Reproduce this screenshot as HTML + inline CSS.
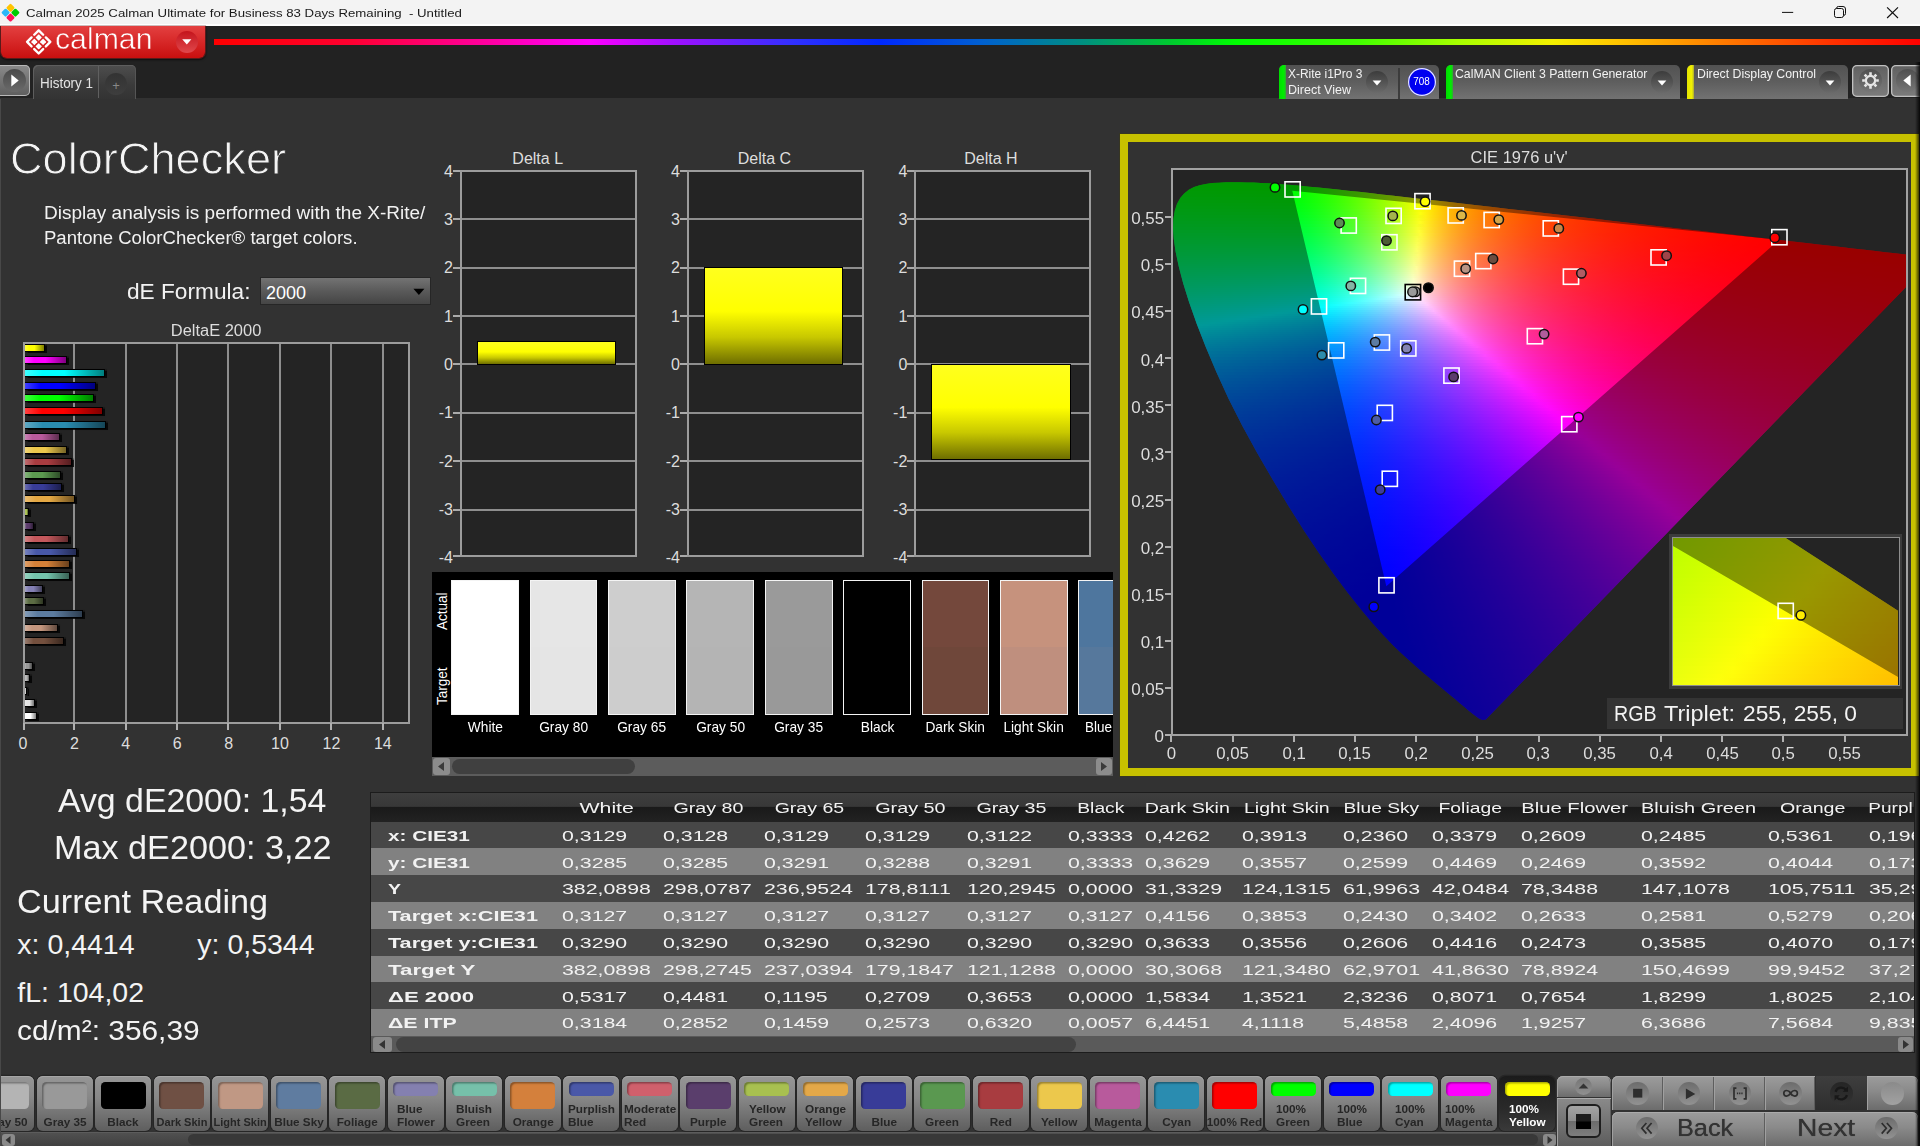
<!DOCTYPE html><html><head><meta charset="utf-8"><title>Calman ColorChecker</title><style>
html,body{margin:0;padding:0}body{width:1920px;height:1146px;overflow:hidden;background:#323232;position:relative;font-family:"Liberation Sans",sans-serif;color:#eee}
div,span.t,svg{position:absolute;box-sizing:border-box}.cg i{position:absolute;display:block}.t{white-space:pre;line-height:1;transform-origin:0 0}
</style></head><body>
<div style="left:0px;top:0px;width:1920px;height:25.7px;background:linear-gradient(#f3f3f3 24.4px,#fff 24.4px)"></div>
<svg style="left:0;top:0" width="24" height="25" viewBox="0 0 24 25"><g transform="translate(10.5,12.7) rotate(45)">
<rect x="-6.6" y="-6.6" width="6.3" height="6.3" rx="1.2" fill="#ffc400"/><rect x="0.3" y="-6.6" width="6.3" height="6.3" rx="1.2" fill="#0c0"/>
<rect x="-6.6" y="0.3" width="6.3" height="6.3" rx="1.2" fill="#2bb8f8"/><rect x="0.3" y="0.3" width="6.3" height="6.3" rx="1.2" fill="#ff1458"/></g></svg>
<span class="t" style="left:26px;top:7.71px;font-size:11.8px;color:#1a1a1a;transform:scaleX(1.121);">Calman 2025 Calman Ultimate for Business 83 Days Remaining  - Untitled</span>
<svg style="left:1770px;top:0" width="150" height="25" viewBox="1770 0 150 25" fill="none" stroke="#111" stroke-width="1">
<path d="M1782 12.4h11.2"/><rect x="1834.5" y="8.5" width="9" height="9" rx="2"/><path d="M1836.6 8.4v-.1a1.8 1.8 0 0 1 1.8-1.8h4.6a2.5 2.5 0 0 1 2.5 2.5v4.6a1.8 1.8 0 0 1-1.8 1.8h-.1"/>
<path d="M1887.1 7.3l10.9 10.7M1898 7.3l-10.9 10.7" stroke-width="1.15"/></svg>
<div style="left:0px;top:25.7px;width:1920px;height:72.8px;background:#222"></div>
<div style="left:1px;top:25.7px;width:204px;height:32.4px;background:linear-gradient(#e34040,#d82a2a 45%,#c90f0f);border-radius:0 0 6px 6px;box-shadow:0 0 0 1px #5a1a1a,0 1px 2px 1px rgba(0,0,0,.6);clip-path:inset(0 -4px -5px -4px)"></div>
<svg style="left:20px;top:25px" width="40" height="34" viewBox="20 25 40 34"><g transform="translate(38.7,41.9) rotate(45)" fill="#fff">
<rect x="-5.4" y="-5.4" width="4.6" height="4.6" rx=".5"/><rect x=".8" y="-5.4" width="4.6" height="4.6" rx=".5"/><rect x="-5.4" y=".8" width="4.6" height="4.6" rx=".5"/><rect x=".8" y=".8" width="4.6" height="4.6" rx=".5"/>
<g fill="none" stroke="#fff" stroke-width="2.4" stroke-linecap="round" stroke-linejoin="round"><path d="M-8.2 -1.9V-8.2H-1.9"/><path d="M8.2 -1.9V-8.2H1.9"/><path d="M-8.2 1.9V8.2H-1.9"/><path d="M8.2 1.9V8.2H1.9"/></g></g></svg>
<span class="t" style="left:54.6px;top:24.75px;font-size:29px;color:#fff;transform:scaleX(1.043);-webkit-text-stroke:.5px #d42020;">calman</span>
<div style="left:175.5px;top:30.5px;width:22px;height:22px;border-radius:50%;background:linear-gradient(#c4141c,#e0484c)"></div>
<svg style="left:180px;top:37px" width="14" height="10" viewBox="0 0 14 10"><path d="M2.2 2.2h9.2l-4.6 5.2z" fill="#fff"/></svg>
<div style="left:214px;top:39.3px;width:1706px;height:5.6px;background:linear-gradient(90deg,#f00 0,#ff0030 8%,#ff00a0 16%,#f0f 22%,#a010ff 27%,#3030ff 34%,#0028ff 39%,#0060d0 45%,#009080 51%,#00c830 56%,#0f0 60%,#40ff00 67%,#a8ff00 73%,#f4f000 78.5%,#ffc800 82%,#ff8000 88%,#ff3000 95%,#f00 100%);filter:blur(.7px);clip-path:inset(-3px 0 -3px 0)"></div>
<div style="left:-4px;top:65px;width:34px;height:31px;border-radius:5px;background:linear-gradient(#8a8a8a,#5e5e5e);box-shadow:inset 0 0 0 1px #b8b8b8"></div>
<div style="left:3px;top:69px;width:23px;height:23px;border-radius:50%;background:linear-gradient(#4a4a4a,#6a6a6a)"></div>
<svg style="left:9px;top:73px" width="12" height="15" viewBox="0 0 12 15"><path d="M2.3 1.6l7.4 5.9-7.4 5.9z" fill="#fff"/></svg>
<div style="left:33px;top:65px;width:103px;height:34px;border-radius:5px 5px 0 0;background:linear-gradient(#4e4e4e,#3a3a3a 60%,#333);box-shadow:inset 1px 1px 0 #5e5e5e,inset -1px 0 0 #555"></div>
<div style="left:98px;top:66px;width:1px;height:32px;background:#606060"></div>
<span class="t" style="left:39.5px;top:76.45px;font-size:14px;color:#e4e4e4;transform:scaleX(0.96);">History 1</span>
<div style="left:105px;top:73px;width:22px;height:22px;border-radius:50%;background:linear-gradient(#333,#3e3e3e)"></div>
<span class="t" style="left:112.2px;top:78.5px;font-size:13px;color:#888;transform-origin:50% 0;">+</span>
<div style="left:1278.5px;top:65px;width:160.5px;height:34px;border-radius:5px 5px 0 0;background:linear-gradient(#525252,#5e5e5e 50%,#727272);overflow:hidden"><div style="left:0;top:0;width:7px;height:34px;background:linear-gradient(90deg,#0d0,#0e0 70%,#3a3)"></div></div>
<span class="t" style="left:1288px;top:67.03px;font-size:13.2px;color:#f2f2f2;transform:scaleX(0.907);">X-Rite i1Pro 3</span>
<span class="t" style="left:1288px;top:83.43px;font-size:13.2px;color:#f2f2f2;transform:scaleX(0.948);">Direct View</span>
<div style="left:1366px;top:70.7px;width:22px;height:22px;border-radius:50%;background:linear-gradient(#3c3c3c,#6a6a6a)"></div>
<svg style="left:1370px;top:77.7px" width="14" height="10" viewBox="0 0 14 10"><path d="M2.6 2.4h8.8l-4.4 5z" fill="#fff"/></svg>
<div style="left:1398px;top:68px;width:1.5px;height:31px;background:#3c3c3c"></div>
<div style="left:1407.5px;top:67.5px;width:28.5px;height:28.5px;border-radius:50%;background:#0000f0;box-shadow:inset 0 0 0 1.2px #e8e8ff"></div>
<span class="t" style="left:1412.21px;top:76.27px;font-size:11.5px;color:#fff;transform:scaleX(0.86);transform-origin:50% 0;">708</span>
<div style="left:1446px;top:65px;width:234px;height:34px;border-radius:5px 5px 0 0;background:linear-gradient(#525252,#5e5e5e 50%,#727272);overflow:hidden"><div style="left:0;top:0;width:7px;height:34px;background:linear-gradient(90deg,#0d0,#0e0 70%,#3a3)"></div></div>
<span class="t" style="left:1455px;top:67.03px;font-size:13.2px;color:#f2f2f2;transform:scaleX(0.931);">CalMAN Client 3 Pattern Generator</span>
<div style="left:1650.7px;top:70.7px;width:22px;height:22px;border-radius:50%;background:linear-gradient(#3c3c3c,#6a6a6a)"></div>
<svg style="left:1654.7px;top:77.7px" width="14" height="10" viewBox="0 0 14 10"><path d="M2.6 2.4h8.8l-4.4 5z" fill="#fff"/></svg>
<div style="left:1687px;top:65px;width:161px;height:34px;border-radius:5px 5px 0 0;background:linear-gradient(#525252,#5e5e5e 50%,#727272);overflow:hidden"><div style="left:0;top:0;width:7px;height:34px;background:linear-gradient(90deg,#e6e600,#f0f000 70%,#aa3)"></div></div>
<span class="t" style="left:1696.5px;top:67.03px;font-size:13.2px;color:#f2f2f2;transform:scaleX(0.933);">Direct Display Control</span>
<div style="left:1819px;top:70.7px;width:22px;height:22px;border-radius:50%;background:linear-gradient(#3c3c3c,#6a6a6a)"></div>
<svg style="left:1823px;top:77.7px" width="14" height="10" viewBox="0 0 14 10"><path d="M2.6 2.4h8.8l-4.4 5z" fill="#fff"/></svg>
<div style="left:1851.5px;top:65px;width:37.5px;height:31.5px;border-radius:5px;background:linear-gradient(#606060,#7c7c7c);box-shadow:inset 0 0 0 1.3px #c0c0c0"></div>
<div style="left:1859px;top:69px;width:23px;height:23px;border-radius:50%;background:linear-gradient(#505050,#767676)"></div>
<svg style="left:1861px;top:71px" width="19" height="19" viewBox="-9.5 -9.5 19 19"><g fill="none" stroke="#e6e6e6"><circle r="4.6" stroke-width="2.2"/>
<g stroke-width="2.6"><path d="M0-5.6V-8.3M0 5.6V8.3M-5.6 0H-8.3M5.6 0H8.3M3.96 3.96l1.9 1.9M-3.96 3.96l-1.9 1.9M3.96-3.96l1.9-1.9M-3.96-3.96l-1.9-1.9"/></g></g></svg>
<div style="left:1890.5px;top:65px;width:40px;height:31.5px;border-radius:5px;background:linear-gradient(#606060,#7c7c7c);box-shadow:inset 0 0 0 1.3px #c0c0c0"></div>
<div style="left:1896px;top:69px;width:23px;height:23px;border-radius:50%;background:linear-gradient(#505050,#767676)"></div>
<svg style="left:1901px;top:73px" width="12" height="15" viewBox="0 0 12 15"><path d="M9.7 1.6l-7.4 5.9 7.4 5.9z" fill="#fff"/></svg>
<span class="t" style="left:10px;top:138.18px;font-size:43.5px;color:#f4f4f4;transform:scaleX(1.038);-webkit-text-stroke:.9px #323232;">ColorChecker</span>
<span class="t" style="left:43.8px;top:204.16px;font-size:18px;color:#f2f2f2;transform:scaleX(1.056);">Display analysis is performed with the X-Rite/</span>
<span class="t" style="left:43.8px;top:229.36px;font-size:18px;color:#f2f2f2;transform:scaleX(1.03);">Pantone ColorChecker® target colors.</span>
<span class="t" style="left:127.2px;top:280.85px;font-size:21.8px;color:#f2f2f2;transform:scaleX(1.04);">dE Formula:</span>
<div style="left:260px;top:276.5px;width:171px;height:28.5px;background:linear-gradient(#737373,#5a5a5a 50%,#454545);border:1px solid #262626"></div>
<span class="t" style="left:266px;top:284.46px;font-size:18px;color:#fff;">2000</span>
<svg style="left:412px;top:287px" width="14" height="10" viewBox="0 0 14 10"><path d="M1.4 1.7h11l-5.5 6.3z" fill="#000"/></svg>
<span class="t" style="left:172.47px;top:322.86px;font-size:16px;color:#ddd;transform:scaleX(1.028);transform-origin:50% 0;">DeltaE 2000</span>
<div style="left:23px;top:342px;width:386.5px;height:382px;background:#242424;border:2px solid #9c9c9c;overflow:hidden"><div style="left:48.1px;top:0;width:2px;height:100%;background:#8e8e8e"></div><div style="left:99.5px;top:0;width:2px;height:100%;background:#8e8e8e"></div><div style="left:150.9px;top:0;width:2px;height:100%;background:#8e8e8e"></div><div style="left:202.3px;top:0;width:2px;height:100%;background:#8e8e8e"></div><div style="left:253.7px;top:0;width:2px;height:100%;background:#8e8e8e"></div><div style="left:305.1px;top:0;width:2px;height:100%;background:#8e8e8e"></div><div style="left:356.5px;top:0;width:2px;height:100%;background:#8e8e8e"></div></div>
<div style="left:24.9px;top:344.1px;width:19.85px;height:8px;background:linear-gradient(90deg,#ffff3f 0,#ffff00 22%,#ffff00 50%,#7f7f00 100%);border:1px solid #000;border-left:0;box-shadow:1px 0 1px 0.5px rgba(0,0,0,.8)"></div>
<div style="left:24.9px;top:356.4px;width:41.86px;height:8px;background:linear-gradient(90deg,#ff3fff 0,#ff00ff 22%,#ff00ff 50%,#7f007f 100%);border:1px solid #000;border-left:0;box-shadow:1px 0 1px 0.5px rgba(0,0,0,.8)"></div>
<div style="left:24.9px;top:368.9px;width:79.75px;height:8px;background:linear-gradient(90deg,#3fffff 0,#00ffff 22%,#00ffff 50%,#007f7f 100%);border:1px solid #000;border-left:0;box-shadow:1px 0 1px 0.5px rgba(0,0,0,.8)"></div>
<div style="left:24.9px;top:381.6px;width:70.79px;height:8px;background:linear-gradient(90deg,#3f3fff 0,#0000ff 22%,#0000ff 50%,#00007f 100%);border:1px solid #000;border-left:0;box-shadow:1px 0 1px 0.5px rgba(0,0,0,.8)"></div>
<div style="left:24.9px;top:394.1px;width:68.74px;height:8px;background:linear-gradient(90deg,#3fff3f 0,#00ff00 22%,#00ff00 50%,#007f00 100%);border:1px solid #000;border-left:0;box-shadow:1px 0 1px 0.5px rgba(0,0,0,.8)"></div>
<div style="left:24.9px;top:406.6px;width:77.96px;height:8px;background:linear-gradient(90deg,#ff3f3f 0,#ff0000 22%,#ff0000 50%,#7f0000 100%);border:1px solid #000;border-left:0;box-shadow:1px 0 1px 0.5px rgba(0,0,0,.8)"></div>
<div style="left:24.9px;top:420.5px;width:81.03px;height:8px;background:linear-gradient(90deg,#5fa8c3 0,#2a8cb0 22%,#2a8cb0 50%,#154658 100%);border:1px solid #000;border-left:0;box-shadow:1px 0 1px 0.5px rgba(0,0,0,.8)"></div>
<div style="left:24.9px;top:433.1px;width:34.7px;height:8px;background:linear-gradient(90deg,#c983b4 0,#b85a9c 22%,#b85a9c 50%,#5c2d4e 100%);border:1px solid #000;border-left:0;box-shadow:1px 0 1px 0.5px rgba(0,0,0,.8)"></div>
<div style="left:24.9px;top:445.7px;width:41.86px;height:8px;background:linear-gradient(90deg,#f0d578 0,#ecc84c 22%,#ecc84c 50%,#766426 100%);border:1px solid #000;border-left:0;box-shadow:1px 0 1px 0.5px rgba(0,0,0,.8)"></div>
<div style="left:24.9px;top:458.1px;width:46.73px;height:8px;background:linear-gradient(90deg,#bd6c6f 0,#a83c40 22%,#a83c40 50%,#541e20 100%);border:1px solid #000;border-left:0;box-shadow:1px 0 1px 0.5px rgba(0,0,0,.8)"></div>
<div style="left:24.9px;top:470.6px;width:35.98px;height:8px;background:linear-gradient(90deg,#84b37b 0,#5c9a50 22%,#5c9a50 50%,#2e4d28 100%);border:1px solid #000;border-left:0;box-shadow:1px 0 1px 0.5px rgba(0,0,0,.8)"></div>
<div style="left:24.9px;top:483px;width:37.51px;height:8px;background:linear-gradient(90deg,#696cb1 0,#383c98 22%,#383c98 50%,#1c1e4c 100%);border:1px solid #000;border-left:0;box-shadow:1px 0 1px 0.5px rgba(0,0,0,.8)"></div>
<div style="left:24.9px;top:495.4px;width:49.8px;height:8px;background:linear-gradient(90deg,#eabd72 0,#e4a844 22%,#e4a844 50%,#725422 100%);border:1px solid #000;border-left:0;box-shadow:1px 0 1px 0.5px rgba(0,0,0,.8)"></div>
<div style="left:24.9px;top:508.3px;width:4.23px;height:8px;background:linear-gradient(90deg,#bdcf7b 0,#a8c050 22%,#a8c050 50%,#546028 100%);border:1px solid #000;border-left:0;box-shadow:1px 0 1px 0.5px rgba(0,0,0,.8)"></div>
<div style="left:24.9px;top:522.3px;width:9.1px;height:8px;background:linear-gradient(90deg,#846c90 0,#5c3c6c 22%,#5c3c6c 50%,#2e1e36 100%);border:1px solid #000;border-left:0;box-shadow:1px 0 1px 0.5px rgba(0,0,0,.8)"></div>
<div style="left:24.9px;top:534.8px;width:43.66px;height:8px;background:linear-gradient(90deg,#d28184 0,#c4585c 22%,#c4585c 50%,#622c2e 100%);border:1px solid #000;border-left:0;box-shadow:1px 0 1px 0.5px rgba(0,0,0,.8)"></div>
<div style="left:24.9px;top:547.6px;width:52.36px;height:8px;background:linear-gradient(90deg,#7581bd 0,#4858a8 22%,#4858a8 50%,#242c54 100%);border:1px solid #000;border-left:0;box-shadow:1px 0 1px 0.5px rgba(0,0,0,.8)"></div>
<div style="left:24.9px;top:559.7px;width:44.68px;height:8px;background:linear-gradient(90deg,#de9f69 0,#d48038 22%,#d48038 50%,#6a401c 100%);border:1px solid #000;border-left:0;box-shadow:1px 0 1px 0.5px rgba(0,0,0,.8)"></div>
<div style="left:24.9px;top:572.1px;width:45.45px;height:8px;background:linear-gradient(90deg,#96d2c0 0,#74c4ac 22%,#74c4ac 50%,#3a6256 100%);border:1px solid #000;border-left:0;box-shadow:1px 0 1px 0.5px rgba(0,0,0,.8)"></div>
<div style="left:24.9px;top:584.6px;width:18.31px;height:8px;background:linear-gradient(90deg,#a29fc6 0,#8480b4 22%,#8480b4 50%,#42405a 100%);border:1px solid #000;border-left:0;box-shadow:1px 0 1px 0.5px rgba(0,0,0,.8)"></div>
<div style="left:24.9px;top:597px;width:19.34px;height:8px;background:linear-gradient(90deg,#849072 0,#5c6c44 22%,#5c6c44 50%,#2e3622 100%);border:1px solid #000;border-left:0;box-shadow:1px 0 1px 0.5px rgba(0,0,0,.8)"></div>
<div style="left:24.9px;top:609.9px;width:57.99px;height:8px;background:linear-gradient(90deg,#849cb7 0,#5c7ca0 22%,#5c7ca0 50%,#2e3e50 100%);border:1px solid #000;border-left:0;box-shadow:1px 0 1px 0.5px rgba(0,0,0,.8)"></div>
<div style="left:24.9px;top:623.9px;width:33.16px;height:8px;background:linear-gradient(90deg,#d2b09e 0,#c4967e 22%,#c4967e 50%,#624b3f 100%);border:1px solid #000;border-left:0;box-shadow:1px 0 1px 0.5px rgba(0,0,0,.8)"></div>
<div style="left:24.9px;top:636.8px;width:39.05px;height:8px;background:linear-gradient(90deg,#967b6e 0,#74503e 22%,#74503e 50%,#3a281f 100%);border:1px solid #000;border-left:0;box-shadow:1px 0 1px 0.5px rgba(0,0,0,.8)"></div>
<div style="left:24.9px;top:661.6px;width:7.94px;height:8px;background:linear-gradient(90deg,#b2b2b2 0,#999 22%,#999 50%,#4c4c4c 100%);border:1px solid #000;border-left:0;box-shadow:1px 0 1px 0.5px rgba(0,0,0,.8)"></div>
<div style="left:24.9px;top:674.1px;width:5.51px;height:8px;background:linear-gradient(90deg,#c6c6c6 0,#b4b4b4 22%,#b4b4b4 50%,#5a5a5a 100%);border:1px solid #000;border-left:0;box-shadow:1px 0 1px 0.5px rgba(0,0,0,.8)"></div>
<div style="left:24.9px;top:686.5px;width:1.67px;height:8px;background:linear-gradient(90deg,#d9d9d9 0,#cdcdcd 22%,#cdcdcd 50%,#666666 100%);border:1px solid #000;border-left:0;box-shadow:1px 0 1px 0.5px rgba(0,0,0,.8)"></div>
<div style="left:24.9px;top:699px;width:10.07px;height:8px;background:linear-gradient(90deg,#ebebeb 0,#e5e5e5 22%,#e5e5e5 50%,#727272 100%);border:1px solid #000;border-left:0;box-shadow:1px 0 1px 0.5px rgba(0,0,0,.8)"></div>
<div style="left:24.9px;top:711.8px;width:12.17px;height:8px;background:linear-gradient(90deg,#ffffff 0,#fff 22%,#fff 50%,#7f7f7f 100%);border:1px solid #000;border-left:0;box-shadow:1px 0 1px 0.5px rgba(0,0,0,.8)"></div>
<div style="left:22.8px;top:723px;width:2px;height:7px;background:#b0b0b0"></div>
<span class="t" style="left:18.55px;top:735.76px;font-size:16px;color:#ddd;transform-origin:50% 0;">0</span>
<div style="left:73.1px;top:723px;width:2px;height:7px;background:#b0b0b0"></div>
<span class="t" style="left:69.95px;top:735.76px;font-size:16px;color:#ddd;transform-origin:50% 0;">2</span>
<div style="left:124.5px;top:723px;width:2px;height:7px;background:#b0b0b0"></div>
<span class="t" style="left:121.35px;top:735.76px;font-size:16px;color:#ddd;transform-origin:50% 0;">4</span>
<div style="left:175.9px;top:723px;width:2px;height:7px;background:#b0b0b0"></div>
<span class="t" style="left:172.75px;top:735.76px;font-size:16px;color:#ddd;transform-origin:50% 0;">6</span>
<div style="left:227.3px;top:723px;width:2px;height:7px;background:#b0b0b0"></div>
<span class="t" style="left:224.15px;top:735.76px;font-size:16px;color:#ddd;transform-origin:50% 0;">8</span>
<div style="left:278.7px;top:723px;width:2px;height:7px;background:#b0b0b0"></div>
<span class="t" style="left:271.1px;top:735.76px;font-size:16px;color:#ddd;transform-origin:50% 0;">10</span>
<div style="left:330.1px;top:723px;width:2px;height:7px;background:#b0b0b0"></div>
<span class="t" style="left:322.5px;top:735.76px;font-size:16px;color:#ddd;transform-origin:50% 0;">12</span>
<div style="left:381.5px;top:723px;width:2px;height:7px;background:#b0b0b0"></div>
<span class="t" style="left:373.9px;top:735.76px;font-size:16px;color:#ddd;transform-origin:50% 0;">14</span>
<span class="t" style="left:58.3px;top:784.79px;font-size:32.5px;color:#f4f4f4;transform:scaleX(1.041);">Avg dE2000: 1,54</span>
<span class="t" style="left:54px;top:831.79px;font-size:32.5px;color:#f4f4f4;transform:scaleX(1.052);">Max dE2000: 3,22</span>
<span class="t" style="left:17.3px;top:885.99px;font-size:32.5px;color:#f4f4f4;transform:scaleX(1.053);">Current Reading</span>
<span class="t" style="left:17.3px;top:930.17px;font-size:28.5px;color:#f4f4f4;">x: 0,4414</span>
<span class="t" style="left:197.3px;top:930.17px;font-size:28.5px;color:#f4f4f4;">y: 0,5344</span>
<span class="t" style="left:17.3px;top:977.57px;font-size:28.5px;color:#f4f4f4;">fL: 104,02</span>
<span class="t" style="left:17.3px;top:1016.07px;font-size:28.5px;color:#f4f4f4;transform:scaleX(1.048);">cd/m²: 356,39</span>
<div style="left:459.5px;top:169.6px;width:177px;height:387.8px;background:#242424;border:2px solid #9c9c9c;overflow:hidden"><div style="left:0;top:46.6px;width:100%;height:2px;background:#8e8e8e"></div><div style="left:0;top:95px;width:100%;height:2px;background:#8e8e8e"></div><div style="left:0;top:143.4px;width:100%;height:2px;background:#8e8e8e"></div><div style="left:0;top:191.8px;width:100%;height:2px;background:#8e8e8e"></div><div style="left:0;top:240.2px;width:100%;height:2px;background:#8e8e8e"></div><div style="left:0;top:288.6px;width:100%;height:2px;background:#8e8e8e"></div><div style="left:0;top:337px;width:100%;height:2px;background:#8e8e8e"></div></div>
<div style="left:453px;top:169.6px;width:6.5px;height:2px;background:#aaa"></div>
<span class="t" style="left:444.09px;top:164.06px;font-size:16px;color:#ddd;transform-origin:100% 0;">4</span>
<div style="left:453px;top:218.2px;width:6.5px;height:2px;background:#aaa"></div>
<span class="t" style="left:444.09px;top:211.86px;font-size:16px;color:#ddd;transform-origin:100% 0;">3</span>
<div style="left:453px;top:266.6px;width:6.5px;height:2px;background:#aaa"></div>
<span class="t" style="left:444.09px;top:260.26px;font-size:16px;color:#ddd;transform-origin:100% 0;">2</span>
<div style="left:453px;top:315px;width:6.5px;height:2px;background:#aaa"></div>
<span class="t" style="left:444.09px;top:308.66px;font-size:16px;color:#ddd;transform-origin:100% 0;">1</span>
<div style="left:453px;top:363.4px;width:6.5px;height:2px;background:#aaa"></div>
<span class="t" style="left:444.09px;top:357.06px;font-size:16px;color:#ddd;transform-origin:100% 0;">0</span>
<div style="left:453px;top:411.8px;width:6.5px;height:2px;background:#aaa"></div>
<span class="t" style="left:438.77px;top:405.46px;font-size:16px;color:#ddd;transform-origin:100% 0;">-1</span>
<div style="left:453px;top:460.2px;width:6.5px;height:2px;background:#aaa"></div>
<span class="t" style="left:438.77px;top:453.86px;font-size:16px;color:#ddd;transform-origin:100% 0;">-2</span>
<div style="left:453px;top:508.6px;width:6.5px;height:2px;background:#aaa"></div>
<span class="t" style="left:438.77px;top:502.26px;font-size:16px;color:#ddd;transform-origin:100% 0;">-3</span>
<div style="left:453px;top:555.4px;width:6.5px;height:2px;background:#aaa"></div>
<span class="t" style="left:438.77px;top:550.26px;font-size:16px;color:#ddd;transform-origin:100% 0;">-4</span>
<span class="t" style="left:512.35px;top:150.86px;font-size:16px;color:#ddd;transform-origin:50% 0;">Delta L</span>
<div style="left:477px;top:341.15px;width:139.3px;height:23.75px;background:linear-gradient(#ffff1e 0,#ff0 45%,#c8c800 72%,#6e6e00 100%);border:1px solid #000"></div>
<div style="left:686.5px;top:169.6px;width:177px;height:387.8px;background:#242424;border:2px solid #9c9c9c;overflow:hidden"><div style="left:0;top:46.6px;width:100%;height:2px;background:#8e8e8e"></div><div style="left:0;top:95px;width:100%;height:2px;background:#8e8e8e"></div><div style="left:0;top:143.4px;width:100%;height:2px;background:#8e8e8e"></div><div style="left:0;top:191.8px;width:100%;height:2px;background:#8e8e8e"></div><div style="left:0;top:240.2px;width:100%;height:2px;background:#8e8e8e"></div><div style="left:0;top:288.6px;width:100%;height:2px;background:#8e8e8e"></div><div style="left:0;top:337px;width:100%;height:2px;background:#8e8e8e"></div></div>
<div style="left:680px;top:169.6px;width:6.5px;height:2px;background:#aaa"></div>
<span class="t" style="left:671.09px;top:164.06px;font-size:16px;color:#ddd;transform-origin:100% 0;">4</span>
<div style="left:680px;top:218.2px;width:6.5px;height:2px;background:#aaa"></div>
<span class="t" style="left:671.09px;top:211.86px;font-size:16px;color:#ddd;transform-origin:100% 0;">3</span>
<div style="left:680px;top:266.6px;width:6.5px;height:2px;background:#aaa"></div>
<span class="t" style="left:671.09px;top:260.26px;font-size:16px;color:#ddd;transform-origin:100% 0;">2</span>
<div style="left:680px;top:315px;width:6.5px;height:2px;background:#aaa"></div>
<span class="t" style="left:671.09px;top:308.66px;font-size:16px;color:#ddd;transform-origin:100% 0;">1</span>
<div style="left:680px;top:363.4px;width:6.5px;height:2px;background:#aaa"></div>
<span class="t" style="left:671.09px;top:357.06px;font-size:16px;color:#ddd;transform-origin:100% 0;">0</span>
<div style="left:680px;top:411.8px;width:6.5px;height:2px;background:#aaa"></div>
<span class="t" style="left:665.77px;top:405.46px;font-size:16px;color:#ddd;transform-origin:100% 0;">-1</span>
<div style="left:680px;top:460.2px;width:6.5px;height:2px;background:#aaa"></div>
<span class="t" style="left:665.77px;top:453.86px;font-size:16px;color:#ddd;transform-origin:100% 0;">-2</span>
<div style="left:680px;top:508.6px;width:6.5px;height:2px;background:#aaa"></div>
<span class="t" style="left:665.77px;top:502.26px;font-size:16px;color:#ddd;transform-origin:100% 0;">-3</span>
<div style="left:680px;top:555.4px;width:6.5px;height:2px;background:#aaa"></div>
<span class="t" style="left:665.77px;top:550.26px;font-size:16px;color:#ddd;transform-origin:100% 0;">-4</span>
<span class="t" style="left:737.82px;top:150.86px;font-size:16px;color:#ddd;transform-origin:50% 0;">Delta C</span>
<div style="left:704px;top:267.1px;width:139.3px;height:97.8px;background:linear-gradient(#ffff1e 0,#ff0 45%,#c8c800 72%,#6e6e00 100%);border:1px solid #000"></div>
<div style="left:913.8px;top:169.6px;width:177px;height:387.8px;background:#242424;border:2px solid #9c9c9c;overflow:hidden"><div style="left:0;top:46.6px;width:100%;height:2px;background:#8e8e8e"></div><div style="left:0;top:95px;width:100%;height:2px;background:#8e8e8e"></div><div style="left:0;top:143.4px;width:100%;height:2px;background:#8e8e8e"></div><div style="left:0;top:191.8px;width:100%;height:2px;background:#8e8e8e"></div><div style="left:0;top:240.2px;width:100%;height:2px;background:#8e8e8e"></div><div style="left:0;top:288.6px;width:100%;height:2px;background:#8e8e8e"></div><div style="left:0;top:337px;width:100%;height:2px;background:#8e8e8e"></div></div>
<div style="left:907.3px;top:169.6px;width:6.5px;height:2px;background:#aaa"></div>
<span class="t" style="left:898.39px;top:164.06px;font-size:16px;color:#ddd;transform-origin:100% 0;">4</span>
<div style="left:907.3px;top:218.2px;width:6.5px;height:2px;background:#aaa"></div>
<span class="t" style="left:898.39px;top:211.86px;font-size:16px;color:#ddd;transform-origin:100% 0;">3</span>
<div style="left:907.3px;top:266.6px;width:6.5px;height:2px;background:#aaa"></div>
<span class="t" style="left:898.39px;top:260.26px;font-size:16px;color:#ddd;transform-origin:100% 0;">2</span>
<div style="left:907.3px;top:315px;width:6.5px;height:2px;background:#aaa"></div>
<span class="t" style="left:898.39px;top:308.66px;font-size:16px;color:#ddd;transform-origin:100% 0;">1</span>
<div style="left:907.3px;top:363.4px;width:6.5px;height:2px;background:#aaa"></div>
<span class="t" style="left:898.39px;top:357.06px;font-size:16px;color:#ddd;transform-origin:100% 0;">0</span>
<div style="left:907.3px;top:411.8px;width:6.5px;height:2px;background:#aaa"></div>
<span class="t" style="left:893.07px;top:405.46px;font-size:16px;color:#ddd;transform-origin:100% 0;">-1</span>
<div style="left:907.3px;top:460.2px;width:6.5px;height:2px;background:#aaa"></div>
<span class="t" style="left:893.07px;top:453.86px;font-size:16px;color:#ddd;transform-origin:100% 0;">-2</span>
<div style="left:907.3px;top:508.6px;width:6.5px;height:2px;background:#aaa"></div>
<span class="t" style="left:893.07px;top:502.26px;font-size:16px;color:#ddd;transform-origin:100% 0;">-3</span>
<div style="left:907.3px;top:555.4px;width:6.5px;height:2px;background:#aaa"></div>
<span class="t" style="left:893.07px;top:550.26px;font-size:16px;color:#ddd;transform-origin:100% 0;">-4</span>
<span class="t" style="left:964.32px;top:150.86px;font-size:16px;color:#ddd;transform-origin:50% 0;">Delta H</span>
<div style="left:931.3px;top:363.9px;width:139.3px;height:96.35px;background:linear-gradient(#ffff1e 0,#ff0 45%,#c8c800 72%,#6e6e00 100%);border:1px solid #000"></div>
<div style="left:432px;top:571.5px;width:681px;height:204.5px;background:#000"></div>
<div style="left:451.2px;top:579.5px;width:67.8px;height:135px;background:linear-gradient(#fff 50%,#fff 50%);border:1.2px solid #f4f4f4;border-right:1.2px solid #f4f4f4;"></div>
<div style="left:529.6px;top:579.5px;width:67.8px;height:135px;background:linear-gradient(#e6e6e6 50%,#e5e5e5 50%);border:1.2px solid #f4f4f4;border-right:1.2px solid #f4f4f4;"></div>
<div style="left:608px;top:579.5px;width:67.8px;height:135px;background:linear-gradient(#cecece 50%,#cdcdcd 50%);border:1.2px solid #f4f4f4;border-right:1.2px solid #f4f4f4;"></div>
<div style="left:686.4px;top:579.5px;width:67.8px;height:135px;background:linear-gradient(#b5b5b5 50%,#b4b4b4 50%);border:1.2px solid #f4f4f4;border-right:1.2px solid #f4f4f4;"></div>
<div style="left:764.8px;top:579.5px;width:67.8px;height:135px;background:linear-gradient(#9a9a9a 50%,#999 50%);border:1.2px solid #f4f4f4;border-right:1.2px solid #f4f4f4;"></div>
<div style="left:843.2px;top:579.5px;width:67.8px;height:135px;background:linear-gradient(#000 50%,#000 50%);border:1.2px solid #f4f4f4;border-right:1.2px solid #f4f4f4;"></div>
<div style="left:921.6px;top:579.5px;width:67.8px;height:135px;background:linear-gradient(#74483c 50%,#6f473a 50%);border:1.2px solid #f4f4f4;border-right:1.2px solid #f4f4f4;"></div>
<div style="left:1000px;top:579.5px;width:67.8px;height:135px;background:linear-gradient(#c6927d 50%,#bf8f7e 50%);border:1.2px solid #f4f4f4;border-right:1.2px solid #f4f4f4;"></div>
<div style="left:1078.4px;top:579.5px;width:34.6px;height:135px;background:linear-gradient(#4e769e 50%,#56789c 50%);border:1.2px solid #f4f4f4;border-right:0;"></div>
<span class="t" style="left:466.7px;top:719.81px;font-size:14.4px;color:#fff;transform-origin:50% 0;transform:scaleX(.955);">White</span>
<span class="t" style="left:537.9px;top:719.81px;font-size:14.4px;color:#fff;transform-origin:50% 0;transform:scaleX(.955);">Gray 80</span>
<span class="t" style="left:616.3px;top:719.81px;font-size:14.4px;color:#fff;transform-origin:50% 0;transform:scaleX(.955);">Gray 65</span>
<span class="t" style="left:694.7px;top:719.81px;font-size:14.4px;color:#fff;transform-origin:50% 0;transform:scaleX(.955);">Gray 50</span>
<span class="t" style="left:773.1px;top:719.81px;font-size:14.4px;color:#fff;transform-origin:50% 0;transform:scaleX(.955);">Gray 35</span>
<span class="t" style="left:859.5px;top:719.81px;font-size:14.4px;color:#fff;transform-origin:50% 0;transform:scaleX(.955);">Black</span>
<span class="t" style="left:924.3px;top:719.81px;font-size:14.4px;color:#fff;transform-origin:50% 0;transform:scaleX(.955);">Dark Skin</span>
<span class="t" style="left:1002.3px;top:719.81px;font-size:14.4px;color:#fff;transform-origin:50% 0;transform:scaleX(.955);">Light Skin</span>
<span class="t" style="left:1084.5px;top:719.81px;font-size:14.4px;color:#fff;transform:scaleX(0.937);">Blue</span>
<span class="t" style="left:434.5px;top:629.5px;font-size:14.4px;color:#fff;transform:rotate(-90deg) scaleX(.94);transform-origin:0 0">Actual</span>
<span class="t" style="left:434.5px;top:704.5px;font-size:14.4px;color:#fff;transform:rotate(-90deg) scaleX(.94);transform-origin:0 0">Target</span>
<div style="left:432px;top:757px;width:681px;height:18.5px;background:#5c5c5c"></div>
<div style="left:452px;top:758.5px;width:183px;height:15.5px;background:#404040;border-radius:8px"></div>
<div style="left:433px;top:758px;width:16.5px;height:16.5px;background:#8c8c8c;border-radius:3px"></div>
<svg style="left:436px;top:761px" width="10" height="11" viewBox="0 0 10 11"><path d="M8 1L2 5.5 8 10z" fill="#3a3a3a"/></svg>
<div style="left:1095.5px;top:758px;width:16.5px;height:16.5px;background:#8c8c8c;border-radius:3px"></div>
<svg style="left:1099px;top:761px" width="10" height="11" viewBox="0 0 10 11"><path d="M2 1l6 4.5L2 10z" fill="#3a3a3a"/></svg>
<div style="left:1120px;top:134px;width:799px;height:642px;border:8px solid #c7c100;box-shadow:0 0 0 1px rgba(60,58,20,.55)"></div>
<span class="t" style="left:1471.91px;top:149.76px;font-size:16px;color:#ddd;transform:scaleX(1.03);transform-origin:50% 0;">CIE 1976 u&#x27;v&#x27;</span>
<div style="left:1170.8px;top:168.1px;width:737.3px;height:568px;background:#242424;border:2px solid #a2a2a2"></div>
<div style="left:1172.8px;top:170.1px;width:733.3px;height:564px;overflow:hidden"><div class="cg" style="left:0;top:0;width:733.3px;height:564px;clip-path:polygon(313px 549.38px,309.74px 549.91px,306.16px 548.29px,303.39px 546.36px,299.81px 543.59px,295.06px 539.82px,292.3px 537.51px,289.27px 534.9px,285.94px 532.04px,282.28px 528.97px,278.22px 525.6px,273.68px 521.84px,268.64px 517.67px,263.13px 513.13px,257.2px 508.23px,250.81px 502.89px,243.87px 496.95px,236.34px 490.27px,228.3px 482.83px,219.76px 474.56px,210.48px 465px,200.02px 453.37px,188.09px 439.2px,174.98px 422.67px,161.09px 404.11px,146.5px 383.46px,131.27px 360.62px,115.66px 335.85px,99.96px 309.78px,84.42px 282.96px,69.47px 255.71px,55.76px 228.56px,43.66px 202.22px,33.06px 177.11px,23.89px 153.61px,16.31px 132.17px,10.35px 113.06px,5.91px 96.27px,2.83px 81.59px,0.98px 68.91px,0.28px 58.08px,0.65px 48.73px,1.98px 40.64px,4.27px 33.76px,7.45px 28.01px,11.38px 23.33px,16.02px 19.71px,21.23px 17.01px,26.89px 15.09px,32.95px 13.82px,39.35px 13.03px,46.03px 12.54px,52.93px 12.28px,59.88px 12.18px,66.82px 12.19px,73.8px 12.3px,80.9px 12.52px,88.14px 12.83px,95.58px 13.24px,103.24px 13.75px,111.14px 14.34px,119.31px 15.01px,127.77px 15.76px,136.55px 16.59px,145.67px 17.49px,155.15px 18.46px,165.02px 19.49px,175.3px 20.59px,186.01px 21.76px,197.16px 22.99px,208.77px 24.29px,220.87px 25.65px,233.46px 27.07px,246.55px 28.56px,260.16px 30.12px,274.28px 31.74px,288.92px 33.42px,304.07px 35.17px,319.7px 36.97px,335.82px 38.82px,352.38px 40.73px,369.36px 42.67px,386.68px 44.66px,404.33px 46.69px,422.25px 48.75px,440.23px 50.83px,457.94px 52.87px,475.3px 54.87px,492.5px 56.84px,509.64px 58.82px,526.49px 60.75px,542.67px 62.61px,558.08px 64.37px,572.81px 66.06px,586.87px 67.67px,600.19px 69.2px,612.72px 70.65px,624.43px 72px,635.34px 73.25px,645.5px 74.42px,654.98px 75.51px,663.8px 76.52px,672px 77.46px,679.74px 78.35px,687.1px 79.2px,694.05px 80px,700.54px 80.75px,706.6px 81.44px,712.22px 82.09px,717.43px 82.69px,722.2px 83.24px,726.47px 83.73px,730.22px 84.16px,733.58px 84.55px,736.68px 84.9px,742.01px 85.52px,746.22px 86.01px,749.2px 86.35px,752.76px 86.76px,756.51px 87.19px,759.79px 87.57px,761.6px 87.78px)"><i style="left:25.2px;top:12px;width:96px;height:3.3px;background:linear-gradient(90deg,#00ff02,#00ff01,#0f0,#0f0,#0f0,#0f0,#0f0,#0f0,#0f0,#0f0,#0f0,#0f0,#03ff00)"></i><i style="left:17.2px;top:15px;width:135px;height:3.3px;background:linear-gradient(90deg,#00ff05,#00ff04,#00ff03,#00ff03,#00ff02,#00ff01,#00ff01,#0f0,#0f0,#0f0,#0f0,#0f0,#0f0,#02ff00,#0aff00,#13ff00,#1eff00,#2aff00)"></i><i style="left:12.2px;top:18px;width:169px;height:3.3px;background:linear-gradient(90deg,#00ff08,#00ff07,#00ff07,#00ff06,#00ff05,#00ff05,#00ff04,#00ff03,#00ff03,#00ff02,#00ff01,#00ff01,#0f0,#0f0,#0f0,#08ff00,#1f0,#1bff00,#26ff00,#32ff00,#3fff00,#4cff00,#5aff00)"></i><i style="left:9.2px;top:21px;width:199px;height:3.3px;background:linear-gradient(90deg,#00ff0b,#00ff0b,#00ff0a,#00ff09,#00ff09,#00ff08,#00ff07,#00ff06,#00ff06,#00ff05,#00ff04,#00ff04,#00ff03,#00ff02,#01ff01,#09ff01,#12ff00,#1dff00,#29ff00,#35ff00,#43ff00,#51ff00,#60ff00,#6fff00,#80ff00,#92ff00)"></i><i style="left:6.2px;top:24px;width:229px;height:3.3px;background:linear-gradient(90deg,#00ff0f,#00ff0e,#00ff0d,#00ff0d,#00ff0c,#00ff0b,#00ff0b,#00ff0a,#00ff09,#00ff09,#00ff08,#00ff07,#00ff06,#00ff06,#00ff05,#04ff04,#0cff03,#17ff02,#22ff02,#2eff01,#3bff00,#48ff00,#57ff00,#6f0,#76ff00,#87ff00,#9f0,#acff00,#c0ff00,#d5ff00)"></i><i style="left:4.2px;top:27px;width:257px;height:3.3px;background:linear-gradient(90deg,#00ff12,#0f1,#0f1,#00ff10,#00ff10,#00ff0f,#00ff0e,#00ff0e,#00ff0d,#00ff0c,#00ff0c,#00ff0b,#00ff0a,#00ff09,#00ff09,#00ff08,#07ff07,#11ff06,#1bff05,#27ff04,#33ff04,#40ff03,#4eff02,#5dff01,#6cff00,#7dff00,#8eff00,#a0ff00,#b3ff00,#c8ff00,#df0,#f3ff00,#fff400,#ffdf00)"></i><i style="left:2.2px;top:30px;width:285px;height:3.3px;background:linear-gradient(90deg,#00ff16,#00ff15,#00ff14,#00ff14,#00ff13,#00ff13,#00ff12,#0f1,#0f1,#00ff10,#00ff0f,#00ff0e,#00ff0e,#00ff0d,#00ff0c,#00ff0b,#07ff0b,#10ff0a,#1bff09,#27ff08,#33ff07,#41ff06,#4fff05,#5eff05,#6eff04,#7fff03,#91ff02,#a4ff01,#b8ff00,#cdff00,#e3ff00,#faff00,#ffed00,#ffd900,#ffc700,#ffb700,#ffa900)"></i><i style="left:1.2px;top:33px;width:312px;height:3.3px;background:linear-gradient(90deg,#00ff19,#00ff19,#00ff18,#00ff17,#00ff17,#00ff16,#00ff16,#00ff15,#00ff14,#00ff14,#00ff13,#00ff12,#00ff12,#0f1,#00ff10,#00ff0f,#06ff0f,#10ff0e,#1bff0d,#27ff0c,#34ff0b,#42ff0a,#50ff09,#60ff08,#70ff08,#81ff07,#94ff06,#a7ff05,#bbff04,#d1ff03,#e7ff02,#ffff01,#ffe800,#ffd400,#ffc200,#ffb200,#ffa400,#ff9800,#ff8c00,#ff8200)"></i><i style="left:0.2px;top:36px;width:339px;height:3.3px;background:linear-gradient(90deg,#00ff1d,#00ff1c,#00ff1c,#00ff1b,#00ff1b,#00ff1a,#00ff1a,#00ff19,#00ff18,#00ff18,#00ff17,#00ff16,#00ff16,#00ff15,#00ff14,#00ff14,#03ff13,#0bff12,#16ff11,#21ff11,#2eff10,#3bff0f,#49ff0e,#58ff0d,#68ff0c,#79ff0b,#8aff0a,#9dff09,#b1ff08,#c5ff07,#dbff06,#f2ff05,#fff404,#ffdf03,#ffcc02,#ffbb01,#ffac00,#ff9f00,#ff9300,#f80,#ff7e00,#ff7500,#ff6d00,#ff6500)"></i><i style="left:0.2px;top:39px;width:365px;height:3.3px;background:linear-gradient(90deg,#00ff20,#00ff20,#00ff20,#00ff1f,#00ff1e,#00ff1e,#00ff1d,#00ff1d,#00ff1c,#00ff1c,#00ff1b,#00ff1a,#00ff1a,#00ff19,#00ff19,#00ff18,#03ff17,#0cff16,#16ff16,#22ff15,#2fff14,#3cff13,#4aff13,#5aff12,#6aff11,#7bff10,#8dff0f,#a0ff0e,#b4ff0d,#caff0c,#e0ff0b,#f8ff0a,#ffef08,#ffda07,#ffc705,#ffb704,#ffa803,#ff9b02,#ff8f01,#ff8500,#ff7b00,#ff7200,#ff6a00,#ff6200,#ff5c00,#f50,#ff4f00)"></i><i style="left:0px;top:42px;width:391.2px;height:3.3px;background:linear-gradient(90deg,#00ff24,#00ff24,#00ff23,#00ff23,#0f2,#0f2,#00ff21,#00ff21,#00ff20,#00ff20,#00ff1f,#00ff1f,#00ff1e,#00ff1d,#00ff1d,#00ff1c,#03ff1c,#0cff1b,#17ff1a,#22ff19,#2fff19,#3dff18,#4cff17,#5bff16,#6cff16,#7dff15,#90ff14,#a3ff13,#b8ff12,#cdff11,#e4ff10,#fdff0f,#ffea0d,#ffd50b,#ffc309,#ffb307,#ffa406,#ff9805,#ff8c04,#ff8103,#ff7802,#ff6f01,#ff6701,#ff6000,#ff5900,#ff5300,#ff4d00,#ff4800,#ff4300,#ff3e00)"></i><i style="left:0px;top:45px;width:418.2px;height:3.3px;background:linear-gradient(90deg,#00ff28,#00ff28,#00ff27,#00ff27,#00ff26,#00ff26,#00ff26,#00ff25,#00ff25,#00ff24,#00ff24,#00ff23,#00ff23,#0f2,#00ff21,#00ff21,#01ff20,#09ff20,#13ff1f,#1fff1e,#2bff1e,#39ff1d,#47ff1c,#56ff1c,#67ff1b,#78ff1a,#8aff19,#9dff18,#b1ff18,#c6ff17,#ddff16,#f4ff15,#fff113,#ffdc10,#ffc90e,#ffb80c,#ffa90a,#ff9c09,#ff9007,#ff8506,#ff7b05,#ff7204,#ff6a03,#ff6202,#ff5b02,#ff5501,#ff4f01,#ff4a00,#ff4500,#ff4000,#ff3b00,#ff3700,#f30,#ff3000)"></i><i style="left:0px;top:48px;width:443.2px;height:3.3px;background:linear-gradient(90deg,#00ff2c,#00ff2c,#00ff2b,#00ff2b,#00ff2b,#00ff2a,#00ff2a,#00ff29,#00ff29,#00ff29,#00ff28,#00ff28,#00ff27,#00ff27,#00ff26,#00ff26,#00ff25,#09ff25,#13ff24,#1fff23,#2bff23,#39ff22,#47ff21,#57ff21,#67ff20,#79ff1f,#8bff1f,#9eff1e,#b3ff1d,#c9ff1c,#dfff1c,#f8ff1b,#ffee18,#ffd915,#ffc612,#ffb510,#ffa70e,#ff990c,#ff8e0b,#ff8309,#ff7908,#ff7007,#ff6806,#ff6105,#ff5a04,#ff5303,#ff4e03,#ff4802,#ff4301,#ff3e01,#ff3a00,#ff3600,#ff3200,#ff2f00,#ff2b00,#ff2800,#ff2500)"></i><i style="left:0px;top:51px;width:470.2px;height:3.3px;background:linear-gradient(90deg,#00ff30,#00ff30,#00ff2f,#00ff2f,#00ff2f,#00ff2e,#00ff2e,#00ff2e,#00ff2d,#00ff2d,#00ff2d,#00ff2c,#00ff2c,#00ff2b,#00ff2b,#00ff2a,#00ff2a,#09ff29,#14ff29,#20ff28,#2cff28,#3aff27,#49ff27,#59ff26,#6aff26,#7cff25,#8eff24,#a2ff24,#b7ff23,#ceff22,#e5ff21,#feff21,#ffe81d,#ffd31a,#ffc117,#ffb114,#ffa212,#ff9510,#ff8a0e,#ff7f0c,#ff750b,#ff6d0a,#ff6508,#ff5e07,#ff5706,#ff5105,#ff4b05,#ff4604,#ff4103,#ff3c02,#ff3802,#ff3401,#ff3001,#ff2d00,#ff2900,#ff2600,#ff2300,#ff2100,#ff1e00,#ff1c00)"></i><i style="left:0px;top:54px;width:496.2px;height:3.3px;background:linear-gradient(90deg,#00ff34,#00ff34,#00ff34,#0f3,#0f3,#0f3,#0f3,#00ff32,#00ff32,#00ff32,#00ff31,#00ff31,#00ff31,#00ff30,#00ff30,#00ff2f,#00ff2f,#06ff2f,#11ff2e,#1cff2e,#29ff2d,#36ff2d,#45ff2c,#54ff2c,#65ff2b,#76ff2b,#88ff2a,#9cff2a,#b0ff29,#c6ff29,#ddff28,#f5ff27,#fff024,#ffda20,#ffc71d,#ffb61a,#ffa717,#ff9a15,#ff8e13,#ff8311,#ff790f,#ff700e,#ff680c,#ff600b,#ff590a,#ff5309,#ff4d08,#ff4807,#ff4306,#ff3e05,#ff3904,#ff3504,#ff3203,#ff2e02,#ff2b02,#ff2701,#ff2401,#ff2201,#ff1f00,#ff1d00,#ff1a00,#ff1800,#ff1600,#ff1400)"></i><i style="left:0px;top:57px;width:522.2px;height:3.3px;background:linear-gradient(90deg,#00ff39,#00ff38,#00ff38,#00ff38,#00ff38,#00ff37,#00ff37,#00ff37,#00ff37,#00ff36,#00ff36,#00ff36,#00ff36,#00ff35,#00ff35,#00ff35,#00ff34,#06ff34,#11ff34,#1cff33,#29ff33,#37ff32,#46ff32,#55ff32,#66ff31,#78ff31,#8aff30,#9eff30,#b3ff2f,#caff2f,#e1ff2e,#faff2e,#ffec2a,#ffd625,#ffc322,#ffb21e,#ffa41b,#ff9619,#ff8b16,#ff8014,#ff7612,#ff6d11,#ff650f,#ff5e0e,#ff570c,#ff510b,#ff4b0a,#ff4609,#ff4108,#ff3c07,#ff3806,#ff3405,#ff3005,#ff2c04,#ff2903,#ff2603,#ff2302,#ff2002,#ff1e01,#ff1b01,#ff1901,#ff1700,#ff1500,#ff1300,#f10,#ff0f00,#ff0e00)"></i><i style="left:0px;top:60px;width:548.2px;height:3.3px;background:linear-gradient(90deg,#00ff3d,#00ff3d,#00ff3c,#00ff3c,#00ff3c,#00ff3c,#00ff3c,#00ff3c,#00ff3b,#00ff3b,#00ff3b,#00ff3b,#00ff3b,#00ff3a,#00ff3a,#00ff3a,#00ff3a,#06ff39,#11ff39,#1cff39,#29ff39,#37ff38,#46ff38,#56ff38,#67ff37,#79ff37,#8cff37,#a1ff36,#b6ff36,#cdff36,#e5ff35,#feff35,#ffe72f,#ffd22b,#ffc027,#ffaf23,#ffa120,#ff941d,#ff881a,#ff7d18,#ff7416,#ff6b14,#ff6312,#ff5c10,#ff550f,#ff4f0e,#ff490c,#ff440b,#ff3f0a,#ff3a09,#ff3608,#ff3207,#ff2e07,#ff2b06,#ff2805,#ff2505,#ff2204,#ff1f03,#ff1c03,#ff1a02,#ff1802,#ff1602,#ff1401,#ff1201,#ff1000,#ff0e00,#ff0d00,#ff0b00,#ff0a00,#ff0800)"></i><i style="left:0px;top:63px;width:574.2px;height:3.3px;background:linear-gradient(90deg,#00ff41,#00ff41,#00ff41,#00ff41,#00ff41,#00ff41,#00ff41,#00ff40,#00ff40,#00ff40,#00ff40,#00ff40,#00ff40,#00ff40,#00ff3f,#00ff3f,#00ff3f,#06ff3f,#11ff3f,#1cff3f,#2aff3e,#38ff3e,#47ff3e,#57ff3e,#68ff3e,#7bff3d,#8eff3d,#a3ff3d,#b9ff3d,#d0ff3c,#e8ff3c,#fffc3b,#ffe435,#ffcf30,#ffbc2c,#ffac28,#ff9e24,#ff9121,#ff851e,#ff7b1b,#ff7119,#ff6917,#ff6115,#ff5a13,#ff5312,#ff4d10,#ff470f,#ff420e,#ff3d0c,#ff390b,#ff340a,#ff3109,#ff2d09,#ff2908,#ff2607,#ff2306,#ff2006,#ff1e05,#ff1b04,#ff1904,#ff1703,#ff1503,#ff1302,#ff1102,#ff0f02,#ff0d01,#ff0c01,#ff0a01,#ff0900,#ff0800,#ff0600,#ff0500,#ff0400)"></i><i style="left:0px;top:66px;width:592.2px;height:2.3px;background:linear-gradient(90deg,#00ff45,#00ff45,#00ff45,#00ff45,#00ff45,#00ff45,#00ff45,#00ff45,#00ff45,#00ff45,#00ff45,#00ff45,#0f4,#0f4,#0f4,#0f4,#0f4,#0f4,#0f4,#0f4,#0f4,#0f4,#0f4,#0f4,#0f4,#0f4,#0f4,#04ff44,#0aff44,#1f4,#18ff44,#20ff44,#28ff43,#31ff43,#3aff43,#44ff43,#4eff43,#58ff43,#63ff43,#6eff43,#7aff43,#86ff43,#92ff43,#9fff43,#adff43,#bbff42,#c9ff42,#d8ff42,#e8ff42,#f8ff42,#fff640,#ffe73c,#ffd938,#ffcc35,#ffc132,#ffb62f,#ffac2c,#ffa32a,#ff9a27,#ff9225,#ff8b23,#ff8421,#ff7d20,#ff771e,#ff711c,#ff6b1b,#ff661a,#ff6118,#ff5d17,#ff5816,#ff5415,#ff5014,#ff4c13,#ff4912,#ff4511,#ff4210,#ff3f0f,#ff3c0f,#ff390e,#ff370d,#ff340c,#ff320c,#ff2f0b,#ff2d0b,#ff2b0a,#ff2909,#ff2709,#ff2508,#ff2308,#ff2107,#ff1f07,#ff1e07,#ff1c06,#ff1b06,#ff1905,#ff1805,#ff1605,#ff1504,#ff1404,#ff1304,#ff1103,#ff1003,#ff0f03,#ff0e03,#ff0d02,#ff0c02,#ff0b02,#ff0a02,#ff0901,#ff0801,#ff0801,#ff0701,#ff0601,#ff0500,#ff0500,#ff0400,#ff0300,#ff0300,#ff0200,#ff0200)"></i><i style="left:0px;top:68px;width:609.2px;height:2.3px;background:linear-gradient(90deg,#00ff48,#00ff48,#00ff48,#00ff48,#00ff48,#00ff48,#00ff48,#00ff48,#00ff48,#00ff48,#00ff48,#00ff48,#00ff48,#00ff48,#00ff48,#00ff48,#00ff48,#00ff48,#00ff48,#00ff48,#00ff48,#00ff48,#00ff48,#00ff48,#00ff48,#00ff48,#00ff48,#04ff48,#0aff48,#11ff48,#19ff48,#20ff48,#29ff48,#32ff48,#3bff48,#45ff47,#4fff47,#59ff47,#64ff47,#6fff47,#7bff47,#87ff47,#94ff47,#a1ff47,#afff47,#bdff47,#ccff47,#dbff47,#ebff47,#fbff47,#fff344,#ffe43f,#ffd63c,#ffca38,#ffbe35,#ffb332,#ffa92f,#ffa02d,#ff982a,#ff9028,#ff8826,#ff8124,#ff7b22,#ff7520,#ff6f1f,#ff6a1d,#ff641c,#ff601a,#ff5b19,#ff5718,#ff5317,#ff4f16,#ff4b15,#ff4714,#ff4413,#ff4112,#ff3e11,#ff3b10,#ff380f,#ff350f,#ff330e,#ff300d,#ff2e0d,#ff2c0c,#ff2a0b,#ff280b,#ff260a,#ff240a,#ff2209,#ff2009,#ff1e08,#ff1d08,#ff1b07,#ff1a07,#ff1806,#ff1706,#ff1606,#ff1405,#ff1305,#ff1205,#ff1104,#ff1004,#ff0e04,#ff0d03,#ff0c03,#ff0b03,#ff0a03,#ff0a02,#ff0902,#ff0802,#ff0702,#ff0601,#ff0501,#ff0501,#ff0401,#ff0301,#ff0301,#ff0200,#ff0200,#ff0100,#ff0100,#f00,#f00)"></i><i style="left:0px;top:70px;width:626.2px;height:2.3px;background:linear-gradient(90deg,#00ff4b,#00ff4b,#00ff4b,#00ff4b,#00ff4b,#00ff4b,#00ff4b,#00ff4b,#00ff4b,#00ff4b,#00ff4b,#00ff4b,#00ff4b,#00ff4b,#00ff4b,#00ff4b,#00ff4b,#00ff4b,#00ff4b,#00ff4b,#00ff4b,#00ff4b,#00ff4b,#00ff4b,#00ff4c,#00ff4c,#00ff4c,#03ff4c,#09ff4c,#10ff4c,#17ff4c,#1fff4c,#27ff4c,#30ff4c,#39ff4c,#43ff4c,#4dff4c,#57ff4c,#62ff4c,#6dff4c,#79ff4c,#85ff4c,#92ff4c,#9fff4c,#acff4c,#baff4c,#c9ff4c,#d8ff4c,#e8ff4c,#f8ff4c,#fff64a,#ffe745,#ffd941,#ffcc3d,#ffc03a,#ffb536,#ffab33,#ffa231,#ff992e,#ff912c,#ff8a29,#ff8327,#ff7c25,#ff7624,#ff7022,#ff6b20,#ff651f,#ff601d,#ff5c1c,#ff571b,#ff5319,#ff4f18,#ff4c17,#ff4816,#ff4515,#ff4114,#ff3e13,#ff3b12,#ff3911,#ff3611,#ff3310,#ff310f,#ff2e0e,#ff2c0e,#ff2a0d,#ff280c,#ff260c,#ff240b,#ff220b,#ff200a,#ff1f0a,#ff1d09,#ff1c09,#ff1a08,#ff1908,#ff1707,#ff1607,#ff1407,#ff1306,#ff1206,#ff1105,#ff1005,#ff0f05,#ff0e05,#ff0d04,#ff0c04,#ff0b04,#ff0a03,#ff0903,#ff0803,#ff0703,#ff0602,#ff0602,#ff0502,#ff0402,#ff0401,#ff0301,#ff0201,#ff0201,#ff0101,#ff0101,#f00,#f00,#f00,#f00,#f00,#f00)"></i><i style="left:0px;top:72px;width:644.2px;height:2.3px;background:linear-gradient(90deg,#00ff4e,#00ff4e,#00ff4e,#00ff4e,#00ff4e,#00ff4e,#00ff4e,#00ff4e,#00ff4f,#00ff4f,#00ff4f,#00ff4f,#00ff4f,#00ff4f,#00ff4f,#00ff4f,#00ff4f,#00ff4f,#00ff4f,#00ff4f,#00ff4f,#00ff4f,#00ff4f,#00ff4f,#00ff4f,#00ff4f,#00ff50,#03ff50,#09ff50,#10ff50,#17ff50,#1fff50,#28ff50,#31ff50,#3aff50,#44ff50,#4eff50,#59ff50,#64ff50,#6fff51,#7bff51,#87ff51,#94ff51,#a1ff51,#afff51,#bdff51,#ccff51,#dcff51,#ecff51,#fcff52,#fff14d,#ffe249,#ffd544,#ffc840,#ffbd3d,#ffb239,#ffa836,#ff9f33,#ff9631,#ff8e2e,#ff872c,#ff802a,#ff7928,#ff7326,#ff6e24,#ff6822,#ff6321,#ff5e1f,#ff5a1e,#ff551c,#ff511b,#ff4d1a,#ff4a19,#ff4618,#ff4317,#ff4016,#ff3d15,#ff3a14,#ff3713,#ff3412,#ff3211,#ff2f10,#ff2d10,#ff2b0f,#ff290e,#ff270e,#ff250d,#ff230c,#ff210c,#ff1f0b,#ff1e0b,#ff1c0a,#ff1a0a,#ff1909,#ff1709,#ff1608,#ff1508,#ff1308,#ff1207,#ff1107,#ff1006,#ff0f06,#ff0e06,#ff0d05,#ff0c05,#ff0b05,#ff0a04,#ff0904,#ff0804,#ff0704,#ff0603,#ff0603,#ff0503,#ff0403,#ff0402,#ff0302,#ff0202,#ff0202,#ff0101,#ff0101,#ff0001,#ff0001,#ff0001,#ff0001,#f00,#f00,#f00,#f00,#f00,#f00)"></i><i style="left:0.2px;top:74px;width:661px;height:2.3px;background:linear-gradient(90deg,#00ff51,#00ff51,#00ff51,#00ff52,#00ff52,#00ff52,#00ff52,#00ff52,#00ff52,#00ff52,#00ff52,#00ff52,#00ff52,#00ff52,#00ff52,#00ff52,#00ff53,#00ff53,#00ff53,#00ff53,#00ff53,#00ff53,#00ff53,#00ff53,#00ff53,#00ff53,#00ff54,#02ff54,#08ff54,#0fff54,#16ff54,#1eff54,#26ff54,#2fff54,#38ff55,#42ff55,#4cff55,#57ff55,#62ff55,#6dff55,#79ff55,#85ff56,#92ff56,#9fff56,#adff56,#bbff56,#caff56,#d9ff57,#e9ff57,#faff57,#fff453,#ffe54e,#ffd74a,#ffca45,#ffbe42,#ffb33e,#ffa93b,#ffa038,#ff9835,#ff8f32,#ff8830,#ff812d,#ff7a2b,#ff7429,#ff6e27,#ff6925,#ff6424,#ff5f22,#ff5a21,#ff561f,#ff521e,#ff4e1c,#ff4a1b,#ff471a,#ff4319,#ff4018,#ff3d17,#ff3a16,#ff3715,#ff3514,#ff3213,#ff3012,#ff2d12,#ff2b11,#ff2910,#ff270f,#ff250f,#ff230e,#ff210d,#ff1f0d,#ff1e0c,#ff1c0c,#ff1b0b,#ff190b,#ff180a,#ff160a,#ff1509,#ff1409,#ff1208,#ff1108,#ff1008,#ff0f07,#ff0e07,#ff0d07,#ff0c06,#ff0b06,#ff0a05,#ff0905,#ff0805,#ff0705,#ff0604,#ff0604,#ff0504,#ff0403,#ff0403,#ff0303,#ff0203,#ff0203,#ff0102,#ff0102,#ff0002,#ff0002,#ff0002,#ff0001,#ff0001,#ff0001,#ff0001,#ff0001,#ff0001,#f00,#f00,#f00,#f00,#f00)"></i><i style="left:0.2px;top:76px;width:678px;height:2.3px;background:linear-gradient(90deg,#0f5,#0f5,#0f5,#0f5,#0f5,#0f5,#0f5,#0f5,#0f5,#0f5,#00ff56,#00ff56,#00ff56,#00ff56,#00ff56,#00ff56,#00ff56,#00ff56,#00ff57,#00ff57,#00ff57,#00ff57,#00ff57,#00ff57,#00ff57,#00ff58,#00ff58,#02ff58,#08ff58,#0fff58,#16ff58,#1eff59,#27ff59,#30ff59,#39ff59,#43ff59,#4dff59,#58ff5a,#63ff5a,#6eff5a,#7aff5a,#87ff5a,#94ff5b,#a1ff5b,#afff5b,#bdff5b,#ccff5c,#dcff5c,#ecff5c,#fdff5c,#fff158,#ffe252,#ffd44e,#ffc749,#ffbc45,#ffb141,#ffa73e,#ff9e3b,#ff9538,#ff8d35,#ff8632,#ff7f30,#ff782e,#ff722c,#ff6d2a,#ff6728,#ff6226,#ff5d24,#ff5923,#ff5421,#ff5020,#ff4c1e,#ff491d,#ff451c,#ff421b,#ff3f1a,#ff3c18,#ff3917,#ff3616,#ff3316,#ff3115,#ff2f14,#ff2c13,#ff2a12,#ff2811,#ff2611,#ff2410,#ff220f,#ff200f,#ff1f0e,#ff1d0e,#ff1b0d,#ff1a0c,#ff180c,#ff170b,#ff150b,#ff140a,#ff130a,#ff1209,#ff1009,#ff0f09,#ff0e08,#ff0d08,#ff0c07,#ff0b07,#ff0a07,#ff0906,#ff0806,#ff0806,#ff0705,#ff0605,#ff0505,#ff0405,#ff0404,#ff0304,#ff0204,#ff0203,#ff0103,#ff0103,#ff0003,#ff0003,#ff0002,#ff0002,#ff0002,#ff0002,#ff0002,#ff0001,#ff0001,#ff0001,#ff0001,#ff0001,#ff0001,#f00,#f00,#f00,#f00,#f00)"></i><i style="left:0.2px;top:78px;width:696px;height:2.3px;background:linear-gradient(90deg,#00ff58,#00ff58,#00ff58,#00ff58,#00ff58,#00ff58,#00ff59,#00ff59,#00ff59,#00ff59,#00ff59,#00ff59,#00ff59,#00ff5a,#00ff5a,#00ff5a,#00ff5a,#00ff5a,#00ff5a,#00ff5b,#00ff5b,#00ff5b,#00ff5b,#00ff5b,#00ff5b,#00ff5c,#00ff5c,#01ff5c,#07ff5c,#0eff5c,#15ff5d,#1dff5d,#25ff5d,#2eff5d,#37ff5e,#41ff5e,#4bff5e,#56ff5e,#61ff5f,#6dff5f,#79ff5f,#85ff5f,#92ff60,#9fff60,#adff60,#bcff61,#cbff61,#daff61,#eaff62,#fbff62,#fff25d,#ffe358,#ffd553,#ffc84e,#ffbd4a,#ffb246,#ffa842,#ff9e3f,#ff963c,#ff8e39,#ff8636,#ff7f34,#ff7931,#ff732f,#ff6d2d,#ff672b,#ff6229,#ff5d27,#ff5925,#ff5524,#ff5022,#ff4d21,#ff4920,#ff451e,#ff421d,#ff3f1c,#ff3c1b,#ff391a,#ff3619,#ff3318,#ff3117,#ff2f16,#ff2c15,#ff2a14,#ff2813,#ff2612,#ff2412,#f21,#ff2010,#ff1e10,#ff1d0f,#ff1b0e,#ff1a0e,#ff180d,#ff170d,#ff150c,#ff140c,#ff130b,#ff120b,#ff100a,#ff0f0a,#ff0e09,#ff0d09,#ff0c09,#ff0b08,#ff0a08,#ff0907,#ff0807,#ff0707,#ff0706,#ff0606,#ff0506,#ff0406,#ff0405,#ff0305,#ff0205,#ff0204,#ff0104,#ff0104,#ff0004,#ff0003,#ff0003,#ff0003,#ff0003,#ff0002,#ff0002,#ff0002,#ff0002,#ff0002,#ff0002,#ff0001,#ff0001,#ff0001,#ff0001,#ff0001,#ff0001,#f00,#f00,#f00,#f00,#f00)"></i><i style="left:0.2px;top:80px;width:713px;height:2.3px;background:linear-gradient(90deg,#00ff5b,#00ff5b,#00ff5b,#00ff5c,#00ff5c,#00ff5c,#00ff5c,#00ff5c,#00ff5c,#00ff5d,#00ff5d,#00ff5d,#00ff5d,#00ff5d,#00ff5d,#00ff5e,#00ff5e,#00ff5e,#00ff5e,#00ff5e,#00ff5f,#00ff5f,#00ff5f,#00ff5f,#00ff60,#00ff60,#00ff60,#01ff60,#07ff61,#0eff61,#15ff61,#1dff61,#26ff62,#2fff62,#38ff62,#42ff63,#4cff63,#57ff63,#62ff64,#6eff64,#7aff64,#86ff65,#93ff65,#a1ff65,#afff66,#beff66,#cdff67,#ddff67,#edff67,#feff68,#ffef62,#ffe05c,#ffd257,#ffc652,#ffba4d,#ffaf49,#ffa546,#ff9c42,#ff943f,#ff8c3c,#ff8439,#ff7d36,#ff7734,#ff7131,#ff6b2f,#ff662d,#ff612b,#ff5c29,#ff5728,#ff5326,#ff4f24,#ff4b23,#ff4721,#ff4420,#ff411f,#ff3e1e,#ff3b1c,#ff381b,#ff351a,#ff3219,#ff3018,#ff2d17,#ff2b16,#ff2915,#ff2715,#ff2514,#ff2313,#ff2112,#ff1f12,#ff1e11,#ff1c10,#ff1a10,#ff190f,#ff170e,#ff160e,#ff150d,#ff130d,#ff120c,#ff110c,#ff100b,#ff0e0b,#ff0d0a,#ff0c0a,#ff0b0a,#ff0a09,#ff0909,#ff0908,#ff0808,#ff0708,#ff0607,#ff0507,#ff0507,#ff0406,#ff0306,#ff0306,#ff0205,#ff0105,#ff0105,#ff0005,#ff0004,#ff0004,#ff0004,#ff0004,#ff0003,#ff0003,#ff0003,#ff0003,#ff0003,#ff0002,#ff0002,#ff0002,#ff0002,#ff0002,#ff0001,#ff0001,#ff0001,#ff0001,#ff0001,#ff0001,#ff0001,#f00,#f00,#f00,#f00)"></i><i style="left:1.2px;top:82px;width:730px;height:2.3px;background:linear-gradient(90deg,#00ff5e,#00ff5f,#00ff5f,#00ff5f,#00ff5f,#00ff5f,#00ff60,#00ff60,#00ff60,#00ff60,#00ff60,#00ff61,#00ff61,#00ff61,#00ff61,#00ff62,#00ff62,#00ff62,#00ff62,#00ff63,#00ff63,#00ff63,#00ff63,#00ff64,#00ff64,#00ff64,#00ff65,#02ff65,#08ff65,#0fff65,#17ff66,#1fff66,#28ff66,#31ff67,#3aff67,#44ff68,#4fff68,#5aff68,#65ff69,#71ff69,#7eff6a,#8aff6a,#98ff6a,#a6ff6b,#b4ff6b,#c3ff6c,#d3ff6c,#e3ff6d,#f3ff6d,#fff96b,#ffe965,#ffdb5f,#ffcd5a,#ffc155,#ffb550,#ffab4c,#ffa148,#ff9845,#ff9041,#ff883e,#ff813b,#ff7a38,#ff7436,#ff6e33,#ff6831,#ff632f,#ff5e2d,#ff592b,#ff5529,#ff5128,#ff4d26,#ff4925,#ff4523,#ff4222,#ff3f20,#ff3c1f,#ff391e,#ff361d,#ff331c,#ff311b,#ff2e1a,#ff2c19,#ff2a18,#ff2817,#ff2516,#ff2315,#ff2214,#ff2014,#ff1e13,#ff1c12,#ff1b11,#ff1911,#ff1810,#ff1610,#ff150f,#ff140e,#ff120e,#ff110d,#ff100d,#ff0f0c,#ff0e0c,#ff0d0b,#ff0c0b,#ff0b0a,#ff0a0a,#ff090a,#ff0809,#ff0709,#ff0608,#ff0508,#ff0508,#ff0407,#ff0307,#ff0307,#ff0206,#ff0106,#ff0106,#ff0006,#ff0005,#ff0005,#ff0005,#ff0004,#ff0004,#ff0004,#ff0004,#ff0004,#ff0003,#ff0003,#ff0003,#ff0003,#ff0002,#ff0002,#ff0002,#ff0002,#ff0002,#ff0002,#ff0001,#ff0001,#ff0001,#ff0001,#ff0001,#ff0001,#ff0001,#f00,#f00,#f00,#f00)"></i><i style="left:1.2px;top:84px;width:732.1px;height:2.3px;background:linear-gradient(90deg,#00ff62,#00ff62,#00ff62,#00ff62,#00ff63,#00ff63,#00ff63,#00ff63,#00ff64,#00ff64,#00ff64,#00ff64,#00ff65,#00ff65,#00ff65,#00ff65,#0f6,#0f6,#0f6,#00ff67,#00ff67,#00ff67,#00ff68,#00ff68,#00ff68,#00ff69,#00ff69,#01ff69,#07ff6a,#0eff6a,#15ff6a,#1dff6b,#26ff6b,#2fff6c,#38ff6c,#42ff6c,#4dff6d,#58ff6d,#63ff6e,#6fff6e,#7bff6f,#88ff6f,#95ff70,#a3ff70,#b2ff71,#c0ff71,#d0ff72,#e0ff72,#f1ff73,#fffc72,#ffec6b,#ffdd65,#ffcf60,#ffc25a,#ffb755,#ffac51,#ffa34d,#ff9a49,#ff9146,#ff8942,#ff823f,#ff7b3c,#ff753a,#ff6f37,#ff6935,#ff6432,#ff5f30,#ff5a2e,#ff552c,#ff512b,#ff4d29,#ff4927,#ff4626,#ff4224,#ff3f23,#ff3c22,#ff3920,#ff361f,#ff341e,#ff311d,#ff2e1c,#ff2c1b,#ff2a1a,#ff2819,#ff2618,#ff2417,#ff2216,#ff2015,#ff1e15,#ff1c14,#ff1b13,#ff1912,#ff1812,#ff1611,#ff1510,#ff1410,#ff120f,#ff110f,#ff100e,#ff0f0e,#ff0e0d,#ff0d0d,#ff0c0c,#ff0b0c,#ff0a0b,#ff090b,#ff080a,#ff070a,#ff060a,#ff0509,#ff0509,#ff0409,#ff0308,#ff0308,#ff0207,#ff0107,#ff0107,#ff0007,#ff0006,#ff0006,#ff0006,#ff0005,#ff0005,#ff0005,#ff0005,#ff0004,#ff0004,#ff0004,#ff0004,#ff0003,#ff0003,#ff0003,#ff0003,#ff0003,#ff0002,#ff0002,#ff0002,#ff0002,#ff0002,#ff0002,#ff0001,#ff0001,#ff0001,#ff0001,#ff0001,#ff0001,#ff0001,#f00)"></i><i style="left:2.2px;top:86px;width:731.1px;height:2.3px;background:linear-gradient(90deg,#00ff65,#00ff65,#0f6,#0f6,#0f6,#0f6,#00ff67,#00ff67,#00ff67,#00ff68,#00ff68,#00ff68,#00ff68,#00ff69,#00ff69,#00ff69,#00ff6a,#00ff6a,#00ff6a,#00ff6b,#00ff6b,#00ff6b,#00ff6c,#00ff6c,#00ff6d,#00ff6d,#00ff6d,#01ff6e,#07ff6e,#0eff6f,#16ff6f,#1eff70,#27ff70,#30ff70,#39ff71,#44ff71,#4eff72,#59ff72,#65ff73,#71ff74,#7dff74,#8aff75,#97ff75,#a5ff76,#b4ff76,#c3ff77,#d2ff78,#e3ff78,#f4ff79,#fff977,#ffe970,#ffda6a,#ffcd64,#ffc05e,#ffb559,#fa5,#ffa150,#ff984c,#ff8f49,#ff8845,#ff8042,#ff7a3f,#ff733c,#ff6d3a,#ff6837,#ff6235,#ff5d33,#ff5931,#ff542f,#ff502d,#ff4c2b,#ff4829,#ff4528,#ff4126,#ff3e25,#ff3b23,#ff3822,#ff3521,#ff3320,#ff301f,#ff2e1d,#ff2b1c,#ff291b,#ff271a,#ff2519,#ff2319,#ff2118,#ff1f17,#ff1e16,#ff1c15,#ff1a15,#ff1914,#ff1713,#ff1612,#ff1412,#ff1311,#ff1211,#ff1110,#ff0f0f,#ff0e0f,#ff0d0e,#ff0c0e,#ff0b0d,#ff0a0d,#ff090c,#ff080c,#ff070b,#ff070b,#ff060b,#ff050a,#ff040a,#ff0409,#ff0309,#ff0209,#ff0208,#ff0108,#ff0108,#ff0007,#ff0007,#ff0007,#ff0007,#ff0006,#ff0006,#ff0006,#ff0005,#ff0005,#ff0005,#ff0005,#ff0004,#ff0004,#ff0004,#ff0004,#ff0004,#ff0003,#ff0003,#ff0003,#ff0003,#ff0003,#ff0002,#ff0002,#ff0002,#ff0002,#ff0002,#ff0002,#ff0001,#ff0001,#ff0001,#ff0001)"></i><i style="left:2.2px;top:88px;width:731.1px;height:2.3px;background:linear-gradient(90deg,#00ff69,#00ff69,#00ff69,#00ff6a,#00ff6a,#00ff6a,#00ff6a,#00ff6b,#00ff6b,#00ff6b,#00ff6c,#00ff6c,#00ff6c,#00ff6d,#00ff6d,#00ff6d,#00ff6e,#00ff6e,#00ff6f,#00ff6f,#00ff6f,#00ff70,#00ff70,#00ff71,#00ff71,#00ff71,#00ff72,#01ff72,#07ff73,#0eff73,#15ff74,#1dff74,#26ff75,#2fff75,#39ff76,#43ff76,#4eff77,#59ff78,#64ff78,#70ff79,#7dff7a,#8aff7a,#97ff7b,#a5ff7c,#b4ff7c,#c3ff7d,#d3ff7e,#e3ff7e,#f4ff7f,#fff87d,#ffe875,#ffd96f,#ffcc68,#ffbf63,#ffb45e,#ffaa59,#ffa054,#ff9750,#ff8f4d,#ff8749,#ff8046,#ff7943,#ff7340,#ff6d3d,#ff673a,#ff6238,#ff5d36,#ff5833,#ff5431,#ff502f,#ff4c2e,#ff482c,#ff442a,#ff4129,#ff3e27,#ff3b26,#ff3824,#ff3523,#ff3222,#ff3020,#ff2d1f,#ff2b1e,#ff291d,#ff261c,#ff241b,#ff221a,#ff2119,#ff1f18,#ff1d18,#ff1b17,#ff1a16,#ff1815,#ff1715,#ff1514,#ff1413,#ff1312,#ff1112,#ff1011,#ff0f11,#ff0e10,#ff0d10,#ff0c0f,#ff0b0e,#ff0a0e,#ff090d,#ff080d,#ff070d,#ff060c,#ff050c,#ff050b,#ff040b,#ff030a,#ff030a,#ff020a,#ff0109,#ff0109,#ff0009,#ff0008,#ff0008,#ff0008,#ff0007,#ff0007,#ff0007,#ff0006,#ff0006,#ff0006,#ff0006,#ff0005,#ff0005,#ff0005,#ff0005,#ff0004,#ff0004,#ff0004,#ff0004,#ff0004,#ff0003,#ff0003,#ff0003,#ff0003,#ff0003,#ff0002,#ff0002,#ff0002,#ff0002,#ff0002,#ff0002,#ff0001)"></i><i style="left:2.2px;top:90px;width:731.1px;height:2.3px;background:linear-gradient(90deg,#00ff6c,#00ff6c,#00ff6d,#00ff6d,#00ff6d,#00ff6e,#00ff6e,#00ff6e,#00ff6f,#00ff6f,#00ff70,#00ff70,#00ff70,#00ff71,#00ff71,#00ff71,#00ff72,#00ff72,#00ff73,#00ff73,#00ff74,#00ff74,#00ff75,#00ff75,#00ff75,#00ff76,#0f7,#0f7,#06ff78,#0dff78,#15ff79,#1dff79,#26ff7a,#2fff7a,#38ff7b,#43ff7c,#4dff7c,#58ff7d,#64ff7e,#70ff7e,#7dff7f,#8aff80,#97ff81,#a5ff81,#b4ff82,#c3ff83,#d3ff84,#e4ff85,#f5ff86,#fff883,#ffe77b,#ffd974,#ffcb6d,#ffbf68,#ffb362,#ffa95d,#ff9f59,#ff9654,#ff8e50,#ff864d,#ff7f49,#ff7846,#ff7243,#ff6c40,#ff663d,#ff613b,#ff5c38,#ff5736,#ff5334,#ff4f32,#ff4b30,#ff472e,#ff442c,#ff402b,#ff3d29,#ff3a28,#ff3726,#ff3425,#ff3224,#ff2f22,#ff2d21,#ff2a20,#ff281f,#ff261e,#ff241d,#ff221c,#ff201b,#ff1e1a,#ff1d19,#ff1b18,#ff1917,#ff1817,#ff1616,#ff1515,#ff1415,#ff1214,#ff1113,#ff1013,#ff0f12,#ff0e11,#ff0c11,#ff0b10,#ff0a10,#ff090f,#ff090f,#ff080e,#ff070e,#ff060d,#ff050d,#ff040c,#ff040c,#ff030b,#ff020b,#ff020b,#ff010a,#ff010a,#ff000a,#ff0009,#ff0009,#ff0009,#ff0008,#ff0008,#ff0008,#ff0007,#ff0007,#ff0007,#ff0006,#ff0006,#ff0006,#ff0006,#ff0005,#ff0005,#ff0005,#ff0005,#ff0004,#ff0004,#ff0004,#ff0004,#ff0004,#ff0003,#ff0003,#ff0003,#ff0003,#ff0003,#ff0003,#ff0002,#ff0002,#ff0002)"></i><i style="left:3.2px;top:92px;width:730.1px;height:2.3px;background:linear-gradient(90deg,#00ff70,#00ff70,#00ff70,#00ff71,#00ff71,#00ff72,#00ff72,#00ff72,#00ff73,#00ff73,#00ff74,#00ff74,#00ff74,#00ff75,#00ff75,#00ff76,#00ff76,#0f7,#0f7,#00ff78,#00ff78,#00ff79,#00ff79,#00ff7a,#00ff7a,#00ff7b,#00ff7b,#01ff7c,#07ff7c,#0eff7d,#15ff7e,#1eff7e,#26ff7f,#30ff80,#3aff80,#44ff81,#4fff82,#5aff82,#65ff83,#72ff84,#7eff85,#8cff86,#99ff86,#a8ff87,#b6ff88,#c6ff89,#d6ff8a,#e6ff8b,#f8ff8c,#fff587,#ffe57f,#ffd678,#ffc972,#ffbc6c,#ffb166,#ffa761,#ff9d5c,#ff9458,#ff8c54,#ff8450,#ff7d4c,#ff7749,#ff7046,#ff6a43,#ff6540,#ff603d,#ff5b3b,#ff5639,#ff5236,#ff4e34,#ff4a32,#ff4630,#ff432f,#ff3f2d,#ff3c2b,#ff392a,#ff3628,#ff3327,#ff3125,#ff2e24,#ff2c23,#ff2a22,#ff2721,#ff2520,#ff231e,#ff211d,#ff1f1c,#ff1e1c,#ff1c1b,#ff1a1a,#ff1919,#ff1718,#ff1617,#ff1417,#ff1316,#ff1215,#ff1114,#ff0f14,#ff0e13,#ff0d13,#ff0c12,#ff0b11,#ff0a11,#ff0910,#ff0810,#ff070f,#ff060f,#ff060e,#ff050e,#ff040d,#ff030d,#ff030c,#ff020c,#ff010c,#ff010b,#ff000b,#ff000a,#ff000a,#ff000a,#ff0009,#ff0009,#ff0009,#ff0008,#ff0008,#ff0008,#ff0008,#ff0007,#ff0007,#ff0007,#ff0006,#ff0006,#ff0006,#ff0006,#ff0005,#ff0005,#ff0005,#ff0005,#ff0005,#ff0004,#ff0004,#ff0004,#ff0004,#ff0003,#ff0003,#ff0003,#ff0003,#ff0003,#ff0003)"></i><i style="left:3.2px;top:94px;width:730.1px;height:2.3px;background:linear-gradient(90deg,#00ff73,#00ff74,#00ff74,#00ff75,#00ff75,#00ff75,#00ff76,#00ff76,#0f7,#0f7,#0f7,#00ff78,#00ff78,#00ff79,#00ff79,#00ff7a,#00ff7a,#00ff7b,#00ff7b,#00ff7c,#00ff7c,#00ff7d,#00ff7e,#00ff7e,#00ff7f,#00ff7f,#00ff80,#00ff81,#06ff81,#0dff82,#15ff83,#1dff83,#26ff84,#2fff85,#39ff86,#43ff86,#4eff87,#59ff88,#65ff89,#71ff8a,#7eff8b,#8bff8b,#99ff8c,#a8ff8d,#b7ff8e,#c6ff8f,#d6ff90,#e7ff91,#f8ff93,#fff48d,#ffe485,#ffd57e,#ffc877,#ffbc70,#ffb06b,#ffa665,#ff9c60,#ff945c,#ff8b57,#ff8453,#ff7d50,#ff764c,#ff7049,#ff6a46,#ff6443,#ff5f40,#ff5a3e,#ff563b,#ff5139,#ff4d37,#ff4935,#ff4533,#ff4231,#ff3f2f,#ff3b2e,#ff382c,#ff362a,#ff3329,#ff3027,#ff2e26,#ff2b25,#ff2924,#ff2722,#ff2521,#ff2320,#ff211f,#ff1f1e,#ff1d1d,#ff1c1c,#ff1a1b,#ff181a,#ff171a,#ff1519,#ff1418,#ff1317,#ff1117,#ff1016,#ff0f15,#ff0e14,#ff0d14,#ff0c13,#ff0b13,#ff0a12,#ff0911,#ff0811,#ff0710,#ff0610,#ff050f,#ff050f,#ff040e,#ff030e,#ff020e,#ff020d,#ff010d,#ff010c,#ff000c,#ff000b,#ff000b,#ff000b,#ff000a,#ff000a,#ff000a,#ff0009,#ff0009,#ff0009,#ff0008,#ff0008,#ff0008,#ff0007,#ff0007,#ff0007,#ff0007,#ff0006,#ff0006,#ff0006,#ff0006,#ff0005,#ff0005,#ff0005,#ff0005,#ff0005,#ff0004,#ff0004,#ff0004,#ff0004,#ff0004,#ff0003,#ff0003)"></i><i style="left:4.2px;top:96px;width:729.1px;height:2.3px;background:linear-gradient(90deg,#0f7,#00ff78,#00ff78,#00ff78,#00ff79,#00ff79,#00ff7a,#00ff7a,#00ff7b,#00ff7b,#00ff7c,#00ff7c,#00ff7d,#00ff7d,#00ff7e,#00ff7e,#00ff7f,#00ff7f,#00ff80,#00ff81,#00ff81,#00ff82,#00ff82,#00ff83,#00ff84,#00ff84,#00ff85,#02ff86,#08ff87,#0fff87,#17ff88,#20ff89,#29ff8a,#32ff8a,#3cff8b,#47ff8c,#52ff8d,#5eff8e,#6aff8f,#76ff90,#83ff91,#91ff92,#9fff93,#aeff94,#bdff95,#cdff96,#deff97,#efff99,#fffd98,#ffec8f,#ffdc87,#ffce7f,#ffc179,#ffb572,#ffaa6c,#ffa067,#ff9762,#ff8f5d,#ff8759,#ff7f55,#ff7851,#ff724e,#ff6c4b,#ff6647,#ff6145,#ff5c42,#ff573f,#ff523d,#ff4e3a,#ff4a38,#ff4636,#ff4334,#ff3f32,#ff3c30,#ff392f,#ff362d,#ff332c,#ff312a,#ff2e29,#ff2c27,#ff2926,#ff2725,#ff2524,#ff2322,#ff2121,#ff1f20,#ff1d1f,#ff1c1e,#ff1a1d,#ff181c,#ff171b,#ff151b,#ff141a,#ff1319,#ff1118,#ff1017,#ff0f17,#ff0e16,#ff0d15,#ff0c15,#ff0b14,#ff0a13,#ff0913,#ff0812,#ff0712,#ff0611,#ff0511,#ff0410,#ff0410,#ff030f,#ff020f,#ff020e,#ff010e,#ff010d,#ff000d,#ff000c,#ff000c,#ff000c,#ff000b,#ff000b,#ff000b,#ff000a,#ff000a,#ff000a,#ff0009,#ff0009,#ff0009,#ff0008,#ff0008,#ff0008,#ff0007,#ff0007,#ff0007,#ff0007,#ff0006,#ff0006,#ff0006,#ff0006,#ff0005,#ff0005,#ff0005,#ff0005,#ff0005,#ff0004,#ff0004,#ff0004,#ff0004)"></i><i style="left:4.2px;top:98px;width:729.1px;height:2.3px;background:linear-gradient(90deg,#00ff7b,#00ff7b,#00ff7c,#00ff7c,#00ff7d,#00ff7d,#00ff7e,#00ff7e,#00ff7f,#00ff7f,#00ff80,#00ff80,#00ff81,#00ff81,#00ff82,#00ff83,#00ff83,#00ff84,#00ff84,#00ff85,#00ff86,#00ff86,#00ff87,#0f8,#00ff89,#00ff89,#00ff8a,#01ff8b,#07ff8c,#0eff8c,#16ff8d,#1fff8e,#28ff8f,#32ff90,#3cff91,#47ff92,#52ff93,#5dff94,#69ff95,#76ff96,#83ff97,#91ff98,#9fff99,#aeff9a,#beff9b,#ceff9d,#dfff9e,#f0ff9f,#fffc9f,#ffeb95,#ffdb8d,#ffcd85,#ffc07e,#ffb477,#ffaa71,#ffa06b,#ff9666,#ff8e61,#ff865d,#ff7e59,#f75,#ff7151,#ff6b4e,#ff654b,#ff6048,#ff5b45,#ff5642,#ff523f,#ff4d3d,#ff493b,#ff4639,#ff4237,#ff3f35,#ff3b33,#ff3831,#ff352f,#ff332e,#ff302c,#ff2d2b,#ff2b29,#ff2928,#ff2727,#ff2425,#ff2224,#ff2023,#ff1f22,#ff1d21,#ff1b20,#ff191f,#ff181e,#ff161d,#ff151c,#ff141b,#ff121a,#ff111a,#ff1019,#ff0e18,#ff0d17,#ff0c17,#ff0b16,#ff0a15,#ff0915,#ff0814,#ff0713,#ff0613,#ff0612,#ff0512,#ff0411,#ff0311,#ff0310,#ff0210,#ff010f,#ff010f,#ff000e,#ff000e,#ff000d,#ff000d,#ff000d,#ff000c,#ff000c,#ff000b,#ff000b,#ff000b,#ff000a,#ff000a,#ff000a,#ff0009,#ff0009,#ff0009,#ff0009,#ff0008,#ff0008,#ff0008,#ff0007,#ff0007,#ff0007,#ff0007,#ff0006,#ff0006,#ff0006,#ff0006,#ff0005,#ff0005,#ff0005,#ff0005,#ff0005,#ff0004)"></i><i style="left:5.2px;top:100px;width:728.1px;height:2.3px;background:linear-gradient(90deg,#00ff7f,#00ff7f,#00ff80,#00ff80,#00ff81,#00ff81,#00ff82,#00ff82,#00ff83,#00ff83,#00ff84,#00ff85,#00ff85,#00ff86,#00ff86,#00ff87,#0f8,#0f8,#00ff89,#00ff8a,#00ff8a,#00ff8b,#00ff8c,#00ff8d,#00ff8d,#00ff8e,#00ff8f,#01ff90,#08ff91,#0fff92,#17ff93,#20ff94,#29ff94,#33ff95,#3dff96,#48ff97,#53ff99,#5fff9a,#6bff9b,#78ff9c,#85ff9d,#93ff9e,#a1ffa0,#b0ffa1,#c0ffa2,#d0ffa3,#e1ffa5,#f3ffa6,#fff9a4,#ffe89a,#ffd991,#ffcb89,#ffbe82,#ffb27b,#ffa775,#ff9e6f,#ff946a,#ff8c65,#ff8460,#ff7d5c,#ff7658,#ff6f54,#ff6951,#ff644d,#ff5f4a,#ff5a47,#ff5545,#ff5142,#ff4c40,#ff483d,#ff453b,#ff4139,#ff3e37,#ff3b35,#ff3833,#ff3531,#ff3230,#ff2f2e,#ff2d2d,#ff2a2b,#ff282a,#ff2628,#ff2427,#ff2226,#ff2025,#ff1e24,#ff1c22,#ff1a21,#ff1920,#ff171f,#ff161e,#ff141d,#ff131d,#ff121c,#ff101b,#ff0f1a,#ff0e19,#ff0d19,#ff0c18,#ff0b17,#ff0a17,#ff0916,#ff0815,#ff0715,#ff0614,#ff0513,#ff0413,#ff0412,#ff0312,#ff0211,#ff0211,#ff0110,#ff0110,#ff000f,#ff000f,#ff000e,#ff000e,#ff000e,#ff000d,#ff000d,#ff000c,#ff000c,#ff000c,#ff000b,#ff000b,#ff000b,#ff000a,#ff000a,#ff000a,#ff0009,#ff0009,#ff0009,#ff0008,#ff0008,#ff0008,#ff0008,#ff0007,#ff0007,#ff0007,#ff0007,#ff0006,#ff0006,#ff0006,#ff0006,#ff0005,#ff0005,#ff0005)"></i><i style="left:5.2px;top:102px;width:728.1px;height:2.3px;background:linear-gradient(90deg,#00ff82,#00ff83,#00ff83,#00ff84,#00ff85,#00ff85,#00ff86,#00ff86,#00ff87,#0f8,#0f8,#00ff89,#00ff89,#00ff8a,#00ff8b,#00ff8b,#00ff8c,#00ff8d,#00ff8e,#00ff8e,#00ff8f,#00ff90,#00ff91,#00ff92,#00ff92,#00ff93,#00ff94,#01ff95,#07ff96,#0eff97,#16ff98,#1fff99,#28ff9a,#32ff9b,#3cff9c,#47ff9d,#53ff9e,#5effa0,#6bffa1,#78ffa2,#85ffa3,#93ffa5,#a1ffa6,#b1ffa7,#c0ffa9,#d1ffaa,#e2ffac,#f4ffad,#fff8aa,#ffe7a0,#ffd897,#ffca8f,#ffbd87,#ffb180,#ffa779,#ff9d73,#ff946e,#ff8b69,#ff8364,#ff7c60,#ff755c,#ff6f58,#ff6954,#ff6351,#ff5e4d,#ff594a,#ff5448,#ff5045,#ff4c42,#ff4840,#ff443e,#ff403b,#ff3d39,#ff3a37,#ff3735,#ff3434,#ff3132,#ff2f30,#ff2c2f,#ff2a2d,#ff272c,#ff252a,#ff2329,#ff2128,#ff1f26,#ff1d25,#ff1c24,#ff1a23,#ff1822,#ff1721,#ff1520,#ff141f,#ff131e,#ff111d,#ff101c,#ff0f1c,#ff0e1b,#ff0c1a,#ff0b19,#ff0a19,#ff0918,#ff0817,#ff0716,#ff0716,#ff0615,#ff0515,#ff0414,#ff0313,#ff0313,#ff0212,#ff0112,#ff0111,#f01,#ff0010,#ff0010,#ff000f,#ff000f,#ff000f,#ff000e,#ff000e,#ff000d,#ff000d,#ff000d,#ff000c,#ff000c,#ff000b,#ff000b,#ff000b,#ff000a,#ff000a,#ff000a,#ff000a,#ff0009,#ff0009,#ff0009,#ff0008,#ff0008,#ff0008,#ff0008,#ff0007,#ff0007,#ff0007,#ff0007,#ff0006,#ff0006,#ff0006,#ff0006)"></i><i style="left:6.2px;top:104px;width:727.1px;height:2.3px;background:linear-gradient(90deg,#00ff86,#00ff87,#00ff87,#0f8,#00ff89,#00ff89,#00ff8a,#00ff8b,#00ff8b,#00ff8c,#00ff8d,#00ff8d,#00ff8e,#00ff8f,#00ff8f,#00ff90,#00ff91,#00ff92,#00ff92,#00ff93,#00ff94,#00ff95,#00ff96,#00ff97,#00ff98,#0f9,#00ff9a,#01ff9a,#08ff9b,#0fff9d,#17ff9e,#20ff9f,#29ffa0,#33ffa1,#3effa2,#48ffa3,#54ffa5,#60ffa6,#6cffa7,#79ffa8,#87ffaa,#95ffab,#a4ffad,#b3ffae,#c3ffb0,#d3ffb1,#e5ffb3,#f7ffb5,#fff5af,#ffe4a5,#ffd59c,#ffc793,#ffbb8b,#ffaf84,#ffa57d,#ff9b77,#ff9272,#ff896c,#ff8267,#ff7a63,#ff745f,#ff6d5b,#ff6757,#ff6253,#ff5d50,#ff584d,#ff534a,#ff4f47,#ff4b45,#ff4742,#ff4340,#ff3f3e,#ff3c3b,#ff3939,#ff3637,#ff3336,#ff3034,#ff2e32,#ff2b31,#ff292f,#ff272e,#ff252c,#ff222b,#ff2129,#ff1f28,#ff1d27,#ff1b26,#ff1925,#ff1824,#ff1622,#ff1521,#ff1321,#ff1220,#ff111f,#ff0f1e,#ff0e1d,#ff0d1c,#ff0c1b,#ff0b1b,#ff0a1a,#ff0919,#ff0818,#ff0718,#ff0617,#ff0516,#ff0516,#ff0415,#ff0315,#ff0214,#ff0213,#ff0113,#ff0112,#ff0012,#f01,#f01,#ff0010,#ff0010,#ff0010,#ff000f,#ff000f,#ff000e,#ff000e,#ff000d,#ff000d,#ff000d,#ff000c,#ff000c,#ff000c,#ff000b,#ff000b,#ff000b,#ff000a,#ff000a,#ff000a,#ff0009,#ff0009,#ff0009,#ff0009,#ff0008,#ff0008,#ff0008,#ff0008,#ff0007,#ff0007,#ff0007,#ff0007,#ff0006)"></i><i style="left:6.2px;top:106px;width:727.1px;height:2.3px;background:linear-gradient(90deg,#00ff8a,#00ff8b,#00ff8b,#00ff8c,#00ff8d,#00ff8d,#00ff8e,#00ff8f,#00ff8f,#00ff90,#00ff91,#00ff92,#00ff92,#00ff93,#00ff94,#00ff95,#00ff95,#00ff96,#00ff97,#00ff98,#0f9,#00ff9a,#00ff9b,#00ff9c,#00ff9d,#00ff9e,#00ff9f,#01ffa0,#07ffa1,#0effa2,#17ffa3,#1fffa4,#29ffa5,#33ffa7,#3dffa8,#48ffa9,#53ffab,#5fffac,#6cffad,#79ffaf,#87ffb0,#95ffb2,#a4ffb3,#b3ffb5,#c3ffb7,#d4ffb8,#e5ffba,#f7ffbc,#fff4b6,#ffe3ab,#ffd4a1,#ffc698,#ffba90,#ffae89,#ffa482,#ff9a7c,#ff9176,#ff8970,#ff816b,#ff7a67,#ff7362,#ff6c5e,#ff675a,#ff6157,#ff5c53,#ff5750,#ff524d,#ff4e4a,#ff4a47,#ff4645,#ff4242,#ff3f40,#ff3c3e,#ff383c,#ff353a,#ff3338,#ff3036,#ff2d34,#ff2b33,#ff2831,#ff262f,#ff242e,#ff222d,#ff202b,#ff1e2a,#ff1c29,#ff1b27,#ff1926,#ff1725,#ff1624,#ff1423,#ff1322,#ff1221,#ff1020,#ff0f1f,#ff0e1e,#ff0d1e,#ff0c1d,#ff0b1c,#ff0a1b,#ff091a,#ff081a,#ff0719,#ff0618,#ff0518,#ff0417,#ff0416,#ff0316,#ff0215,#ff0215,#ff0114,#ff0013,#ff0013,#ff0012,#ff0012,#f01,#f01,#f01,#ff0010,#ff0010,#ff000f,#ff000f,#ff000e,#ff000e,#ff000e,#ff000d,#ff000d,#ff000c,#ff000c,#ff000c,#ff000b,#ff000b,#ff000b,#ff000a,#ff000a,#ff000a,#ff000a,#ff0009,#ff0009,#ff0009,#ff0008,#ff0008,#ff0008,#ff0008,#ff0007,#ff0007,#ff0007)"></i><i style="left:7.2px;top:108px;width:726.1px;height:2.3px;background:linear-gradient(90deg,#00ff8e,#00ff8f,#00ff90,#00ff90,#00ff91,#00ff92,#00ff92,#00ff93,#00ff94,#00ff95,#00ff95,#00ff96,#00ff97,#00ff98,#0f9,#0f9,#00ff9a,#00ff9b,#00ff9c,#00ff9d,#00ff9e,#00ff9f,#00ffa0,#00ffa1,#00ffa2,#00ffa3,#00ffa4,#01ffa5,#08ffa7,#0fffa8,#17ffa9,#20ffaa,#2affab,#34ffad,#3effae,#49ffb0,#55ffb1,#61ffb2,#6effb4,#7bffb5,#89ffb7,#97ffb9,#a6ffba,#b5ffbc,#c6ffbe,#d7ffc0,#e8ffc2,#fbffc4,#fff1bb,#ffe1b0,#ffd2a6,#ffc49d,#ffb895,#ffac8d,#ffa286,#ff9880,#ff8f7a,#ff8774,#ff7f6f,#ff786a,#ff7166,#ff6b61,#ff655d,#ff605a,#ff5b56,#ff5653,#ff5150,#ff4d4d,#ff494a,#ff4547,#ff4145,#ff3e42,#ff3b40,#ff373e,#ff343c,#ff323a,#ff2f38,#ff2c36,#ff2a35,#ff2833,#ff2531,#ff2330,#ff212e,#ff1f2d,#ff1d2c,#ff1c2a,#ff1a29,#ff1828,#ff1727,#ff1526,#ff1425,#ff1224,#ff1123,#ff1022,#ff0f21,#ff0d20,#ff0c1f,#ff0b1e,#ff0a1d,#ff091c,#ff081c,#ff071b,#ff061a,#ff0519,#ff0519,#ff0418,#ff0318,#ff0217,#ff0216,#ff0116,#ff0115,#ff0015,#ff0014,#ff0013,#ff0013,#ff0012,#ff0012,#f01,#f01,#f01,#ff0010,#ff0010,#ff000f,#ff000f,#ff000e,#ff000e,#ff000e,#ff000d,#ff000d,#ff000d,#ff000c,#ff000c,#ff000c,#ff000b,#ff000b,#ff000b,#ff000a,#ff000a,#ff000a,#ff0009,#ff0009,#ff0009,#ff0009,#ff0008,#ff0008,#ff0008,#ff0008)"></i><i style="left:7.2px;top:110px;width:726.1px;height:2.3px;background:linear-gradient(90deg,#00ff92,#00ff93,#00ff94,#00ff94,#00ff95,#00ff96,#00ff97,#00ff97,#00ff98,#0f9,#00ff9a,#00ff9b,#00ff9b,#00ff9c,#00ff9d,#00ff9e,#00ff9f,#00ffa0,#00ffa1,#00ffa2,#00ffa3,#00ffa4,#00ffa5,#00ffa6,#00ffa7,#00ffa8,#0fa,#01ffab,#07ffac,#0effad,#17ffaf,#20ffb0,#29ffb1,#33ffb3,#3effb4,#49ffb6,#54ffb7,#61ffb9,#6dffba,#7bffbc,#88ffbe,#97ffc0,#a6ffc1,#b6ffc3,#c6ffc5,#d7ffc7,#e9ffc9,#fbffcb,#fff0c2,#ffe0b6,#ffd1ac,#ffc3a3,#ffb79a,#ffab92,#ffa18b,#ff9784,#ff8e7e,#ff8678,#ff7e73,#ff776e,#ff7069,#ff6a65,#ff6461,#ff5f5d,#ff5a59,#ff5556,#ff5053,#ff4c50,#ff484d,#ff444a,#ff4147,#ff3d45,#ff3a43,#ff3740,#ff343e,#ff313c,#ff2e3a,#ff2c38,#ff2937,#ff2735,#ff2533,#ff2332,#ff2130,#ff1f2f,#ff1d2e,#ff1b2c,#ff192b,#ff182a,#ff1628,#ff1527,#ff1326,#ff1225,#ff1124,#ff0f23,#ff0e22,#ff0d21,#ff0c20,#ff0b1f,#ff0a1f,#ff091e,#ff081d,#ff071c,#ff061b,#ff051b,#ff041a,#ff0419,#ff0319,#ff0218,#ff0217,#ff0117,#ff0016,#ff0016,#ff0015,#ff0015,#ff0014,#ff0014,#ff0013,#ff0013,#ff0012,#ff0012,#f01,#f01,#ff0010,#ff0010,#ff000f,#ff000f,#ff000f,#ff000e,#ff000e,#ff000d,#ff000d,#ff000d,#ff000c,#ff000c,#ff000c,#ff000b,#ff000b,#ff000b,#ff000b,#ff000a,#ff000a,#ff000a,#ff0009,#ff0009,#ff0009,#ff0009,#ff0008)"></i><i style="left:8.2px;top:112px;width:725.1px;height:2.3px;background:linear-gradient(90deg,#00ff96,#00ff97,#00ff98,#0f9,#0f9,#00ff9a,#00ff9b,#00ff9c,#00ff9d,#00ff9e,#00ff9e,#00ff9f,#00ffa0,#00ffa1,#00ffa2,#00ffa3,#00ffa4,#00ffa5,#00ffa6,#00ffa7,#00ffa8,#00ffa9,#00ffab,#00ffac,#00ffad,#00ffae,#00ffaf,#01ffb1,#07ffb2,#0fffb3,#17ffb5,#20ffb6,#2affb8,#34ffb9,#3fffbb,#4affbc,#56ffbe,#62ffc0,#6fffc1,#7cffc3,#8affc5,#99ffc7,#a8ffc9,#b8ffcb,#c9ffcd,#daffcf,#ecffd1,#ffffd3,#ffedc7,#fdb,#ffceb1,#ffc1a7,#ffb49e,#ffa996,#ff9f8f,#ff9588,#ff8c82,#ff847c,#ff7d76,#ff7671,#ff6f6c,#ff6968,#ff6364,#ff5e60,#ff595c,#ff5459,#ff4f55,#ff4b52,#ff474f,#ff434d,#ff404a,#ff3c47,#ff3945,#ff3643,#ff3340,#ff303e,#ff2e3c,#ff2b3b,#ff2939,#ff2637,#ff2435,#ff2234,#ff2032,#ff1e31,#ff1c2f,#ff1b2e,#ff192d,#ff172b,#ff162a,#ff1429,#ff1328,#ff1127,#ff1026,#ff0f25,#ff0e24,#ff0c23,#ff0b22,#ff0a21,#ff0920,#ff081f,#ff071e,#ff061d,#ff061d,#ff051c,#ff041b,#ff031b,#ff031a,#ff0219,#ff0119,#ff0118,#ff0017,#ff0017,#ff0016,#ff0016,#ff0015,#ff0015,#ff0014,#ff0014,#ff0013,#ff0013,#ff0012,#ff0012,#f01,#f01,#ff0010,#ff0010,#ff000f,#ff000f,#ff000f,#ff000e,#ff000e,#ff000e,#ff000d,#ff000d,#ff000d,#ff000c,#ff000c,#ff000c,#ff000b,#ff000b,#ff000b,#ff000a,#ff000a,#ff000a,#ff000a,#ff0009,#ff0009)"></i><i style="left:8.2px;top:114px;width:725.1px;height:2.3px;background:linear-gradient(90deg,#00ff9a,#00ff9b,#00ff9c,#00ff9d,#00ff9e,#00ff9f,#00ff9f,#00ffa0,#00ffa1,#00ffa2,#00ffa3,#00ffa4,#00ffa5,#00ffa6,#00ffa7,#00ffa8,#00ffa9,#0fa,#00ffab,#00ffac,#00ffad,#00ffaf,#00ffb0,#00ffb1,#00ffb2,#00ffb4,#00ffb5,#01ffb6,#07ffb8,#0effb9,#17ffbb,#20ffbc,#29ffbe,#34ffbf,#3effc1,#4affc3,#55ffc4,#62ffc6,#6fffc8,#7cffca,#8affcc,#99ffce,#a8ffd0,#b8ffd2,#c9ffd4,#daffd6,#ecffd9,#ffffdb,#ffedce,#ffdcc2,#ffcdb7,#ffc0ad,#ffb3a4,#ffa89b,#ff9e94,#ff948d,#ff8c86,#ff8380,#ff7c7a,#ff7575,#ff6e70,#ff686c,#ff6267,#ff5d63,#ff585f,#ff535c,#ff4f58,#ff4a55,#ff4652,#ff434f,#ff3f4d,#ff3c4a,#ff3847,#ff3545,#ff3243,#ff3041,#ff2d3f,#ff2a3d,#ff283b,#ff2639,#ff2437,#ff2236,#ff2034,#ff1e33,#ff1c31,#ff1a30,#ff182e,#ff172d,#ff152c,#ff142b,#ff1229,#ff1128,#ff1027,#ff0e26,#ff0d25,#ff0c24,#ff0b23,#ff0a22,#ff0921,#ff0820,#ff0720,#ff061f,#ff051e,#ff041d,#ff041d,#ff031c,#ff021b,#ff021a,#ff011a,#ff0019,#ff0018,#ff0018,#ff0017,#ff0017,#ff0016,#ff0016,#ff0015,#ff0015,#ff0014,#ff0014,#ff0013,#ff0013,#ff0012,#ff0012,#f01,#f01,#ff0010,#ff0010,#ff0010,#ff000f,#ff000f,#ff000e,#ff000e,#ff000e,#ff000d,#ff000d,#ff000d,#ff000c,#ff000c,#ff000c,#ff000b,#ff000b,#ff000b,#ff000b,#ff000a,#ff000a,#ff000a)"></i><i style="left:9.2px;top:116px;width:724.1px;height:2.3px;background:linear-gradient(90deg,#00ff9f,#00ffa0,#00ffa0,#00ffa1,#00ffa2,#00ffa3,#00ffa4,#00ffa5,#00ffa6,#00ffa7,#00ffa8,#00ffa9,#0fa,#00ffab,#00ffac,#00ffad,#00ffae,#00ffaf,#00ffb1,#00ffb2,#00ffb3,#00ffb4,#00ffb6,#00ffb7,#00ffb8,#00ffba,#0fb,#02ffbd,#09ffbe,#11ffc0,#19ffc1,#23ffc3,#2dffc5,#37ffc6,#42ffc8,#4effca,#5affcc,#67ffce,#74ffd0,#82ffd2,#90ffd4,#9fffd6,#afffd8,#c0ffda,#d1ffdd,#e3ffdf,#f6ffe2,#fff5dc,#ffe4cf,#ffd4c3,#ffc6b8,#ffb9ae,#ffada5,#ffa29d,#ff9895,#ff8f8e,#ff8687,#ff7f81,#ff777c,#ff7076,#ff6a71,#ff646d,#ff5f69,#ff5964,#ff5461,#ff505d,#ff4b5a,#ff4756,#ff4353,#ff4050,#ff3c4e,#ff394b,#ff3649,#ff3346,#ff3044,#ff2d42,#ff2b40,#ff283e,#ff263c,#ff243a,#ff2238,#ff2037,#ff1e35,#ff1c33,#ff1a32,#ff1831,#ff172f,#ff152e,#ff142d,#ff122b,#ff112a,#ff1029,#ff0e28,#ff0d27,#ff0c26,#ff0b25,#ff0a24,#ff0923,#ff0822,#ff0721,#ff0620,#ff0520,#ff041f,#ff041e,#ff031d,#ff021c,#ff011c,#ff011b,#ff001a,#ff001a,#ff0019,#ff0019,#ff0018,#ff0017,#ff0017,#ff0016,#ff0016,#ff0015,#ff0015,#ff0014,#ff0014,#ff0013,#ff0013,#ff0012,#ff0012,#f01,#f01,#f01,#ff0010,#ff0010,#ff000f,#ff000f,#ff000f,#ff000e,#ff000e,#ff000e,#ff000d,#ff000d,#ff000d,#ff000c,#ff000c,#ff000c,#ff000b,#ff000b,#ff000b,#ff000a)"></i><i style="left:10.2px;top:118px;width:723.1px;height:2.3px;background:linear-gradient(90deg,#00ffa3,#00ffa4,#00ffa5,#00ffa6,#00ffa7,#00ffa8,#00ffa9,#0fa,#00ffab,#00ffac,#00ffad,#00ffae,#00ffaf,#00ffb0,#00ffb1,#00ffb2,#00ffb4,#00ffb5,#00ffb6,#00ffb7,#00ffb9,#00ffba,#0fb,#00ffbd,#00ffbe,#00ffc0,#00ffc1,#02ffc3,#09ffc4,#11ffc6,#1affc8,#24ffc9,#2effcb,#38ffcd,#43ffcf,#4fffd1,#5bffd3,#68ffd5,#76ffd7,#84ffd9,#92ffdb,#a2ffde,#b2ffe0,#c2ffe2,#d4ffe5,#e6ffe8,#f9ffea,#fff2e1,#ffe1d4,#ffd1c8,#ffc3bc,#ffb6b2,#ffaba9,#ffa0a1,#ff9699,#ff8d92,#ff858b,#ff7d85,#ff767f,#ff6f7a,#ff6975,#ff6370,#ff5d6c,#ff5867,#ff5363,#ff4f60,#ff4a5c,#ff4659,#ff4256,#ff3f53,#ff3b50,#ff384d,#ff354b,#ff3248,#ff2f46,#ff2d44,#ff2a42,#ff2840,#ff253e,#ff233c,#ff213a,#ff1f38,#ff1d37,#ff1b35,#ff1934,#ff1832,#ff1631,#ff1530,#ff132e,#ff122d,#ff102c,#ff0f2b,#ff0e29,#ff0d28,#ff0c27,#ff0a26,#ff0925,#ff0824,#ff0723,#ff0623,#ff0622,#ff0521,#ff0420,#ff031f,#ff021e,#ff021e,#ff011d,#ff011c,#ff001c,#ff001b,#ff001a,#ff001a,#ff0019,#ff0018,#ff0018,#ff0017,#ff0017,#ff0016,#ff0016,#ff0015,#ff0015,#ff0014,#ff0014,#ff0013,#ff0013,#ff0012,#ff0012,#f01,#f01,#f01,#ff0010,#ff0010,#ff000f,#ff000f,#ff000f,#ff000e,#ff000e,#ff000e,#ff000d,#ff000d,#ff000d,#ff000c,#ff000c,#ff000c,#ff000b,#ff000b)"></i><i style="left:10.2px;top:120px;width:722px;height:2.3px;background:linear-gradient(90deg,#00ffa7,#00ffa8,#00ffa9,#0fa,#00ffab,#00ffac,#00ffad,#00ffae,#00ffaf,#00ffb0,#00ffb1,#00ffb3,#00ffb4,#00ffb5,#00ffb6,#00ffb7,#00ffb9,#00ffba,#0fb,#00ffbd,#00ffbe,#00ffbf,#00ffc1,#00ffc2,#00ffc4,#00ffc5,#00ffc7,#02ffc9,#08ffca,#10ffcc,#19ffce,#22ffd0,#2cffd2,#37ffd3,#42ffd5,#4effd7,#5affda,#67ffdc,#75ffde,#83ffe0,#91ffe3,#a1ffe5,#b1ffe8,#c2ffea,#d3ffed,#e5fff0,#f8fff2,#fff3ea,#ffe1dc,#ffd2cf,#ffc3c3,#ffb7b9,#ffabaf,#ffa0a7,#ff969e,#ff8d97,#ff8490,#ff7d8a,#ff7584,#ff6f7e,#ff6879,#ff6274,#ff5d6f,#ff586b,#ff5367,#ff4e63,#ff4a60,#ff465c,#ff4259,#ff3e56,#ff3b53,#ff3850,#ff354e,#ff324b,#ff2f49,#ff2c46,#ff2a44,#ff2742,#ff2540,#ff233e,#ff213c,#ff1f3b,#ff1d39,#ff1b37,#ff1936,#ff1834,#ff1633,#ff1432,#ff1330,#ff112f,#ff102e,#ff0f2c,#ff0e2b,#ff0c2a,#ff0b29,#ff0a28,#ff0927,#ff0826,#ff0725,#ff0624,#ff0523,#ff0522,#ff0421,#ff0321,#ff0220,#ff021f,#ff011e,#ff001e,#ff001d,#ff001c,#ff001c,#ff001b,#ff001a,#ff001a,#ff0019,#ff0018,#ff0018,#ff0017,#ff0017,#ff0016,#ff0016,#ff0015,#ff0015,#ff0014,#ff0014,#ff0013,#ff0013,#ff0012,#ff0012,#ff0012,#f01,#f01,#ff0010,#ff0010,#ff0010,#ff000f,#ff000f,#ff000e,#ff000e,#ff000e,#ff000d,#ff000d,#ff000d,#ff000d,#ff000c,#ff000c)"></i><i style="left:11.2px;top:122px;width:719px;height:2.3px;background:linear-gradient(90deg,#00ffac,#00ffad,#00ffae,#00ffaf,#00ffb0,#00ffb1,#00ffb2,#00ffb3,#00ffb4,#00ffb5,#00ffb7,#00ffb8,#00ffb9,#00ffba,#00ffbc,#00ffbd,#00ffbe,#00ffc0,#00ffc1,#00ffc2,#00ffc4,#00ffc5,#00ffc7,#00ffc8,#00ffca,#0fc,#00ffcd,#03ffcf,#0affd1,#12ffd3,#1bffd5,#25ffd7,#2fffd9,#3affdb,#45ffdd,#51ffdf,#5effe1,#6bffe4,#79ffe6,#87ffe8,#96ffeb,#a6ffee,#b6fff0,#c7fff3,#d9fff6,#ecfff9,#fffffc,#ffecec,#ffdbde,#ffccd1,#ffbec6,#ffb2bb,#ffa6b2,#ff9ca9,#ff92a1,#ff8999,#ff8192,#ff798c,#ff7286,#ff6b80,#ff657b,#ff6076,#ff5a71,#ff556d,#ff5069,#ff4c65,#ff4861,#ff445e,#ff405b,#ff3c58,#ff3955,#ff3652,#ff334f,#ff304d,#ff2d4a,#ff2b48,#ff2846,#ff2644,#ff2342,#ff2140,#ff1f3e,#ff1d3c,#ff1b3a,#ff1a39,#ff1837,#ff1636,#ff1534,#ff1333,#ff1231,#ff1030,#ff0f2f,#ff0e2e,#ff0d2c,#ff0b2b,#ff0a2a,#ff0929,#ff0828,#ff0727,#ff0626,#ff0525,#ff0524,#ff0423,#ff0322,#ff0222,#ff0221,#ff0120,#ff001f,#ff001e,#ff001e,#ff001d,#ff001c,#ff001c,#ff001b,#ff001a,#ff001a,#ff0019,#ff0019,#ff0018,#ff0017,#ff0017,#ff0016,#ff0016,#ff0015,#ff0015,#ff0014,#ff0014,#ff0013,#ff0013,#ff0013,#ff0012,#ff0012,#f01,#f01,#f01,#ff0010,#ff0010,#ff000f,#ff000f,#ff000f,#ff000e,#ff000e,#ff000e,#ff000d,#ff000d,#ff000d)"></i><i style="left:12.2px;top:124px;width:716px;height:2.3px;background:linear-gradient(90deg,#00ffb0,#00ffb1,#00ffb2,#00ffb4,#00ffb5,#00ffb6,#00ffb7,#00ffb8,#00ffb9,#00ffba,#00ffbc,#00ffbd,#00ffbe,#00ffc0,#00ffc1,#00ffc2,#00ffc4,#00ffc5,#00ffc7,#00ffc8,#00ffca,#00ffcb,#00ffcd,#00ffce,#00ffd0,#00ffd2,#00ffd4,#03ffd6,#0affd7,#12ffd9,#1bffdb,#25ffdd,#2fffe0,#3affe2,#45ffe4,#51ffe6,#5effe9,#6bffeb,#79ffed,#87fff0,#97fff3,#a6fff5,#b7fff8,#c8fffb,#dafffe,#eafdff,#fbfaff,#ffebf3,#ffdae5,#ffcbd8,#ffbdcc,#ffb1c1,#ffa5b7,#ff9bae,#ff91a6,#ff889e,#ff8097,#ff7990,#ff728a,#ff6b84,#ff657f,#ff5f7a,#ff5a75,#ff5571,#ff506d,#ff4b69,#ff4765,#ff4361,#ff405e,#ff3c5b,#ff3958,#ff3555,#ff3252,#ff304f,#ff2d4d,#ff2a4b,#ff2848,#ff2546,#ff2344,#ff2142,#ff1f40,#ff1d3e,#ff1b3d,#ff193b,#ff1839,#ff1638,#ff1536,#ff1335,#ff1233,#ff1032,#ff0f31,#ff0e2f,#ff0c2e,#ff0b2d,#ff0a2c,#ff092b,#ff082a,#ff0729,#ff0628,#ff0527,#ff0426,#ff0425,#ff0324,#ff0223,#ff0222,#ff0121,#ff0021,#ff0020,#ff001f,#ff001e,#ff001e,#ff001d,#ff001c,#ff001c,#ff001b,#ff001a,#ff001a,#ff0019,#ff0019,#ff0018,#ff0018,#ff0017,#ff0017,#ff0016,#ff0016,#ff0015,#ff0015,#ff0014,#ff0014,#ff0013,#ff0013,#ff0012,#ff0012,#ff0012,#f01,#f01,#ff0010,#ff0010,#ff0010,#ff000f,#ff000f,#ff000f,#ff000e,#ff000e,#ff000e)"></i><i style="left:12.2px;top:126px;width:714px;height:2.3px;background:linear-gradient(90deg,#00ffb5,#00ffb6,#00ffb7,#00ffb8,#00ffb9,#00ffba,#00ffbc,#00ffbd,#00ffbe,#00ffbf,#00ffc1,#00ffc2,#00ffc3,#00ffc5,#00ffc6,#00ffc8,#00ffc9,#00ffcb,#0fc,#00ffce,#00ffcf,#00ffd1,#00ffd3,#00ffd5,#00ffd6,#00ffd8,#00ffda,#03ffdc,#0affde,#12ffe0,#1bffe2,#25ffe4,#30ffe7,#3bffe9,#46ffeb,#53ffee,#5ffff0,#6dfff3,#7bfff5,#8afff8,#99fffb,#a9fffe,#b9fdff,#c7faff,#d7f7ff,#e6f4ff,#f6f1ff,#ffe7f8,#ffd6e9,#ffc7dc,#ffbad0,#ffadc5,#ffa2bb,#ff98b2,#ff8ea9,#ff86a1,#ff7e9a,#ff7693,#ff6f8d,#ff6987,#ff6382,#ff5d7c,#ff5878,#ff5373,#ff4e6f,#ff4a6b,#ff4567,#ff4163,#ff3e60,#ff3a5d,#ff375a,#ff3457,#ff3154,#ff2e51,#ff2b4f,#ff294c,#ff264a,#ff2448,#ff2246,#ff2044,#ff1e42,#ff1c40,#ff1a3e,#ff183c,#ff173b,#ff1539,#ff1437,#ff1236,#ff1135,#ff0f33,#ff0e32,#ff0d31,#ff0c2f,#ff0a2e,#ff092d,#ff082c,#ff072b,#ff062a,#ff0529,#ff0528,#ff0427,#ff0326,#ff0225,#ff0224,#ff0123,#f02,#f02,#ff0021,#ff0020,#ff001f,#ff001f,#ff001e,#ff001d,#ff001d,#ff001c,#ff001b,#ff001b,#ff001a,#ff0019,#ff0019,#ff0018,#ff0018,#ff0017,#ff0017,#ff0016,#ff0016,#ff0015,#ff0015,#ff0014,#ff0014,#ff0013,#ff0013,#ff0013,#ff0012,#ff0012,#f01,#f01,#f01,#ff0010,#ff0010,#ff0010,#ff000f,#ff000f,#ff000f)"></i><i style="left:13.2px;top:128px;width:711px;height:2.3px;background:linear-gradient(90deg,#00ffba,#0fb,#00ffbc,#00ffbd,#00ffbe,#00ffbf,#00ffc1,#00ffc2,#00ffc3,#00ffc5,#00ffc6,#00ffc7,#00ffc9,#00ffca,#0fc,#00ffcd,#00ffcf,#00ffd0,#00ffd2,#00ffd4,#00ffd5,#00ffd7,#00ffd9,#00ffdb,#0fd,#00ffdf,#00ffe1,#03ffe3,#0affe5,#12ffe7,#1cffe9,#25ffeb,#30ffee,#3bfff0,#47fff3,#53fff5,#60fff8,#6dfffa,#7bfffd,#8afeff,#97fbff,#a5f8ff,#b3f5ff,#c2f2ff,#d1efff,#e0ecff,#efe9ff,#ffe6ff,#ffd5f0,#ffc7e2,#ffb9d6,#ffadcb,#ffa2c1,#ff97b7,#ff8eae,#ff85a6,#ff7d9f,#ff7598,#ff6f91,#ff688b,#ff6286,#ff5c80,#ff577b,#ff5277,#ff4e72,#ff496e,#ff456a,#ff4167,#ff3d63,#ff3a60,#ff375d,#ff345a,#ff3157,#ff2e54,#ff2b51,#ff294f,#ff264d,#ff244a,#ff2248,#ff2046,#ff1e44,#ff1c42,#ff1a40,#ff183e,#ff163d,#ff153b,#ff133a,#ff1238,#ff1037,#ff0f35,#ff0e34,#ff0d32,#ff0b31,#ff0a30,#ff092f,#ff082e,#ff072c,#ff062b,#ff052a,#ff0429,#ff0428,#ff0327,#ff0226,#ff0126,#ff0125,#ff0024,#ff0023,#f02,#ff0021,#ff0021,#ff0020,#ff001f,#ff001f,#ff001e,#ff001d,#ff001d,#ff001c,#ff001b,#ff001b,#ff001a,#ff001a,#ff0019,#ff0018,#ff0018,#ff0017,#ff0017,#ff0016,#ff0016,#ff0015,#ff0015,#ff0014,#ff0014,#ff0014,#ff0013,#ff0013,#ff0012,#ff0012,#ff0012,#f01,#f01,#ff0010,#ff0010,#ff0010,#ff000f)"></i><i style="left:13.2px;top:130px;width:709px;height:2.3px;background:linear-gradient(90deg,#00ffbe,#00ffbf,#00ffc0,#00ffc2,#00ffc3,#00ffc4,#00ffc6,#00ffc7,#00ffc8,#00ffca,#00ffcb,#00ffcd,#00ffce,#00ffd0,#00ffd1,#00ffd3,#00ffd4,#00ffd6,#00ffd8,#00ffda,#00ffdb,#0fd,#00ffdf,#00ffe1,#00ffe3,#00ffe5,#00ffe7,#03ffe9,#0affec,#13ffee,#1cfff0,#26fff3,#31fff5,#3cfff8,#48fffa,#54fffd,#61feff,#6efbff,#7af9ff,#87f6ff,#95f3ff,#a2f0ff,#b0edff,#bfeaff,#cde7ff,#dce4ff,#ebe1ff,#fbdeff,#ffd1f4,#ffc3e6,#ffb5da,#ffa9ce,#ff9ec4,#ff94ba,#ff8bb1,#ff82a9,#ff7aa2,#ff739b,#ff6c94,#ff668e,#ff6088,#ff5a83,#ff557e,#ff5079,#ff4c75,#ff4770,#ff436c,#ff3f69,#ff3c65,#ff3862,#ff355e,#ff325b,#ff2f58,#ff2c56,#ff2a53,#ff2751,#ff254e,#ff234c,#ff204a,#ff1e47,#ff1c45,#ff1a43,#ff1942,#ff1740,#ff153e,#ff143c,#ff123b,#ff1139,#ff0f38,#ff0e36,#ff0d35,#ff0c34,#ff0b32,#ff0931,#ff0830,#ff072f,#ff062e,#ff052c,#ff052b,#ff042a,#ff0329,#ff0228,#ff0227,#ff0127,#ff0026,#ff0025,#ff0024,#ff0023,#f02,#f02,#ff0021,#ff0020,#ff001f,#ff001f,#ff001e,#ff001d,#ff001d,#ff001c,#ff001b,#ff001b,#ff001a,#ff001a,#ff0019,#ff0019,#ff0018,#ff0018,#ff0017,#ff0017,#ff0016,#ff0016,#ff0015,#ff0015,#ff0014,#ff0014,#ff0013,#ff0013,#ff0013,#ff0012,#ff0012,#f01,#f01,#f01,#ff0010)"></i><i style="left:14.2px;top:132px;width:706px;height:2.3px;background:linear-gradient(90deg,#00ffc3,#00ffc4,#00ffc5,#00ffc7,#00ffc8,#00ffc9,#00ffcb,#0fc,#00ffce,#00ffcf,#00ffd1,#00ffd2,#00ffd4,#00ffd5,#00ffd7,#00ffd9,#00ffda,#00ffdc,#00ffde,#00ffe0,#00ffe2,#00ffe3,#00ffe5,#00ffe8,#00ffea,#00ffec,#0fe,#03fff0,#0afff3,#13fff5,#1cfff7,#26fffa,#31fffc,#3cffff,#47fcff,#53f9ff,#5ef7ff,#6bf4ff,#77f1ff,#84eeff,#91ebff,#9ee8ff,#abe6ff,#b9e3ff,#c7e0ff,#d6ddff,#e5daff,#f3d7ff,#ffd1fb,#ffc2ed,#ffb5e0,#ffa9d5,#ff9eca,#ff94c0,#ff8ab7,#ff82ae,#ff7aa7,#ff729f,#ff6c99,#ff6592,#ff5f8c,#ff5a87,#ff5582,#ff507d,#ff4b78,#ff4774,#ff4370,#ff3f6c,#ff3b68,#ff3865,#ff3562,#ff325e,#ff2f5b,#ff2c59,#ff2956,#ff2753,#ff2551,#ff224e,#ff204c,#ff1e4a,#ff1c48,#ff1a46,#ff1844,#ff1742,#ff1540,#ff143f,#ff123d,#ff113b,#ff0f3a,#ff0e38,#ff0d37,#ff0b36,#ff0a34,#ff0933,#ff0832,#ff0730,#ff062f,#ff052e,#ff042d,#ff042c,#ff032b,#ff022a,#ff0129,#ff0128,#ff0027,#ff0026,#ff0025,#ff0025,#ff0024,#ff0023,#f02,#ff0021,#ff0021,#ff0020,#ff001f,#ff001f,#ff001e,#ff001d,#ff001d,#ff001c,#ff001b,#ff001b,#ff001a,#ff001a,#ff0019,#ff0019,#ff0018,#ff0018,#ff0017,#ff0017,#ff0016,#ff0016,#ff0015,#ff0015,#ff0014,#ff0014,#ff0014,#ff0013,#ff0013,#ff0012,#ff0012,#ff0012,#f01)"></i><i style="left:15.2px;top:134px;width:703px;height:2.3px;background:linear-gradient(90deg,#00ffc8,#00ffc9,#00ffca,#0fc,#00ffcd,#00ffcf,#00ffd0,#00ffd2,#00ffd3,#00ffd5,#00ffd6,#00ffd8,#00ffd9,#00ffdb,#0fd,#00ffdf,#00ffe0,#00ffe2,#00ffe4,#00ffe6,#00ffe8,#00ffea,#00ffec,#0fe,#00fff1,#00fff3,#00fff5,#04fff8,#0cfffa,#15fffd,#1effff,#28fcff,#32faff,#3df7ff,#48f4ff,#53f1ff,#5fefff,#6becff,#77e9ff,#84e6ff,#90e3ff,#9de1ff,#abdeff,#b8dbff,#c6d8ff,#d4d5ff,#e3d2ff,#f2cfff,#ffcbfd,#ffbcef,#ffb0e2,#ffa4d7,#f9c,#ff8fc2,#ff86b9,#ff7eb0,#ff76a9,#ff6fa1,#ff689a,#ff6294,#ff5c8e,#ff5789,#ff5283,#ff4d7f,#ff497a,#ff4576,#ff4171,#ff3d6e,#ff396a,#ff3666,#ff3363,#ff3060,#ff2d5d,#ff2a5a,#ff2857,#ff2555,#ff2352,#ff2150,#ff1f4d,#ff1d4b,#ff1b49,#ff1947,#ff1745,#ff1543,#ff1441,#ff1240,#ff113e,#ff103c,#ff0e3b,#ff0d39,#ff0c38,#ff0b37,#ff0935,#ff0834,#ff0733,#ff0631,#ff0530,#ff052f,#ff042e,#ff032d,#ff022c,#ff022b,#ff012a,#ff0029,#ff0028,#ff0027,#ff0026,#ff0025,#ff0025,#ff0024,#ff0023,#f02,#ff0021,#ff0021,#ff0020,#ff001f,#ff001f,#ff001e,#ff001d,#ff001d,#ff001c,#ff001c,#ff001b,#ff001a,#ff001a,#ff0019,#ff0019,#ff0018,#ff0018,#ff0017,#ff0017,#ff0016,#ff0016,#ff0015,#ff0015,#ff0015,#ff0014,#ff0014,#ff0013,#ff0013,#ff0013,#ff0012)"></i><i style="left:15.2px;top:136px;width:702px;height:2.3px;background:linear-gradient(90deg,#00ffcd,#00ffce,#00ffcf,#00ffd1,#00ffd2,#00ffd4,#00ffd5,#00ffd7,#00ffd8,#00ffda,#00ffdb,#0fd,#00ffdf,#00ffe1,#00ffe2,#00ffe4,#00ffe6,#00ffe8,#00ffea,#00ffec,#0fe,#00fff0,#00fff3,#00fff5,#00fff7,#00fff9,#00fffc,#03fffe,#0bfdff,#13fbff,#1cf8ff,#26f5ff,#30f3ff,#3af0ff,#45edff,#50ebff,#5be8ff,#67e5ff,#73e2ff,#7fe0ff,#8bddff,#98daff,#a5d7ff,#b2d4ff,#c0d1ff,#cecfff,#dcccff,#eac9ff,#f9c6ff,#ffbdf7,#ffb0ea,#ffa4dd,#ff99d2,#ff8fc8,#ff86bf,#ff7eb6,#ff76ae,#ff6fa6,#ff689f,#ff6299,#ff5c93,#ff578d,#ff5288,#ff4d83,#ff487e,#ff4479,#ff4075,#ff3c71,#ff396d,#ff366a,#ff3266,#ff2f63,#ff2d60,#ff2a5d,#ff275a,#ff2557,#ff2355,#ff2052,#ff1e50,#ff1c4e,#ff1a4c,#ff1949,#ff1747,#ff1545,#ff1444,#ff1242,#ff1140,#ff0f3f,#ff0e3d,#ff0d3b,#ff0b3a,#ff0a38,#ff0937,#ff0836,#ff0734,#ff0633,#ff0532,#ff0431,#ff0430,#ff032f,#ff022d,#ff012c,#ff012b,#ff002a,#ff002a,#ff0029,#ff0028,#ff0027,#ff0026,#ff0025,#ff0024,#ff0024,#ff0023,#f02,#ff0021,#ff0021,#ff0020,#ff001f,#ff001f,#ff001e,#ff001d,#ff001d,#ff001c,#ff001c,#ff001b,#ff001a,#ff001a,#ff0019,#ff0019,#ff0018,#ff0018,#ff0017,#ff0017,#ff0016,#ff0016,#ff0016,#ff0015,#ff0015,#ff0014,#ff0014,#ff0013,#ff0013)"></i><i style="left:16.2px;top:138px;width:699px;height:2.3px;background:linear-gradient(90deg,#00ffd2,#00ffd3,#00ffd4,#00ffd6,#00ffd7,#00ffd9,#00ffdb,#00ffdc,#00ffde,#00ffe0,#00ffe1,#00ffe3,#00ffe5,#00ffe7,#00ffe9,#00ffeb,#00ffed,#00ffef,#00fff1,#00fff3,#00fff5,#00fff7,#00fffa,#00fffc,#00fffe,#00fdff,#00fbff,#04f8ff,#0cf6ff,#14f3ff,#1df0ff,#27eeff,#31ebff,#3be9ff,#46e6ff,#51e3ff,#5ce1ff,#67deff,#73dbff,#7fd8ff,#8bd6ff,#98d3ff,#a5d0ff,#b2cdff,#bfcaff,#ccc7ff,#dac4ff,#e8c1ff,#f7bfff,#ffb7f9,#ffaaec,#ff9fdf,#ff95d4,#ff8bca,#ff82c1,#ff7ab8,#ff72b0,#ff6ba8,#ff65a1,#ff5f9b,#ff5994,#ff548f,#ff4f89,#ff4a84,#ff467f,#ff427b,#ff3e77,#ff3a73,#ff376f,#ff346b,#ff3168,#ff2e64,#ff2b61,#ff285e,#ff265b,#ff2359,#ff2156,#ff1f54,#ff1d51,#ff1b4f,#ff194d,#ff174b,#ff1649,#ff1447,#ff1245,#ff1143,#ff1041,#ff0e40,#ff0d3e,#ff0c3c,#ff0a3b,#ff093a,#ff0838,#ff0737,#ff0635,#ff0534,#ff0433,#ff0432,#ff0331,#ff022f,#ff012e,#ff012d,#ff002c,#ff002b,#ff002a,#ff0029,#ff0029,#ff0028,#ff0027,#ff0026,#ff0025,#ff0024,#ff0024,#ff0023,#f02,#ff0021,#ff0021,#ff0020,#ff001f,#ff001f,#ff001e,#ff001d,#ff001d,#ff001c,#ff001c,#ff001b,#ff001b,#ff001a,#ff001a,#ff0019,#ff0018,#ff0018,#ff0018,#ff0017,#ff0017,#ff0016,#ff0016,#ff0015,#ff0015,#ff0014,#ff0014)"></i><i style="left:17.2px;top:140px;width:696px;height:2.3px;background:linear-gradient(90deg,#00ffd7,#00ffd8,#00ffda,#00ffdb,#0fd,#00ffde,#00ffe0,#00ffe2,#00ffe4,#00ffe5,#00ffe7,#00ffe9,#00ffeb,#00ffed,#00ffef,#00fff1,#00fff3,#00fff5,#00fff7,#00fff9,#00fffc,#00fffe,#00feff,#00fbff,#00f9ff,#00f6ff,#00f4ff,#04f1ff,#0cefff,#14ecff,#1deaff,#26e7ff,#30e5ff,#3ae2ff,#44dfff,#4eddff,#59daff,#65d7ff,#70d5ff,#7cd2ff,#88cfff,#94cdff,#a0caff,#adc7ff,#bac4ff,#c7c1ff,#d4beff,#e2bcff,#f0b9ff,#feb6ff,#ffaaf2,#ff9ee6,#ff94da,#ff8ad0,#ff81c6,#ff79bd,#ff72b5,#ff6bad,#ff64a6,#ff5e9f,#ff5999,#ff5393,#ff4e8d,#ff4a88,#ff4683,#ff417f,#ff3e7a,#ff3a76,#ff3772,#ff336e,#ff306b,#ff2d67,#ff2b64,#ff2861,#ff255e,#ff235b,#ff2159,#ff1f56,#ff1d54,#ff1b51,#ff194f,#ff174d,#ff154b,#ff1449,#ff1247,#ff1145,#ff0f43,#ff0e42,#ff0d40,#ff0b3f,#ff0a3d,#ff093b,#ff083a,#ff0739,#ff0637,#ff0536,#ff0435,#ff0334,#ff0332,#ff0231,#ff0130,#ff012f,#ff002e,#ff002d,#ff002c,#ff002b,#ff002a,#ff0029,#ff0028,#ff0027,#ff0027,#ff0026,#ff0025,#ff0024,#ff0023,#ff0023,#f02,#ff0021,#ff0021,#ff0020,#ff001f,#ff001f,#ff001e,#ff001d,#ff001d,#ff001c,#ff001c,#ff001b,#ff001b,#ff001a,#ff001a,#ff0019,#ff0019,#ff0018,#ff0018,#ff0017,#ff0017,#ff0016,#ff0016,#ff0015,#ff0015)"></i><i style="left:18.2px;top:142px;width:693px;height:2.3px;background:linear-gradient(90deg,#00ffdc,#00ffde,#00ffdf,#00ffe1,#00ffe2,#00ffe4,#00ffe6,#00ffe8,#00ffe9,#00ffeb,#00ffed,#00ffef,#00fff1,#00fff3,#00fff5,#00fff7,#00fff9,#00fffc,#00fffe,#00feff,#00fbff,#00f9ff,#00f7ff,#00f4ff,#00f2ff,#00efff,#00edff,#05eaff,#0de8ff,#15e5ff,#1ee3ff,#27e0ff,#31deff,#3adbff,#45d9ff,#4fd6ff,#5ad3ff,#65d1ff,#70ceff,#7ccbff,#87c8ff,#94c6ff,#a0c3ff,#acc0ff,#b9bdff,#c6bbff,#d3b8ff,#e1b5ff,#eeb2ff,#fcafff,#ffa5f4,#ff9ae8,#ff8fdc,#ff86d2,#ff7ec8,#ff76bf,#ff6eb7,#ff68af,#ff61a8,#ff5ba1,#ff569a,#ff5195,#ff4c8f,#ff478a,#ff4385,#ff3f80,#ff3b7c,#ff3878,#ff3574,#ff3170,#ff2e6c,#ff2c69,#ff2966,#ff2663,#ff2460,#ff225d,#ff1f5a,#ff1d58,#ff1b55,#ff1953,#ff1850,#ff164e,#ff144c,#ff134a,#ff1148,#ff1046,#ff0e45,#ff0d43,#ff0c41,#ff0a40,#ff093e,#ff083d,#ff073b,#ff063a,#ff0538,#ff0437,#ff0436,#ff0334,#ff0233,#ff0132,#ff0131,#ff0030,#ff002f,#ff002e,#ff002d,#ff002c,#ff002b,#ff002a,#ff0029,#ff0028,#ff0027,#ff0027,#ff0026,#ff0025,#ff0024,#ff0023,#ff0023,#f02,#ff0021,#ff0021,#ff0020,#ff001f,#ff001f,#ff001e,#ff001e,#ff001d,#ff001c,#ff001c,#ff001b,#ff001b,#ff001a,#ff001a,#ff0019,#ff0019,#ff0018,#ff0018,#ff0017,#ff0017,#ff0016,#ff0016)"></i><i style="left:18.2px;top:144px;width:691px;height:2.3px;background:linear-gradient(90deg,#00ffe1,#00ffe3,#00ffe4,#00ffe6,#00ffe8,#00ffe9,#00ffeb,#00ffed,#00ffef,#00fff1,#00fff3,#00fff5,#00fff7,#00fff9,#00fffb,#00fffd,#0ff,#00fcff,#00faff,#00f8ff,#00f5ff,#00f3ff,#00f1ff,#0ef,#00ecff,#00e9ff,#00e7ff,#04e4ff,#0be2ff,#13e0ff,#1cddff,#25dbff,#2ed8ff,#37d5ff,#41d3ff,#4cd0ff,#56ceff,#61cbff,#6cc8ff,#77c6ff,#82c3ff,#8ec0ff,#9abeff,#a6bbff,#b3b8ff,#bfb5ff,#ccb3ff,#d9b0ff,#e6adff,#f4aaff,#ffa6fc,#ff9aef,#ff90e4,#ff87d9,#ff7ecf,#ff76c5,#ff6fbd,#ff68b5,#ff61ad,#ff5ca6,#ff56a0,#ff5199,#ff4c94,#ff478e,#ff4389,#ff3f84,#ff3b80,#ff387b,#ff3477,#ff3174,#ff2e70,#ff2b6c,#ff2969,#ff2666,#ff2463,#ff2160,#ff1f5d,#ff1d5a,#ff1b58,#ff1955,#ff1753,#ff1651,#ff144f,#ff124d,#ff114b,#ff0f49,#ff0e47,#ff0d45,#ff0c43,#ff0a42,#ff0940,#ff083f,#ff073d,#ff063c,#ff053a,#ff0439,#ff0338,#ff0336,#ff0235,#ff0134,#ff0133,#ff0032,#ff0031,#ff0030,#ff002e,#ff002d,#ff002d,#ff002c,#ff002b,#ff002a,#ff0029,#ff0028,#ff0027,#ff0026,#ff0026,#ff0025,#ff0024,#ff0023,#ff0023,#f02,#ff0021,#ff0021,#ff0020,#ff001f,#ff001f,#ff001e,#ff001e,#ff001d,#ff001c,#ff001c,#ff001b,#ff001b,#ff001a,#ff001a,#ff0019,#ff0019,#ff0018,#ff0018,#ff0017,#ff0017)"></i><i style="left:19.2px;top:146px;width:688px;height:2.3px;background:linear-gradient(90deg,#00ffe6,#00ffe8,#00ffea,#00ffeb,#00ffed,#00ffef,#00fff1,#00fff3,#00fff5,#00fff7,#00fff9,#00fffb,#00fffd,#0ff,#00fcff,#00faff,#00f8ff,#00f6ff,#00f3ff,#00f1ff,#00efff,#00ecff,#00eaff,#00e8ff,#00e5ff,#00e3ff,#00e0ff,#05deff,#0cdcff,#14d9ff,#1dd7ff,#26d4ff,#2fd2ff,#38cfff,#42ccff,#4ccaff,#57c7ff,#61c5ff,#6cc2ff,#77bfff,#82bdff,#8ebaff,#9ab7ff,#a6b5ff,#b2b2ff,#beafff,#cbacff,#d8aaff,#e5a7ff,#f2a4ff,#ffa1fe,#ff96f1,#ff8ce5,#ff83da,#ff7ad0,#ff72c7,#ff6bbe,#ff65b6,#ff5eaf,#ff59a8,#ff53a1,#ff4e9b,#ff4995,#ff4590,#ff418b,#ff3d86,#ff3981,#ff367d,#ff3379,#ff2f75,#ff2c71,#ff2a6e,#ff276a,#ff2567,#ff2264,#ff2061,#ff1e5e,#ff1c5c,#ff1a59,#ff1857,#ff1654,#ff1452,#ff1350,#ff114e,#ff104c,#ff0e4a,#ff0d48,#ff0c46,#ff0b44,#ff0943,#ff0841,#ff0740,#ff063e,#ff053d,#ff043b,#ff033a,#ff0339,#ff0237,#ff0136,#ff0135,#ff0034,#f03,#ff0031,#ff0030,#ff002f,#ff002e,#ff002d,#ff002c,#ff002b,#ff002b,#ff002a,#ff0029,#ff0028,#ff0027,#ff0026,#ff0026,#ff0025,#ff0024,#ff0023,#ff0023,#f02,#ff0021,#ff0021,#ff0020,#ff001f,#ff001f,#ff001e,#ff001e,#ff001d,#ff001d,#ff001c,#ff001b,#ff001b,#ff001a,#ff001a,#ff0019,#ff0019,#ff0018,#ff0018)"></i><i style="left:20.2px;top:148px;width:685px;height:2.3px;background:linear-gradient(90deg,#00ffec,#0fe,#00ffef,#00fff1,#00fff3,#00fff5,#00fff7,#00fff9,#00fffb,#00fffd,#0ff,#00fdff,#00faff,#00f8ff,#00f6ff,#00f4ff,#00f1ff,#00efff,#00edff,#00ebff,#00e8ff,#00e6ff,#00e4ff,#00e1ff,#00dfff,#00dcff,#00daff,#06d8ff,#0ed5ff,#16d3ff,#1ed0ff,#27ceff,#30cbff,#39c9ff,#43c6ff,#4dc4ff,#57c1ff,#62bfff,#6cbcff,#77b9ff,#82b7ff,#8eb4ff,#99b1ff,#a5afff,#b1acff,#bea9ff,#caa6ff,#d7a4ff,#e4a1ff,#f19eff,#fe9bff,#ff91f3,#ff88e7,#ff7fdc,#ff76d2,#ff6fc9,#ff68c0,#ff61b8,#ff5bb0,#ff56a9,#ff50a3,#ff4c9d,#ff4797,#ff4391,#ff3f8c,#ff3b87,#ff3783,#ff347e,#ff317a,#ff2e76,#ff2b73,#ff286f,#ff256c,#ff2368,#ff2165,#ff1e62,#ff1c60,#ff1a5d,#ff185a,#ff1758,#ff1556,#ff1353,#ff1251,#ff104f,#ff0f4d,#ff0d4b,#ff0c49,#ff0b47,#ff0a46,#ff0844,#ff0742,#ff0641,#ff053f,#ff043e,#ff043c,#ff033b,#ff023a,#ff0138,#ff0137,#ff0036,#ff0035,#f03,#ff0032,#ff0031,#ff0030,#ff002f,#ff002e,#ff002d,#ff002c,#ff002b,#ff002a,#ff002a,#ff0029,#ff0028,#ff0027,#ff0026,#ff0026,#ff0025,#ff0024,#ff0023,#ff0023,#f02,#ff0021,#ff0021,#ff0020,#ff001f,#ff001f,#ff001e,#ff001e,#ff001d,#ff001d,#ff001c,#ff001c,#ff001b,#ff001b,#ff001a,#ff001a,#ff0019)"></i><i style="left:20.2px;top:150px;width:683px;height:2.3px;background:linear-gradient(90deg,#00fff1,#00fff3,#00fff5,#00fff7,#00fff9,#00fffb,#00fffd,#0ff,#00fdff,#00fbff,#00f9ff,#00f7ff,#00f5ff,#00f2ff,#00f0ff,#0ef,#00ecff,#00eaff,#00e7ff,#00e5ff,#00e3ff,#00e0ff,#00deff,#00dcff,#00daff,#00d7ff,#00d5ff,#05d2ff,#0cd0ff,#14ceff,#1ccbff,#24c9ff,#2dc6ff,#36c4ff,#40c1ff,#49bfff,#53bcff,#5ebaff,#68b7ff,#73b4ff,#7eb2ff,#89afff,#94adff,#a0aaff,#aba7ff,#b7a5ff,#c3a2ff,#d09fff,#dc9cff,#e99aff,#f697ff,#ff92fb,#ff88ef,#ff7fe3,#ff77d9,#ff6fcf,#ff68c6,#ff62be,#ff5bb6,#ff56af,#ff51a8,#ff4ca2,#ff479c,#ff4396,#ff3f91,#ff3b8c,#ff3787,#ff3482,#ff317e,#ff2d7a,#ff2b76,#ff2873,#ff256f,#ff236c,#ff2069,#ff1e66,#ff1c63,#ff1a60,#ff185d,#ff165b,#ff1558,#ff1356,#ff1154,#ff1052,#ff0f4f,#ff0d4d,#ff0c4b,#ff0b4a,#ff0948,#ff0846,#ff0744,#ff0643,#ff0541,#ff0440,#ff033e,#ff033d,#ff023b,#ff013a,#ff0139,#ff0038,#ff0036,#ff0035,#ff0034,#f03,#ff0032,#ff0031,#ff0030,#ff002f,#ff002e,#ff002d,#ff002c,#ff002b,#ff002a,#ff0029,#ff0029,#ff0028,#ff0027,#ff0026,#ff0025,#ff0025,#ff0024,#ff0023,#ff0023,#f02,#ff0021,#ff0021,#ff0020,#ff001f,#ff001f,#ff001e,#ff001e,#ff001d,#ff001d,#ff001c,#ff001c,#ff001b,#ff001b,#ff001a)"></i><i style="left:21.2px;top:152px;width:680px;height:2.3px;background:linear-gradient(90deg,#00fff7,#00fff9,#00fffa,#00fffc,#00fffe,#00fdff,#00fbff,#00f9ff,#00f7ff,#00f5ff,#00f3ff,#00f1ff,#00efff,#00ecff,#00eaff,#00e8ff,#00e6ff,#00e4ff,#00e1ff,#00dfff,#0df,#00daff,#00d8ff,#00d6ff,#00d4ff,#00d1ff,#00cfff,#06ccff,#0dcaff,#15c8ff,#1dc5ff,#25c3ff,#2ec0ff,#37beff,#41bbff,#4ab9ff,#54b6ff,#5eb4ff,#68b1ff,#73afff,#7eacff,#89aaff,#94a7ff,#9fa4ff,#aba2ff,#b79fff,#c39cff,#cf9aff,#db97ff,#e894ff,#f591ff,#ff8dfd,#ff84f0,#ff7be5,#ff73da,#ff6cd1,#ff65c8,#ff5ebf,#ff58b8,#ff53b0,#ff4eaa,#ff49a3,#ff459d,#ff4097,#ff3c92,#ff398d,#ff3588,#ff3284,#ff2f80,#ff2c7b,#ff2978,#ff2674,#ff2470,#ff216d,#ff1f6a,#ff1d67,#ff1b64,#ff1961,#ff175e,#ff155c,#ff1359,#ff1257,#ff1055,#ff0f53,#ff0d51,#ff0c4f,#ff0b4d,#ff0a4b,#ff0949,#ff0747,#ff0645,#ff0544,#ff0442,#ff0441,#ff033f,#ff023e,#ff013c,#ff013b,#ff003a,#ff0038,#ff0037,#ff0036,#ff0035,#ff0034,#f03,#ff0032,#ff0031,#ff0030,#ff002f,#ff002e,#ff002d,#ff002c,#ff002b,#ff002a,#ff0029,#ff0028,#ff0028,#ff0027,#ff0026,#ff0025,#ff0025,#ff0024,#ff0023,#ff0023,#f02,#ff0021,#ff0021,#ff0020,#ff0020,#ff001f,#ff001e,#ff001e,#ff001d,#ff001d,#ff001c,#ff001c,#ff001b)"></i><i style="left:22.2px;top:154px;width:677px;height:2.3px;background:linear-gradient(90deg,#00fffc,#00fffe,#00feff,#00fcff,#00faff,#00f8ff,#00f6ff,#00f3ff,#00f1ff,#00efff,#00edff,#00ebff,#00e9ff,#00e7ff,#00e5ff,#00e2ff,#00e0ff,#00deff,#00dcff,#00daff,#00d7ff,#00d5ff,#00d3ff,#00d0ff,#00ceff,#0cf,#00caff,#06c7ff,#0dc5ff,#14c2ff,#1cc0ff,#24beff,#2dbbff,#36b9ff,#3fb6ff,#48b4ff,#52b1ff,#5cafff,#66acff,#70aaff,#7ba7ff,#85a5ff,#90a2ff,#9ba0ff,#a79dff,#b29aff,#be98ff,#ca95ff,#d693ff,#e290ff,#ee8dff,#fb8aff,#ff83f6,#ff7aeb,#ff72e0,#ff6bd6,#ff64cd,#ff5ec4,#ff58bc,#ff52b5,#ff4dae,#ff49a8,#ff44a1,#ff409c,#ff3c96,#ff3891,#ff358c,#ff3187,#ff2e83,#ff2b7f,#ff287b,#ff2677,#ff2374,#ff2170,#ff1f6d,#ff1c6a,#ff1a67,#ff1864,#ff1761,#ff155f,#ff135c,#ff125a,#ff1057,#ff0f55,#ff0d53,#ff0c51,#ff0b4f,#ff094d,#ff084b,#ff0749,#ff0648,#ff0546,#ff0444,#ff0343,#ff0341,#ff0240,#ff013e,#ff003d,#ff003c,#ff003a,#ff0039,#ff0038,#ff0037,#ff0035,#ff0034,#f03,#ff0032,#ff0031,#ff0030,#ff002f,#ff002e,#ff002d,#ff002c,#ff002c,#ff002b,#ff002a,#ff0029,#ff0028,#ff0028,#ff0027,#ff0026,#ff0025,#ff0025,#ff0024,#ff0023,#ff0023,#f02,#ff0021,#ff0021,#ff0020,#ff0020,#ff001f,#ff001e,#ff001e,#ff001d,#ff001d,#ff001c)"></i><i style="left:23.2px;top:156px;width:674px;height:2.3px;background:linear-gradient(90deg,#00fcff,#00faff,#00f8ff,#00f6ff,#00f4ff,#00f2ff,#00f0ff,#0ef,#00ecff,#00eaff,#00e7ff,#00e5ff,#00e3ff,#00e1ff,#00dfff,#0df,#00dbff,#00d8ff,#00d6ff,#00d4ff,#00d2ff,#00cfff,#00cdff,#00cbff,#00c9ff,#00c6ff,#01c4ff,#07c2ff,#0ebfff,#15bdff,#1dbbff,#25b8ff,#2eb6ff,#37b3ff,#40b1ff,#49afff,#53acff,#5caaff,#66a7ff,#70a5ff,#7ba2ff,#85a0ff,#909dff,#9b9aff,#a698ff,#b295ff,#bd93ff,#c990ff,#d58dff,#e18bff,#ed88ff,#fa85ff,#ff7ff8,#ff77ec,#ff6fe2,#ff68d8,#ff61cf,#ff5bc6,#ff55be,#ff50b7,#ff4bb0,#ff46a9,#ff42a3,#ff3e9d,#ff3a98,#ff3692,#ff338d,#ff2f89,#ff2c84,#ff2980,#ff277c,#ff2478,#ff2275,#ff1f71,#ff1d6e,#ff1b6b,#ff1968,#ff1765,#ff1562,#ff1460,#ff125d,#ff105b,#ff0f58,#ff0e56,#ff0c54,#ff0b52,#ff0a50,#ff084e,#ff074c,#ff064a,#ff0549,#ff0447,#ff0345,#ff0344,#ff0242,#ff0141,#ff003f,#ff003e,#ff003c,#ff003b,#ff003a,#ff0039,#ff0037,#ff0036,#ff0035,#ff0034,#f03,#ff0032,#ff0031,#ff0030,#ff002f,#ff002e,#ff002d,#ff002c,#ff002b,#ff002b,#ff002a,#ff0029,#ff0028,#ff0027,#ff0027,#ff0026,#ff0025,#ff0025,#ff0024,#ff0023,#ff0023,#f02,#ff0021,#ff0021,#ff0020,#ff0020,#ff001f,#ff001e,#ff001e,#ff001d)"></i><i style="left:23.2px;top:158px;width:672px;height:2.3px;background:linear-gradient(90deg,#00f7ff,#00f5ff,#00f3ff,#00f1ff,#00efff,#00edff,#00ebff,#00e9ff,#00e7ff,#00e4ff,#00e2ff,#00e0ff,#00deff,#00dcff,#00daff,#00d8ff,#00d6ff,#00d3ff,#00d1ff,#00cfff,#00cdff,#00cbff,#00c8ff,#00c6ff,#00c4ff,#00c2ff,#00bfff,#06bdff,#0dbbff,#14b8ff,#1bb6ff,#23b4ff,#2cb1ff,#34afff,#3dadff,#46aaff,#4fa8ff,#59a5ff,#62a3ff,#6ca0ff,#769eff,#819bff,#8b99ff,#9696ff,#a194ff,#ac91ff,#b78fff,#c38cff,#ce8aff,#da87ff,#e684ff,#f282ff,#fe7fff,#ff77f4,#ff6fe9,#ff68de,#ff61d5,#ff5bcc,#ff55c4,#ff50bc,#ff4bb5,#ff46ae,#ff42a8,#ff3da2,#ff3a9c,#ff3697,#ff3392,#ff2f8d,#ff2c88,#ff2984,#ff2780,#ff247c,#ff2278,#ff1f75,#ff1d71,#ff1b6e,#ff196b,#ff1768,#ff1565,#ff1363,#ff1260,#ff105e,#ff0f5b,#ff0d59,#ff0c57,#ff0b54,#ff0a52,#ff0850,#ff074e,#ff064d,#ff054b,#ff0449,#ff0347,#ff0346,#ff0244,#ff0143,#ff0041,#ff0040,#ff003e,#ff003d,#ff003c,#ff003a,#ff0039,#ff0038,#ff0037,#ff0036,#ff0035,#ff0034,#f03,#ff0032,#ff0031,#ff0030,#ff002f,#ff002e,#ff002d,#ff002c,#ff002b,#ff002a,#ff002a,#ff0029,#ff0028,#ff0027,#ff0027,#ff0026,#ff0025,#ff0025,#ff0024,#ff0023,#ff0023,#f02,#ff0021,#ff0021,#ff0020,#ff0020,#ff001f,#ff001e)"></i><i style="left:24.2px;top:160px;width:669px;height:2.3px;background:linear-gradient(90deg,#00f1ff,#00efff,#00edff,#00ebff,#00e9ff,#00e7ff,#00e5ff,#00e3ff,#00e1ff,#00dfff,#0df,#00dbff,#00d9ff,#00d7ff,#00d5ff,#00d2ff,#00d0ff,#00ceff,#0cf,#00caff,#00c8ff,#00c5ff,#00c3ff,#00c1ff,#00bfff,#00bcff,#01baff,#07b8ff,#0eb6ff,#15b3ff,#1cb1ff,#24afff,#2dacff,#35aaff,#3ea8ff,#47a5ff,#50a3ff,#59a0ff,#639eff,#6d9bff,#79f,#8196ff,#8b94ff,#9692ff,#a18fff,#ab8cff,#b78aff,#c287ff,#cd85ff,#d982ff,#e580ff,#f17dff,#fd7aff,#ff73f5,#ff6bea,#ff64e0,#ff5ed6,#ff58ce,#ff52c5,#ff4dbe,#ff48b6,#ff44b0,#ff3fa9,#ff3ba3,#ff379d,#ff3498,#ff3193,#ff2d8e,#ff2a8a,#ff2885,#ff2581,#ff227d,#ff207a,#ff1e76,#ff1c73,#ff196f,#ff186c,#ff1669,#ff1466,#ff1264,#ff1161,#ff0f5f,#ff0e5c,#ff0c5a,#ff0b58,#ff0a55,#ff0953,#ff0751,#ff064f,#ff054e,#ff044c,#ff034a,#ff0348,#ff0247,#ff0145,#f04,#ff0042,#ff0041,#ff003f,#ff003e,#ff003d,#ff003b,#ff003a,#ff0039,#ff0038,#ff0037,#ff0035,#ff0034,#f03,#ff0032,#ff0031,#ff0030,#ff002f,#ff002f,#ff002e,#ff002d,#ff002c,#ff002b,#ff002a,#ff002a,#ff0029,#ff0028,#ff0027,#ff0027,#ff0026,#ff0025,#ff0024,#ff0024,#ff0023,#ff0023,#f02,#ff0021,#ff0021,#ff0020,#ff0020)"></i><i style="left:25.2px;top:162px;width:666px;height:2.3px;background:linear-gradient(90deg,#00ecff,#00eaff,#00e8ff,#00e6ff,#00e4ff,#00e2ff,#00e0ff,#00deff,#00dcff,#00daff,#00d8ff,#00d6ff,#00d4ff,#00d2ff,#00d0ff,#00cdff,#00cbff,#00c9ff,#00c7ff,#00c5ff,#00c3ff,#00c1ff,#00beff,#00bcff,#00baff,#00b8ff,#01b6ff,#07b3ff,#0db1ff,#14afff,#1cacff,#23aaff,#2ba8ff,#34a6ff,#3ca3ff,#45a1ff,#4e9eff,#579cff,#619aff,#6a97ff,#7495ff,#7e92ff,#8890ff,#928eff,#9d8bff,#a789ff,#b286ff,#bd84ff,#c881ff,#d47eff,#df7cff,#eb79ff,#f777ff,#ff72fb,#ff6bf0,#ff64e5,#ff5ddc,#ff57d3,#ff52ca,#ff4cc2,#ff48bb,#ff43b4,#ff3fad,#ff3ba7,#ff37a2,#ff339c,#ff3097,#ff2d92,#ff2a8d,#ff2789,#ff2585,#ff2281,#ff207d,#ff1d79,#ff1b76,#ff1972,#ff176f,#ff156c,#ff1469,#ff1266,#ff1064,#ff0f61,#ff0d5f,#ff0c5c,#ff0b5a,#ff0958,#ff0856,#ff0754,#ff0652,#ff0550,#ff044e,#ff034c,#ff024a,#ff0249,#ff0147,#ff0046,#f04,#ff0043,#ff0041,#ff0040,#ff003e,#ff003d,#ff003c,#ff003b,#ff0039,#ff0038,#ff0037,#ff0036,#ff0035,#ff0034,#f03,#ff0032,#ff0031,#ff0030,#ff002f,#ff002e,#ff002d,#ff002d,#ff002c,#ff002b,#ff002a,#ff0029,#ff0029,#ff0028,#ff0027,#ff0026,#ff0026,#ff0025,#ff0024,#ff0024,#ff0023,#ff0023,#f02,#ff0021,#ff0021)"></i><i style="left:26.2px;top:164px;width:663px;height:2.3px;background:linear-gradient(90deg,#00e7ff,#00e5ff,#00e3ff,#00e1ff,#00dfff,#0df,#00dbff,#00d9ff,#00d7ff,#00d5ff,#00d3ff,#00d1ff,#00cfff,#00cdff,#00caff,#00c8ff,#00c6ff,#00c4ff,#00c2ff,#00c0ff,#00beff,#00bcff,#00b9ff,#00b7ff,#00b5ff,#00b3ff,#02b1ff,#08aeff,#0eacff,#15aaff,#1da8ff,#24a5ff,#2ca3ff,#35a1ff,#3d9eff,#469cff,#4f9aff,#5897ff,#6195ff,#6a93ff,#7490ff,#7e8eff,#888bff,#9289ff,#9d86ff,#a784ff,#b281ff,#bd7fff,#c87cff,#d37aff,#de77ff,#ea75ff,#f672ff,#ff6ffd,#ff67f1,#ff60e7,#ff5add,#ff54d4,#ff4fcc,#ff4ac4,#ff45bc,#ff41b5,#ff3caf,#ff38a9,#ff35a3,#ff319d,#ff2e98,#ff2b93,#ff288f,#ff258a,#ff2386,#ff2082,#ff1e7e,#ff1c7a,#ff1a77,#ff1874,#ff1670,#ff146d,#ff126a,#ff1168,#ff0f65,#ff0e62,#ff0c60,#ff0b5d,#ff0a5b,#ff0859,#ff0757,#ff0655,#ff0553,#ff0451,#ff034f,#ff034d,#ff024b,#ff014a,#ff0048,#ff0046,#ff0045,#ff0043,#ff0042,#ff0041,#ff003f,#ff003e,#ff003d,#ff003b,#ff003a,#ff0039,#ff0038,#ff0037,#ff0036,#ff0035,#ff0034,#f03,#ff0032,#ff0031,#ff0030,#ff002f,#ff002e,#ff002d,#ff002c,#ff002c,#ff002b,#ff002a,#ff0029,#ff0029,#ff0028,#ff0027,#ff0026,#ff0026,#ff0025,#ff0024,#ff0024,#ff0023,#ff0023,#f02)"></i><i style="left:27.2px;top:166px;width:660px;height:2.3px;background:linear-gradient(90deg,#00e2ff,#00e0ff,#00deff,#00dcff,#00daff,#00d8ff,#00d6ff,#00d4ff,#00d2ff,#00d0ff,#00ceff,#0cf,#00caff,#00c8ff,#00c6ff,#00c3ff,#00c1ff,#00bfff,#00bdff,#0bf,#00b9ff,#00b7ff,#00b5ff,#00b2ff,#00b0ff,#00aeff,#03acff,#09aaff,#0fa7ff,#16a5ff,#1ea3ff,#25a1ff,#2d9eff,#359cff,#3e9aff,#4697ff,#4f95ff,#5893ff,#6190ff,#6b8eff,#748cff,#7e89ff,#8887ff,#9284ff,#9c82ff,#a77fff,#b17dff,#bc7bff,#c778ff,#d276ff,#dd73ff,#e971ff,#f46eff,#ff6bfe,#ff64f3,#ff5de8,#ff57de,#ff51d5,#ff4ccd,#ff47c5,#ff42be,#ff3eb7,#ff3ab0,#ff36aa,#ff33a4,#ff2f9f,#ff2c99,#ff2995,#ff2690,#ff248b,#ff2187,#ff1f83,#ff1c7f,#ff1a7c,#ff1878,#ff1675,#ff1572,#ff136e,#ff116b,#ff1069,#ff0e66,#ff0d63,#ff0b61,#ff0a5e,#ff095c,#ff085a,#ff0658,#ff0556,#ff0454,#ff0352,#ff0350,#ff024e,#ff014c,#ff004b,#ff0049,#ff0047,#ff0046,#f04,#ff0043,#ff0041,#ff0040,#ff003f,#ff003d,#ff003c,#ff003b,#ff003a,#ff0039,#ff0038,#ff0037,#ff0035,#ff0034,#f03,#ff0032,#ff0031,#ff0031,#ff0030,#ff002f,#ff002e,#ff002d,#ff002c,#ff002b,#ff002b,#ff002a,#ff0029,#ff0028,#ff0028,#ff0027,#ff0026,#ff0026,#ff0025,#ff0024,#ff0024,#ff0023)"></i><i style="left:27.2px;top:168px;width:658px;height:2.3px;background:linear-gradient(90deg,#0df,#00dbff,#00d9ff,#00d7ff,#00d5ff,#00d3ff,#00d1ff,#00cfff,#00cdff,#00cbff,#00c9ff,#00c7ff,#00c5ff,#00c3ff,#00c1ff,#00bfff,#00bdff,#0bf,#00b9ff,#00b7ff,#00b5ff,#00b3ff,#00b1ff,#00aeff,#00acff,#0af,#02a8ff,#08a6ff,#0ea4ff,#15a1ff,#1c9fff,#239dff,#2b9bff,#3398ff,#3b96ff,#4494ff,#4c92ff,#558fff,#5e8dff,#678bff,#7088ff,#7a86ff,#8483ff,#8d81ff,#977fff,#a27cff,#ac7aff,#b677ff,#c175ff,#cc73ff,#d770ff,#e26eff,#ed6bff,#f969ff,#ff64fa,#ff5def,#ff57e5,#ff51dc,#ff4cd3,#ff47cb,#ff42c3,#ff3ebc,#ff3ab5,#ff36af,#ff33a9,#ff2fa3,#ff2c9e,#ff2999,#ff2694,#ff248f,#ff218b,#ff1f87,#ff1c83,#ff1a7f,#ff187b,#ff1678,#ff1475,#ff1372,#ff116f,#ff0f6c,#ff0e69,#ff0c66,#ff0b64,#ff0a61,#ff095f,#ff075c,#ff065a,#ff0558,#ff0456,#ff0354,#ff0252,#ff0250,#ff014e,#ff004d,#ff004b,#ff0049,#ff0048,#ff0046,#ff0045,#ff0043,#ff0042,#ff0041,#ff003f,#ff003e,#ff003d,#ff003c,#ff003a,#ff0039,#ff0038,#ff0037,#ff0036,#ff0035,#ff0034,#f03,#ff0032,#ff0031,#ff0030,#ff002f,#ff002f,#ff002e,#ff002d,#ff002c,#ff002b,#ff002a,#ff002a,#ff0029,#ff0028,#ff0028,#ff0027,#ff0026,#ff0026,#ff0025,#ff0024)"></i><i style="left:28.2px;top:170px;width:655px;height:2.3px;background:linear-gradient(90deg,#00d8ff,#00d6ff,#00d4ff,#00d3ff,#00d1ff,#00cfff,#00cdff,#00cbff,#00c9ff,#00c7ff,#00c5ff,#00c3ff,#00c1ff,#00bfff,#00bdff,#0bf,#00b9ff,#00b7ff,#00b4ff,#00b2ff,#00b0ff,#00aeff,#00acff,#0af,#00a8ff,#00a6ff,#03a3ff,#09a1ff,#0f9fff,#169dff,#1d9bff,#2498ff,#2c96ff,#3494ff,#3c92ff,#448fff,#4d8dff,#568bff,#5e89ff,#6786ff,#7184ff,#7a82ff,#847fff,#8d7dff,#977aff,#a178ff,#ac76ff,#b673ff,#c171ff,#cb6eff,#d66cff,#e16aff,#ec67ff,#f865ff,#ff61fb,#ff5af0,#ff54e6,#ff4fdd,#ff49d4,#f4c,#ff40c4,#ff3cbd,#ff38b6,#ff34b0,#ff31aa,#ff2da4,#ff2a9f,#ff279a,#ff2495,#ff2291,#ff1f8c,#ff1d88,#ff1b84,#ff1980,#ff177d,#ff1579,#ff1376,#ff1173,#ff1070,#ff0e6d,#ff0d6a,#ff0b67,#ff0a65,#ff0962,#ff0860,#ff065d,#ff055b,#ff0459,#ff0357,#ff0355,#ff0253,#ff0151,#ff004f,#ff004e,#ff004c,#ff004a,#ff0049,#ff0047,#ff0046,#f04,#ff0043,#ff0041,#ff0040,#ff003f,#ff003e,#ff003c,#ff003b,#ff003a,#ff0039,#ff0038,#ff0037,#ff0036,#ff0035,#ff0034,#f03,#ff0032,#ff0031,#ff0030,#ff002f,#ff002e,#ff002d,#ff002d,#ff002c,#ff002b,#ff002a,#ff002a,#ff0029,#ff0028,#ff0027,#ff0027,#ff0026,#ff0026)"></i><i style="left:29.2px;top:172px;width:653px;height:2.3px;background:linear-gradient(90deg,#00d4ff,#00d2ff,#00d0ff,#00ceff,#0cf,#00caff,#00c8ff,#00c6ff,#00c4ff,#00c2ff,#00c0ff,#00beff,#00bcff,#00baff,#00b8ff,#00b6ff,#00b4ff,#00b2ff,#00b0ff,#00aeff,#00acff,#0af,#00a8ff,#00a6ff,#00a4ff,#00a2ff,#039fff,#099dff,#0f9bff,#1599ff,#1c97ff,#2495ff,#2b92ff,#3390ff,#3b8eff,#438cff,#4c89ff,#5487ff,#5d85ff,#6683ff,#6f80ff,#787eff,#817cff,#8b79ff,#9577ff,#9f75ff,#a972ff,#b370ff,#bd6eff,#c76bff,#d269ff,#d6f,#e864ff,#f362ff,#fe5fff,#ff59f5,#ff53eb,#ff4de1,#ff48d9,#ff44d0,#ff3fc8,#ff3bc1,#ff37ba,#ff33b4,#ff30ae,#ff2ca8,#ff29a2,#ff279d,#ff2498,#ff2194,#ff1f8f,#ff1c8b,#ff1a87,#ff1883,#ff167f,#ff147c,#ff1378,#ff1175,#ff0f72,#ff0e6f,#ff0c6c,#ff0b6a,#ff0a67,#ff0864,#ff0762,#ff0660,#ff055d,#ff045b,#ff0359,#ff0257,#ff0155,#ff0153,#ff0051,#ff0050,#ff004e,#ff004c,#ff004a,#ff0049,#ff0047,#ff0046,#f04,#ff0043,#ff0042,#ff0040,#ff003f,#ff003e,#ff003d,#ff003c,#ff003a,#ff0039,#ff0038,#ff0037,#ff0036,#ff0035,#ff0034,#f03,#ff0032,#ff0031,#ff0030,#ff0030,#ff002f,#ff002e,#ff002d,#ff002c,#ff002c,#ff002b,#ff002a,#ff0029,#ff0029,#ff0028,#ff0027,#ff0027)"></i><i style="left:30.2px;top:174px;width:650px;height:2.3px;background:linear-gradient(90deg,#00cfff,#00cdff,#00cbff,#00c9ff,#00c8ff,#00c6ff,#00c4ff,#00c2ff,#00c0ff,#00beff,#00bcff,#00baff,#00b8ff,#00b6ff,#00b4ff,#00b2ff,#00b0ff,#00aeff,#00acff,#0af,#00a8ff,#00a6ff,#00a4ff,#00a1ff,#009fff,#009dff,#049bff,#0a99ff,#1097ff,#1695ff,#1d93ff,#2590ff,#2c8eff,#348cff,#3c8aff,#48f,#4c85ff,#5583ff,#5d81ff,#667fff,#6f7cff,#787aff,#8278ff,#8b75ff,#9573ff,#9e71ff,#a86eff,#b26cff,#bd6aff,#c767ff,#d165ff,#dc63ff,#e760ff,#f25eff,#fd5bff,#ff56f6,#ff50ec,#ff4be3,#ff46da,#ff41d1,#ff3dca,#ff38c2,#ff35bb,#ff31b5,#ff2eaf,#ff2ba9,#ff28a4,#ff259e,#f29,#ff2095,#ff1d90,#ff1b8c,#ff1988,#ff1784,#ff1580,#ff137d,#ff117a,#ff1076,#ff0e73,#ff0d70,#ff0b6d,#ff0a6b,#ff0968,#ff0765,#ff0663,#ff0561,#ff045e,#ff035c,#ff025a,#ff0258,#ff0156,#ff0054,#ff0052,#ff0050,#ff004f,#ff004d,#ff004b,#ff004a,#ff0048,#ff0047,#ff0045,#f04,#ff0043,#ff0041,#ff0040,#ff003f,#ff003d,#ff003c,#ff003b,#ff003a,#ff0039,#ff0038,#ff0037,#ff0036,#ff0035,#ff0034,#f03,#ff0032,#ff0031,#ff0030,#ff002f,#ff002f,#ff002e,#ff002d,#ff002c,#ff002b,#ff002b,#ff002a,#ff0029,#ff0029,#ff0028)"></i><i style="left:30.2px;top:176px;width:648px;height:2.3px;background:linear-gradient(90deg,#00cbff,#00c9ff,#00c7ff,#00c5ff,#00c4ff,#00c2ff,#00c0ff,#00beff,#00bcff,#00baff,#00b8ff,#00b6ff,#00b4ff,#00b2ff,#00b0ff,#00aeff,#00acff,#0af,#00a8ff,#00a6ff,#00a4ff,#00a2ff,#00a0ff,#009eff,#009cff,#009aff,#0398ff,#0896ff,#0e93ff,#1591ff,#1c8fff,#238dff,#2a8bff,#3289ff,#3987ff,#4184ff,#4982ff,#5280ff,#5a7eff,#637cff,#6b79ff,#7477ff,#7d75ff,#8773ff,#9070ff,#9a6eff,#a36cff,#ad69ff,#b767ff,#c165ff,#cb62ff,#d660ff,#e05eff,#eb5bff,#f659ff,#ff56fd,#ff50f3,#ff4be9,#ff46e0,#ff41d7,#ff3dcf,#ff38c8,#ff35c1,#ff31ba,#ff2eb4,#ff2aae,#ff27a8,#ff25a3,#ff229e,#ff1f99,#ff1d94,#ff1b90,#ff198c,#ff1788,#ff1584,#ff1380,#ff117d,#ff0f79,#ff0e76,#ff0c73,#ff0b70,#ff0a6d,#ff086b,#ff0768,#ff0666,#ff0563,#ff0461,#ff035f,#ff025c,#ff015a,#ff0158,#ff0056,#ff0054,#ff0053,#ff0051,#ff004f,#ff004d,#ff004c,#ff004a,#ff0049,#ff0047,#ff0046,#f04,#ff0043,#ff0042,#ff0040,#ff003f,#ff003e,#ff003d,#ff003c,#ff003b,#ff0039,#ff0038,#ff0037,#ff0036,#ff0035,#ff0034,#f03,#f03,#ff0032,#ff0031,#ff0030,#ff002f,#ff002e,#ff002e,#ff002d,#ff002c,#ff002b,#ff002b,#ff002a,#ff0029)"></i><i style="left:31.2px;top:178px;width:645px;height:3.3px;background:linear-gradient(90deg,#00c6ff,#00c3ff,#00c0ff,#00bdff,#00baff,#00b7ff,#00b4ff,#00b1ff,#00aeff,#0af,#00a7ff,#00a4ff,#00a1ff,#009eff,#009aff,#0097ff,#0194ff,#0a91ff,#138dff,#1e8aff,#2a86ff,#3583ff,#4280ff,#4f7cff,#5c79ff,#6a75ff,#7872ff,#866eff,#956aff,#a467ff,#b463ff,#c35fff,#d45cff,#e458ff,#f554ff,#ff4ef8,#ff46e8,#ff3eda,#ff38cd,#ff32c2,#ff2cb8,#ff27ae,#ff23a5,#ff1f9d,#ff1b96,#ff188f,#ff1488,#ff1283,#ff0f7d,#ff0d78,#ff0a73,#ff086e,#ff066a,#ff0566,#ff0362,#ff025f,#ff015b,#ff0058,#f05,#ff0052,#ff004f,#ff004d,#ff004a,#ff0048,#ff0046,#ff0043,#ff0041,#ff003f,#ff003e,#ff003c,#ff003a,#ff0038,#ff0037,#ff0035,#ff0034,#ff0032,#ff0031,#ff0030,#ff002e,#ff002d,#ff002c,#ff002b)"></i><i style="left:33.2px;top:181px;width:640px;height:3.3px;background:linear-gradient(90deg,#00bfff,#00bcff,#00b9ff,#00b7ff,#00b4ff,#00b1ff,#00adff,#0af,#00a7ff,#00a4ff,#00a1ff,#009eff,#009bff,#0098ff,#0094ff,#0091ff,#038eff,#0c8bff,#1687ff,#2084ff,#2c81ff,#377dff,#447aff,#5076ff,#5d73ff,#6b6fff,#796cff,#8768ff,#9665ff,#a561ff,#b45eff,#c45aff,#d456ff,#e453ff,#f54fff,#ff49f8,#ff41e9,#ff3adb,#ff34ce,#ff2ec3,#ff29b9,#ff24af,#ff20a6,#ff1c9e,#ff1997,#ff1590,#ff128a,#ff1084,#ff0d7e,#ff0b79,#ff0974,#ff0770,#ff056b,#ff0367,#ff0263,#ff0160,#ff005c,#ff0059,#ff0056,#ff0053,#ff0050,#ff004e,#ff004b,#ff0049,#ff0047,#f04,#ff0042,#ff0040,#ff003e,#ff003d,#ff003b,#ff0039,#ff0038,#ff0036,#ff0035,#f03,#ff0032,#ff0030,#ff002f,#ff002e,#ff002d)"></i><i style="left:34.2px;top:184px;width:636px;height:3.3px;background:linear-gradient(90deg,#00baff,#00b7ff,#00b4ff,#00b1ff,#00aeff,#00abff,#00a8ff,#00a5ff,#00a2ff,#009fff,#009cff,#09f,#0096ff,#0093ff,#008fff,#008cff,#0289ff,#0b86ff,#1483ff,#1f7fff,#2a7cff,#3579ff,#4175ff,#4d72ff,#5a6fff,#676bff,#7468ff,#8264ff,#9061ff,#9f5dff,#ae5aff,#bd56ff,#cc53ff,#dc4fff,#ec4cff,#fd48ff,#ff41f1,#ff3ae3,#ff33d6,#ff2eca,#ff29bf,#ff24b6,#ff20ac,#ff1ca4,#ff189c,#ff1595,#ff128f,#ff0f89,#ff0d83,#ff0a7e,#ff0878,#ff0674,#ff056f,#ff036b,#ff0267,#ff0063,#ff0060,#ff005d,#ff0059,#ff0056,#ff0054,#ff0051,#ff004e,#ff004c,#ff0049,#ff0047,#ff0045,#ff0043,#ff0041,#ff003f,#ff003d,#ff003c,#ff003a,#ff0038,#ff0037,#ff0035,#ff0034,#ff0032,#ff0031,#ff0030,#ff002f)"></i><i style="left:35.2px;top:187px;width:632px;height:3.3px;background:linear-gradient(90deg,#00b4ff,#00b1ff,#00aeff,#00abff,#00a8ff,#00a5ff,#00a3ff,#00a0ff,#009dff,#009aff,#0096ff,#0093ff,#0090ff,#008dff,#008aff,#0087ff,#0384ff,#0c81ff,#157dff,#207aff,#2a77ff,#3674ff,#4270ff,#4e6dff,#5a6aff,#6766ff,#7563ff,#825fff,#905cff,#9f59ff,#ad55ff,#bc52ff,#cb4eff,#db4bff,#eb47ff,#fb44ff,#ff3df3,#ff36e5,#ff30d8,#ff2bcc,#ff26c1,#ff21b7,#ff1dae,#ff19a6,#ff169e,#ff1397,#ff1090,#ff0d8a,#ff0b84,#ff097f,#ff077a,#ff0575,#ff0371,#ff026c,#ff0168,#ff0065,#ff0061,#ff005e,#ff005b,#ff0058,#f05,#ff0052,#ff004f,#ff004d,#ff004b,#ff0048,#ff0046,#f04,#ff0042,#ff0040,#ff003e,#ff003c,#ff003b,#ff0039,#ff0038,#ff0036,#ff0035,#f03,#ff0032,#ff0031)"></i><i style="left:36.2px;top:190px;width:628px;height:3.3px;background:linear-gradient(90deg,#00afff,#00acff,#00a9ff,#00a6ff,#00a3ff,#00a0ff,#009dff,#009bff,#0098ff,#0095ff,#0092ff,#008fff,#008cff,#0089ff,#0085ff,#0082ff,#037fff,#0b7cff,#1479ff,#1e76ff,#2973ff,#346fff,#3f6cff,#4b69ff,#5766ff,#6462ff,#705fff,#7e5cff,#8b59ff,#95f,#a752ff,#b64eff,#c44bff,#d448ff,#e344ff,#f341ff,#ff3cfc,#ff36ed,#ff30df,#ff2ad3,#ff25c8,#ff21be,#ff1cb4,#ff19ac,#ff15a4,#ff129c,#ff0f95,#ff0d8f,#ff0a89,#ff0883,#ff067e,#ff0579,#ff0375,#ff0170,#ff006c,#ff0068,#ff0065,#ff0061,#ff005e,#ff005b,#ff0058,#f05,#ff0052,#ff0050,#ff004d,#ff004b,#ff0049,#ff0047,#ff0045,#ff0043,#ff0041,#ff003f,#ff003d,#ff003c,#ff003a,#ff0038,#ff0037,#ff0035,#ff0034,#f03)"></i><i style="left:38.2px;top:193px;width:623px;height:3.3px;background:linear-gradient(90deg,#00a9ff,#00a6ff,#00a3ff,#00a1ff,#009eff,#009bff,#0098ff,#0095ff,#0092ff,#008fff,#008cff,#0089ff,#0086ff,#0083ff,#0080ff,#007dff,#047aff,#0d77ff,#1674ff,#2071ff,#2b6eff,#356aff,#4167ff,#4d64ff,#5961ff,#655eff,#725aff,#7f57ff,#8c54ff,#9a50ff,#a84dff,#b64aff,#c546ff,#d443ff,#e340ff,#f23cff,#ff38fc,#ff32ed,#ff2ce0,#ff27d4,#ff22c9,#ff1ebe,#ff1ab5,#ff16ad,#ff13a5,#ff109d,#ff0d96,#ff0b90,#ff098a,#ff0784,#ff057f,#ff037a,#ff0276,#ff0071,#ff006d,#ff0069,#f06,#ff0062,#ff005f,#ff005c,#ff0059,#ff0056,#ff0053,#ff0051,#ff004e,#ff004c,#ff004a,#ff0048,#ff0045,#f04,#ff0042,#ff0040,#ff003e,#ff003c,#ff003b,#ff0039,#ff0038,#ff0036,#ff0035)"></i><i style="left:39.2px;top:196px;width:619px;height:3.3px;background:linear-gradient(90deg,#00a4ff,#00a1ff,#009fff,#009cff,#09f,#0096ff,#0093ff,#0090ff,#008eff,#008bff,#08f,#0085ff,#0082ff,#007fff,#007cff,#0079ff,#0476ff,#0c73ff,#1570ff,#1f6dff,#296aff,#3367ff,#3e64ff,#4a60ff,#555dff,#615aff,#6e57ff,#7a54ff,#8751ff,#954dff,#a24aff,#b047ff,#be44ff,#cd40ff,#db3dff,#ea3aff,#fa36ff,#ff31f5,#ff2be8,#ff26db,#ff21d0,#ff1dc5,#ff19bb,#ff16b3,#ff13aa,#ff10a3,#ff0d9c,#ff0b95,#ff088f,#ff0689,#ff0484,#ff037f,#ff017a,#ff0075,#ff0071,#ff006d,#ff0069,#f06,#ff0062,#ff005f,#ff005c,#ff0059,#ff0056,#ff0054,#ff0051,#ff004f,#ff004d,#ff004a,#ff0048,#ff0046,#f04,#ff0042,#ff0040,#ff003f,#ff003d,#ff003b,#ff003a,#ff0038,#ff0037)"></i><i style="left:40.2px;top:199px;width:615px;height:3.3px;background:linear-gradient(90deg,#009fff,#009cff,#009aff,#0097ff,#0094ff,#0091ff,#008fff,#008cff,#0089ff,#0086ff,#0083ff,#0080ff,#007dff,#007aff,#07f,#0074ff,#0571ff,#0d6eff,#166bff,#2068ff,#2a65ff,#3462ff,#3f5fff,#4a5cff,#5659ff,#6256ff,#6e53ff,#7b50ff,#874cff,#9549ff,#a246ff,#b043ff,#be40ff,#cc3cff,#da39ff,#e936ff,#f833ff,#ff2ef7,#ff28e9,#ff23dc,#ff1fd1,#ff1bc6,#ff17bd,#ff13b4,#ff10ac,#ff0ea4,#ff0b9d,#ff0996,#ff0790,#ff058a,#ff0385,#ff0280,#ff007b,#f07,#ff0072,#ff006e,#ff006b,#ff0067,#ff0064,#ff0060,#ff005d,#ff005a,#ff0057,#f05,#ff0052,#ff0050,#ff004d,#ff004b,#ff0049,#ff0047,#ff0045,#ff0043,#ff0041,#ff0040,#ff003e,#ff003c,#ff003b,#ff0039)"></i><i style="left:41.2px;top:202px;width:611px;height:3.3px;background:linear-gradient(90deg,#009aff,#0098ff,#0095ff,#0092ff,#0090ff,#008dff,#008aff,#0087ff,#0085ff,#0082ff,#007fff,#007cff,#0079ff,#0076ff,#0074ff,#0071ff,#046eff,#0c6bff,#1568ff,#1e65ff,#2862ff,#325fff,#3d5cff,#4859ff,#5356ff,#5e53ff,#6a50ff,#764dff,#8349ff,#9046ff,#9d43ff,#aa40ff,#b73dff,#c53aff,#d337ff,#e233ff,#f030ff,#ff2dff,#ff28f1,#ff23e4,#ff1ed8,#ff1acd,#ff16c3,#ff13ba,#ff10b1,#ff0daa,#ff0ba2,#ff089b,#ff0695,#ff048f,#ff038a,#ff0184,#ff007f,#ff007b,#ff0076,#ff0072,#ff006e,#ff006b,#ff0067,#ff0064,#ff0061,#ff005e,#ff005b,#ff0058,#f05,#ff0053,#ff0050,#ff004e,#ff004c,#ff004a,#ff0048,#ff0046,#f04,#ff0042,#ff0040,#ff003f,#ff003d,#ff003b)"></i><i style="left:43.2px;top:205px;width:606px;height:3.3px;background:linear-gradient(90deg,#0096ff,#0093ff,#0090ff,#008eff,#008bff,#08f,#0085ff,#0083ff,#0080ff,#007dff,#007aff,#0078ff,#0075ff,#0072ff,#006fff,#006cff,#0669ff,#0e66ff,#1763ff,#2060ff,#2a5dff,#345bff,#3e58ff,#4955ff,#5452ff,#604fff,#6c4bff,#7848ff,#8445ff,#9142ff,#9d3fff,#ab3cff,#b839ff,#c636ff,#d433ff,#e230ff,#f02dff,#ff29ff,#ff24f1,#ff1fe4,#ff1bd8,#ff17ce,#ff14c4,#f1b,#ff0eb2,#ff0baa,#ff09a3,#ff079c,#ff0596,#ff0390,#ff018a,#ff0085,#ff0080,#ff007c,#f07,#ff0073,#ff006f,#ff006b,#ff0068,#ff0065,#ff0061,#ff005e,#ff005b,#ff0059,#ff0056,#ff0054,#ff0051,#ff004f,#ff004d,#ff004a,#ff0048,#ff0046,#ff0045,#ff0043,#ff0041,#ff003f,#ff003e)"></i><i style="left:44.2px;top:208px;width:603px;height:3.3px;background:linear-gradient(90deg,#0091ff,#008fff,#008cff,#0089ff,#0087ff,#0084ff,#0081ff,#007fff,#007cff,#0079ff,#0076ff,#0074ff,#0071ff,#006eff,#006bff,#0069ff,#0566ff,#0d63ff,#1660ff,#1f5dff,#285aff,#3257ff,#3c54ff,#4751ff,#524eff,#5d4cff,#6849ff,#7446ff,#8043ff,#8c40ff,#993dff,#a63aff,#b337ff,#c033ff,#ce30ff,#db2dff,#e92aff,#f827ff,#ff23f8,#ff1feb,#ff1adf,#ff17d4,#ff13ca,#ff10c0,#ff0db8,#ff0baf,#ff08a8,#ff06a1,#ff049a,#ff0294,#ff018f,#ff0089,#ff0084,#ff007f,#ff007b,#f07,#ff0073,#ff006f,#ff006b,#ff0068,#ff0064,#ff0061,#ff005e,#ff005c,#ff0059,#ff0056,#ff0054,#ff0051,#ff004f,#ff004d,#ff004b,#ff0049,#ff0047,#ff0045,#ff0043,#ff0041,#ff0040)"></i><i style="left:45.2px;top:211px;width:599px;height:3.3px;background:linear-gradient(90deg,#008dff,#008aff,#08f,#0085ff,#0083ff,#0080ff,#007dff,#007bff,#0078ff,#0075ff,#0072ff,#0070ff,#006dff,#006aff,#0067ff,#0065ff,#0662ff,#0e5fff,#175cff,#2059ff,#2956ff,#3353ff,#3d51ff,#484eff,#524bff,#5e48ff,#6945ff,#7542ff,#803fff,#8d3cff,#9939ff,#a636ff,#b233ff,#c030ff,#cd2dff,#db2aff,#e927ff,#f724ff,#ff20f9,#ff1cec,#ff18e0,#ff14d5,#ff11cb,#ff0ec1,#ff0bb9,#ff09b1,#ff06a9,#ff04a2,#ff039c,#ff0195,#ff0090,#ff008a,#ff0085,#ff0080,#ff007c,#ff0078,#ff0074,#ff0070,#ff006c,#ff0069,#ff0065,#ff0062,#ff005f,#ff005c,#ff005a,#ff0057,#f05,#ff0052,#ff0050,#ff004e,#ff004c,#ff004a,#ff0048,#ff0046,#f04,#ff0042)"></i><i style="left:47.2px;top:214px;width:594px;height:3.3px;background:linear-gradient(90deg,#0089ff,#0086ff,#0084ff,#0081ff,#007eff,#007cff,#0079ff,#07f,#0074ff,#0071ff,#006fff,#006cff,#0069ff,#06f,#0064ff,#0061ff,#065eff,#0e5bff,#1659ff,#1f56ff,#2853ff,#3250ff,#3c4dff,#464bff,#5048ff,#5b45ff,#6642ff,#723fff,#7d3cff,#8939ff,#9537ff,#a134ff,#ae31ff,#ba2eff,#c72bff,#d528ff,#e225ff,#f022ff,#fe1fff,#ff1bf3,#ff17e6,#ff13db,#ff10d1,#ff0dc7,#ff0bbe,#ff08b6,#ff06ae,#ff04a7,#ff02a0,#ff019a,#ff0094,#ff008f,#ff0089,#ff0085,#ff0080,#ff007c,#f07,#ff0073,#ff0070,#ff006c,#ff0069,#f06,#ff0062,#ff0060,#ff005d,#ff005a,#ff0057,#f05,#ff0053,#ff0050,#ff004e,#ff004c,#ff004a,#ff0048,#ff0046,#ff0045)"></i><i style="left:48.2px;top:217px;width:590px;height:3.3px;background:linear-gradient(90deg,#0085ff,#0082ff,#0080ff,#007dff,#007aff,#0078ff,#0075ff,#0073ff,#0070ff,#006dff,#006bff,#0068ff,#0065ff,#0063ff,#0060ff,#015dff,#075bff,#0f58ff,#1755ff,#2052ff,#2950ff,#334dff,#3d4aff,#4747ff,#5144ff,#5c41ff,#673fff,#723cff,#7d39ff,#8936ff,#9533ff,#a130ff,#ae2dff,#ba2bff,#c728ff,#d425ff,#e122ff,#ef1fff,#fd1cff,#ff18f4,#ff15e7,#ff11dc,#ff0ed2,#ff0bc8,#ff09bf,#ff06b7,#ff04af,#ff03a8,#ff01a1,#ff009b,#ff0095,#ff0090,#ff008a,#ff0085,#ff0081,#ff007c,#ff0078,#ff0074,#ff0071,#ff006d,#ff006a,#f06,#ff0063,#ff0060,#ff005e,#ff005b,#ff0058,#ff0056,#ff0053,#ff0051,#ff004f,#ff004d,#ff004b,#ff0049,#ff0047)"></i><i style="left:50.2px;top:220px;width:585px;height:3.3px;background:linear-gradient(90deg,#0081ff,#007eff,#007cff,#0079ff,#07f,#0074ff,#0071ff,#006fff,#006cff,#006aff,#0067ff,#0065ff,#0062ff,#005fff,#005dff,#015aff,#0757ff,#0f55ff,#1752ff,#1f4fff,#284dff,#324aff,#3b47ff,#4544ff,#4f42ff,#5a3fff,#643cff,#6f39ff,#7a37ff,#8634ff,#9131ff,#9d2eff,#a92bff,#b529ff,#c226ff,#ce23ff,#db20ff,#e81dff,#f61bff,#ff18fb,#ff14ee,#ff10e3,#ff0dd8,#ff0bce,#ff08c5,#ff06bc,#ff04b4,#ff02ad,#ff01a6,#ff00a0,#ff009a,#ff0094,#ff008f,#ff008a,#ff0085,#ff0080,#ff007c,#ff0078,#ff0074,#ff0071,#ff006d,#ff006a,#ff0067,#ff0064,#ff0061,#ff005e,#ff005b,#ff0059,#ff0056,#ff0054,#ff0052,#ff0050,#ff004d,#ff004c,#ff004a)"></i><i style="left:51.2px;top:223px;width:581px;height:3.3px;background:linear-gradient(90deg,#007dff,#007aff,#0078ff,#0075ff,#0073ff,#0070ff,#006eff,#006bff,#0069ff,#06f,#0064ff,#0061ff,#005eff,#005cff,#0059ff,#0257ff,#0854ff,#1051ff,#184fff,#204cff,#2949ff,#3247ff,#3c44ff,#4641ff,#503eff,#5a3cff,#6539ff,#7036ff,#7b33ff,#8631ff,#912eff,#9d2bff,#a928ff,#b526ff,#c123ff,#ce20ff,#db1dff,#e81bff,#f518ff,#ff15fc,#ff11ef,#ff0ee3,#ff0bd9,#ff09cf,#ff06c6,#ff04bd,#ff02b5,#ff01ae,#ff00a7,#ff00a1,#ff009b,#ff0095,#ff0090,#ff008b,#ff0086,#ff0081,#ff007d,#ff0079,#ff0075,#ff0071,#ff006e,#ff006b,#ff0067,#ff0064,#ff0061,#ff005f,#ff005c,#ff0059,#ff0057,#f05,#ff0052,#ff0050,#ff004e,#ff004c)"></i><i style="left:52.2px;top:226px;width:577px;height:3.3px;background:linear-gradient(90deg,#0079ff,#07f,#0074ff,#0072ff,#0070ff,#006dff,#006bff,#0068ff,#06f,#0063ff,#0061ff,#005eff,#005bff,#0059ff,#0056ff,#0154ff,#0851ff,#0f4fff,#174cff,#1f49ff,#2847ff,#3144ff,#3a41ff,#433fff,#4d3cff,#5739ff,#6137ff,#6c34ff,#7731ff,#822fff,#8d2cff,#9829ff,#a427ff,#b024ff,#bc21ff,#c81fff,#d41cff,#e119ff,#ee17ff,#fb14ff,#ff11f6,#ff0eea,#ff0bdf,#ff08d5,#ff06cc,#ff04c3,#ff02bb,#ff01b3,#ff00ac,#ff00a6,#ff00a0,#ff009a,#ff0094,#ff008f,#ff008a,#ff0085,#ff0081,#ff007d,#ff0079,#ff0075,#ff0071,#ff006e,#ff006b,#ff0068,#ff0065,#ff0062,#ff005f,#ff005c,#ff005a,#ff0058,#f05,#ff0053,#ff0051,#ff004f)"></i><i style="left:54.2px;top:229px;width:572px;height:3.3px;background:linear-gradient(90deg,#0076ff,#0073ff,#0071ff,#006eff,#006cff,#0069ff,#0067ff,#0064ff,#0062ff,#005fff,#005dff,#005aff,#0058ff,#05f,#0053ff,#0350ff,#094eff,#114bff,#1848ff,#2146ff,#2943ff,#3241ff,#3b3eff,#453bff,#4f39ff,#5936ff,#6334ff,#6d31ff,#782eff,#832cff,#8e29ff,#9926ff,#a524ff,#b021ff,#bc1eff,#c81cff,#d519ff,#e116ff,#ee14ff,#fb11ff,#ff0ef6,#ff0beb,#ff09e0,#ff06d6,#ff04cc,#ff02c4,#ff01bc,#ff00b4,#ff00ad,#ff00a6,#ff00a0,#ff009a,#ff0095,#ff0090,#ff008b,#ff0086,#ff0082,#ff007d,#ff0079,#ff0076,#ff0072,#ff006f,#ff006b,#ff0068,#ff0065,#ff0062,#ff0060,#ff005d,#ff005b,#ff0058,#ff0056,#ff0054,#ff0051)"></i><i style="left:55.2px;top:232px;width:568px;height:3.3px;background:linear-gradient(90deg,#0072ff,#0070ff,#006dff,#006bff,#0068ff,#06f,#0064ff,#0061ff,#005fff,#005cff,#005aff,#0057ff,#05f,#0052ff,#0050ff,#034dff,#0a4bff,#1148ff,#1945ff,#2243ff,#2a40ff,#333eff,#3c3bff,#4638ff,#4f36ff,#5933ff,#6331ff,#6e2eff,#782bff,#8329ff,#8e26ff,#9924ff,#a521ff,#b01eff,#bc1cff,#c819ff,#d417ff,#e114ff,#ed11ff,#fa0fff,#ff0cf7,#ff09eb,#ff07e0,#ff04d6,#ff02cd,#ff01c4,#ff00bc,#ff00b5,#ff00ae,#ff00a7,#ff00a1,#ff009b,#ff0095,#ff0090,#ff008b,#ff0087,#ff0082,#ff007e,#ff007a,#ff0076,#ff0073,#ff006f,#ff006c,#ff0069,#f06,#ff0063,#ff0060,#ff005e,#ff005b,#ff0059,#ff0056,#ff0054)"></i><i style="left:57.2px;top:235px;width:563px;height:3.3px;background:linear-gradient(90deg,#006fff,#006cff,#006aff,#0067ff,#0065ff,#0063ff,#0060ff,#005eff,#005bff,#0059ff,#0057ff,#0054ff,#0052ff,#004fff,#004dff,#044aff,#0a48ff,#1145ff,#1943ff,#2140ff,#293eff,#323bff,#3b39ff,#4436ff,#4d34ff,#5731ff,#612fff,#6b2cff,#7529ff,#8027ff,#8b24ff,#9522ff,#a11fff,#ac1dff,#b71aff,#c318ff,#cf15ff,#db13ff,#e710ff,#f40eff,#ff0bfe,#ff09f2,#ff06e7,#ff04dc,#ff02d3,#ff00ca,#ff00c2,#ff00ba,#ff00b3,#ff00ac,#ff00a6,#ff00a0,#ff009a,#ff0095,#ff0090,#ff008b,#ff0086,#ff0082,#ff007e,#ff007a,#ff0076,#ff0073,#ff006f,#ff006c,#ff0069,#f06,#ff0063,#ff0061,#ff005e,#ff005c,#ff0059,#ff0057)"></i><i style="left:58.2px;top:238px;width:559px;height:3.3px;background:linear-gradient(90deg,#006bff,#0069ff,#0067ff,#0064ff,#0062ff,#0060ff,#005dff,#005bff,#0058ff,#0056ff,#0054ff,#0051ff,#004fff,#004cff,#004aff,#0447ff,#0b45ff,#1242ff,#1a40ff,#223dff,#2a3bff,#3338ff,#3c36ff,#4533ff,#4e31ff,#582eff,#622cff,#6c29ff,#7627ff,#8024ff,#8b22ff,#961fff,#a11dff,#ac1aff,#b718ff,#c315ff,#cf13ff,#db10ff,#e70eff,#f30cff,#ff09fe,#ff07f2,#ff04e7,#ff02dd,#ff01d3,#ff00cb,#ff00c2,#f0b,#ff00b3,#ff00ad,#ff00a6,#ff00a0,#ff009b,#ff0095,#ff0090,#ff008b,#ff0087,#ff0083,#ff007f,#ff007b,#f07,#ff0073,#ff0070,#ff006d,#ff006a,#ff0067,#ff0064,#ff0061,#ff005f,#ff005c,#ff005a)"></i><i style="left:60.2px;top:241px;width:554px;height:3.3px;background:linear-gradient(90deg,#0068ff,#06f,#0063ff,#0061ff,#005fff,#005cff,#005aff,#0058ff,#05f,#0053ff,#0051ff,#004eff,#004cff,#004aff,#0047ff,#0445ff,#0b42ff,#1240ff,#193dff,#213bff,#2939ff,#3236ff,#3a34ff,#4331ff,#4c2fff,#562cff,#5f2aff,#6927ff,#7325ff,#7d23ff,#8720ff,#921eff,#9d1bff,#a819ff,#b316ff,#be14ff,#c912ff,#d50fff,#e10dff,#ed0bff,#f908ff,#ff06f9,#ff04ee,#ff02e3,#ff00d9,#ff00d0,#ff00c8,#ff00c0,#ff00b9,#ff00b2,#ff00ab,#ff00a5,#ff009f,#ff009a,#ff0095,#ff0090,#ff008b,#ff0087,#ff0082,#ff007e,#ff007b,#f07,#ff0074,#ff0070,#ff006d,#ff006a,#ff0067,#ff0064,#ff0062,#ff005f,#ff005d)"></i><i style="left:61.2px;top:244px;width:551px;height:3.3px;background:linear-gradient(90deg,#0065ff,#0063ff,#0060ff,#005eff,#005cff,#005aff,#0057ff,#05f,#0053ff,#0050ff,#004eff,#004bff,#0049ff,#0047ff,#04f,#0542ff,#0c40ff,#133dff,#1a3bff,#2238ff,#2a36ff,#33f,#3b31ff,#442fff,#4d2cff,#572aff,#6027ff,#6a25ff,#7422ff,#7e20ff,#881eff,#931bff,#9e19ff,#a816ff,#b314ff,#bf12ff,#ca0fff,#d60dff,#e10bff,#ed08ff,#f906ff,#ff04f9,#ff02ed,#ff00e3,#ff00d9,#ff00d0,#ff00c8,#ff00c0,#ff00b8,#ff00b2,#ff00ab,#ff00a5,#ff009f,#ff009a,#ff0095,#ff0090,#ff008b,#ff0087,#ff0083,#ff007f,#ff007b,#f07,#ff0074,#ff0070,#ff006d,#ff006a,#ff0067,#ff0065,#ff0062,#ff005f)"></i><i style="left:63.2px;top:247px;width:546px;height:3.3px;background:linear-gradient(90deg,#0062ff,#0060ff,#005dff,#005bff,#0059ff,#0057ff,#0054ff,#0052ff,#0050ff,#004dff,#004bff,#0049ff,#0047ff,#04f,#0042ff,#063fff,#0c3dff,#133bff,#1a38ff,#2236ff,#2a34ff,#3231ff,#3a2fff,#432dff,#4c2aff,#5528ff,#5e25ff,#6823ff,#7121ff,#7b1eff,#851cff,#8f1aff,#9a17ff,#a415ff,#af13ff,#ba10ff,#c50eff,#d00cff,#db0aff,#e708ff,#f305ff,#ff03ff,#ff01f4,#ff00e9,#ff00df,#ff00d6,#ff00cd,#ff00c5,#ff00be,#ff00b7,#ff00b0,#f0a,#ff00a4,#ff009e,#f09,#ff0094,#ff008f,#ff008b,#ff0086,#ff0082,#ff007f,#ff007b,#f07,#ff0074,#ff0071,#ff006e,#ff006b,#ff0068,#ff0065,#ff0062)"></i><i style="left:64.2px;top:250px;width:542px;height:3.3px;background:linear-gradient(90deg,#005fff,#005dff,#005bff,#0058ff,#0056ff,#0054ff,#0052ff,#004fff,#004dff,#004bff,#0048ff,#0046ff,#04f,#0042ff,#013fff,#063dff,#0d3bff,#1438ff,#1b36ff,#2234ff,#2a31ff,#332fff,#3b2cff,#442aff,#4c28ff,#5525ff,#5f23ff,#6821ff,#721eff,#7c1cff,#861aff,#9017ff,#9a15ff,#a413ff,#af11ff,#ba0eff,#c50cff,#d00aff,#db08ff,#e706ff,#f304ff,#fe02ff,#ff00f4,#ff00e9,#ff00e0,#ff00d6,#ff00ce,#ff00c6,#ff00be,#ff00b7,#ff00b0,#f0a,#ff00a4,#ff009f,#f09,#ff0094,#ff0090,#ff008b,#ff0087,#ff0083,#ff007f,#ff007b,#ff0078,#ff0074,#ff0071,#ff006e,#ff006b,#ff0068,#f06)"></i><i style="left:66.2px;top:253px;width:537px;height:3.3px;background:linear-gradient(90deg,#005cff,#005aff,#0058ff,#05f,#0053ff,#0051ff,#004fff,#004dff,#004aff,#0048ff,#0046ff,#04f,#0041ff,#003fff,#013dff,#063bff,#0d38ff,#1336ff,#1a34ff,#2231ff,#2a2fff,#322dff,#3a2bff,#4228ff,#4b26ff,#5424ff,#5d21ff,#661fff,#6f1dff,#791bff,#8218ff,#8c16ff,#9614ff,#a012ff,#ab0fff,#b50dff,#c00bff,#cb09ff,#d607ff,#e105ff,#ec03ff,#f801ff,#ff00fb,#ff00f0,#ff00e6,#ff00dc,#ff00d3,#ff00cb,#ff00c4,#ff00bc,#ff00b5,#ff00af,#ff00a9,#ff00a3,#ff009e,#f09,#ff0094,#ff008f,#ff008b,#ff0087,#ff0083,#ff007f,#ff007b,#ff0078,#ff0075,#ff0071,#ff006e,#ff006c,#ff0069)"></i><i style="left:67.2px;top:256px;width:533px;height:3.3px;background:linear-gradient(90deg,#0059ff,#0057ff,#05f,#0053ff,#0051ff,#004eff,#004cff,#004aff,#0048ff,#0046ff,#0043ff,#0041ff,#003fff,#003dff,#023aff,#0738ff,#0d36ff,#1434ff,#1b31ff,#232fff,#2a2dff,#322bff,#3a28ff,#4326ff,#4b24ff,#5421ff,#5d1fff,#661dff,#701bff,#7918ff,#8316ff,#8d14ff,#9712ff,#a110ff,#ab0dff,#b50bff,#c009ff,#cb07ff,#d605ff,#e103ff,#ec01ff,#f800ff,#ff00fb,#ff00f0,#ff00e6,#f0d,#ff00d4,#f0c,#ff00c4,#ff00bd,#ff00b6,#ff00af,#ff00a9,#ff00a4,#ff009e,#f09,#ff0094,#ff0090,#ff008b,#ff0087,#ff0083,#ff007f,#ff007c,#ff0078,#ff0075,#ff0072,#ff006f,#ff006c)"></i><i style="left:69.2px;top:259px;width:528px;height:3.3px;background:linear-gradient(90deg,#0057ff,#0054ff,#0052ff,#0050ff,#004eff,#004cff,#0049ff,#0047ff,#0045ff,#0043ff,#0041ff,#003eff,#003cff,#003aff,#0338ff,#0836ff,#0f33ff,#1631ff,#1d2fff,#242dff,#2c2aff,#3428ff,#3c26ff,#4424ff,#4d21ff,#561fff,#5f1dff,#681bff,#7118ff,#7a16ff,#8414ff,#8e12ff,#9810ff,#a20dff,#ac0bff,#b609ff,#c107ff,#cc05ff,#d703ff,#e202ff,#ed00ff,#f800ff,#ff00fa,#ff00f0,#ff00e6,#ff00dc,#ff00d4,#f0c,#ff00c4,#ff00bd,#ff00b6,#ff00b0,#f0a,#ff00a4,#ff009f,#ff009a,#ff0095,#ff0090,#ff008c,#f08,#ff0084,#ff0080,#ff007c,#ff0079,#ff0075,#ff0072,#ff006f)"></i><i style="left:71.2px;top:262px;width:523px;height:3.3px;background:linear-gradient(90deg,#0054ff,#0052ff,#0050ff,#004dff,#004bff,#0049ff,#0047ff,#0045ff,#0043ff,#0041ff,#003eff,#003cff,#003aff,#0038ff,#0336ff,#0833ff,#0f31ff,#152fff,#1c2dff,#242bff,#2b29ff,#3326ff,#3b24ff,#4322ff,#4b20ff,#541eff,#5c1bff,#6519ff,#6e17ff,#7715ff,#8113ff,#8a11ff,#940fff,#9e0cff,#a80aff,#b208ff,#bc06ff,#c705ff,#d103ff,#dc01ff,#e700ff,#f200ff,#fd00ff,#ff00f6,#ff00ec,#ff00e2,#ff00d9,#ff00d1,#ff00c9,#ff00c2,#f0b,#ff00b5,#ff00ae,#ff00a9,#ff00a3,#ff009e,#f09,#ff0094,#ff0090,#ff008c,#ff0087,#ff0084,#ff0080,#ff007c,#ff0079,#ff0076,#ff0073)"></i><i style="left:72.2px;top:265px;width:519px;height:3.3px;background:linear-gradient(90deg,#0051ff,#004fff,#004dff,#004bff,#0049ff,#0047ff,#0045ff,#0042ff,#0040ff,#003eff,#003cff,#003aff,#0038ff,#0036ff,#0433ff,#0931ff,#0f2fff,#162dff,#1d2bff,#2428ff,#2c26ff,#3424ff,#3b22ff,#4420ff,#4c1eff,#541bff,#5d19ff,#6617ff,#6f15ff,#7813ff,#8111ff,#8b0fff,#940dff,#9e0bff,#a809ff,#b207ff,#bc05ff,#c703ff,#d101ff,#dc00ff,#e700ff,#f200ff,#fd00ff,#ff00f6,#ff00ec,#ff00e2,#ff00da,#ff00d1,#ff00ca,#ff00c2,#f0b,#ff00b5,#ff00af,#ff00a9,#ff00a3,#ff009e,#f09,#ff0095,#ff0090,#ff008c,#f08,#ff0084,#ff0080,#ff007d,#ff0079,#ff0076)"></i><i style="left:74.2px;top:268px;width:514px;height:3.3px;background:linear-gradient(90deg,#004fff,#004dff,#004bff,#0048ff,#0046ff,#04f,#0042ff,#0040ff,#003eff,#003cff,#003aff,#0038ff,#0036ff,#0034ff,#0431ff,#092fff,#0f2dff,#162bff,#1d29ff,#2427ff,#2b25ff,#3223ff,#3a20ff,#421eff,#4a1cff,#521aff,#5b18ff,#6416ff,#6c14ff,#7512ff,#7e10ff,#870eff,#910cff,#9a0aff,#a408ff,#ae06ff,#b804ff,#c202ff,#cc01ff,#d600ff,#e100ff,#ec00ff,#f600ff,#ff00fd,#ff00f2,#ff00e9,#ff00e0,#ff00d7,#ff00cf,#ff00c8,#ff00c1,#ff00ba,#ff00b4,#ff00ae,#ff00a8,#ff00a3,#ff009e,#f09,#ff0094,#ff0090,#ff008c,#f08,#ff0084,#ff0080,#ff007d,#ff007a)"></i><i style="left:76.2px;top:271px;width:509px;height:3.3px;background:linear-gradient(90deg,#004cff,#004aff,#0048ff,#0046ff,#04f,#0042ff,#0040ff,#003eff,#003cff,#003aff,#0037ff,#0035ff,#03f,#0031ff,#052fff,#0b2dff,#112bff,#1729ff,#1e27ff,#2525ff,#2c22ff,#3420ff,#3c1eff,#441cff,#4c1aff,#5418ff,#5c16ff,#6514ff,#6e12ff,#7610ff,#7f0eff,#890cff,#920aff,#9b08ff,#a506ff,#af04ff,#b903ff,#c301ff,#cd00ff,#d700ff,#e200ff,#ec00ff,#f700ff,#ff00fc,#ff00f2,#ff00e8,#ff00df,#ff00d7,#ff00cf,#ff00c7,#ff00c0,#ff00ba,#ff00b4,#ff00ae,#ff00a8,#ff00a3,#ff009e,#f09,#ff0094,#ff0090,#ff008c,#f08,#ff0084,#ff0081,#ff007d)"></i><i style="left:77.2px;top:274px;width:505px;height:3.3px;background:linear-gradient(90deg,#004aff,#0048ff,#0046ff,#04f,#0042ff,#0040ff,#003eff,#003cff,#003aff,#0038ff,#0036ff,#0034ff,#0031ff,#002fff,#042dff,#0a2bff,#1029ff,#1627ff,#1d25ff,#2423ff,#2b21ff,#321fff,#3a1dff,#411bff,#4919ff,#5117ff,#5a15ff,#6213ff,#6a11ff,#730fff,#7c0dff,#850bff,#8e09ff,#9707ff,#a005ff,#aa04ff,#b402ff,#bd01ff,#c700ff,#d100ff,#db00ff,#e600ff,#f000ff,#fb00ff,#ff00f9,#ff00ef,#ff00e6,#f0d,#ff00d5,#ff00cd,#ff00c6,#ff00bf,#ff00b9,#ff00b3,#ff00ad,#ff00a8,#ff00a2,#ff009d,#f09,#ff0094,#ff0090,#ff008c,#f08,#ff0084,#ff0081)"></i><i style="left:79.2px;top:277px;width:501px;height:3.3px;background:linear-gradient(90deg,#0047ff,#0045ff,#0043ff,#0041ff,#003fff,#003dff,#003bff,#0039ff,#0037ff,#0035ff,#03f,#0031ff,#002fff,#012dff,#062bff,#0b29ff,#1127ff,#1825ff,#1f23ff,#2521ff,#2d1fff,#341dff,#3b1bff,#4319ff,#4b17ff,#5315ff,#5b13ff,#6411ff,#6c0fff,#750dff,#7e0bff,#8709ff,#9007ff,#9905ff,#a204ff,#ac02ff,#b501ff,#bf00ff,#c900ff,#d300ff,#d0f,#e700ff,#f200ff,#fc00ff,#ff00f7,#f0e,#ff00e4,#ff00dc,#ff00d4,#f0c,#ff00c5,#ff00be,#ff00b8,#ff00b2,#ff00ac,#ff00a7,#ff00a2,#ff009d,#ff0098,#ff0094,#ff0090,#ff008c,#f08,#ff0084)"></i><i style="left:81.2px;top:280px;width:496px;height:3.3px;background:linear-gradient(90deg,#0045ff,#0043ff,#0041ff,#003fff,#003dff,#003bff,#0039ff,#0037ff,#0035ff,#03f,#0031ff,#002fff,#002dff,#022bff,#0729ff,#0d27ff,#1325ff,#1923ff,#2021ff,#271fff,#2e1dff,#351bff,#3d19ff,#4517ff,#4c15ff,#5413ff,#5d11ff,#650fff,#6d0dff,#760bff,#7f09ff,#8807ff,#9106ff,#9a04ff,#a302ff,#ad01ff,#b600ff,#c000ff,#ca00ff,#d400ff,#de00ff,#e800ff,#f200ff,#fd00ff,#ff00f7,#ff00ed,#ff00e4,#ff00db,#ff00d4,#f0c,#ff00c5,#ff00be,#ff00b8,#ff00b2,#ff00ac,#ff00a7,#ff00a2,#ff009d,#ff0098,#ff0094,#ff0090,#ff008c,#f08)"></i><i style="left:82.2px;top:283px;width:492px;height:3.3px;background:linear-gradient(90deg,#0043ff,#0041ff,#003fff,#003dff,#003bff,#0039ff,#0037ff,#0035ff,#03f,#0031ff,#002fff,#002dff,#002bff,#0229ff,#0727ff,#0c25ff,#1223ff,#1821ff,#1f1fff,#261eff,#2d1cff,#341aff,#3b18ff,#4316ff,#4a14ff,#5212ff,#5a10ff,#620eff,#6a0cff,#730aff,#7b09ff,#8407ff,#8d05ff,#9603ff,#9f02ff,#a800ff,#b100ff,#b0f,#c400ff,#ce00ff,#d800ff,#e200ff,#ec00ff,#f600ff,#ff00fe,#ff00f4,#ff00ea,#ff00e2,#ff00d9,#ff00d2,#ff00ca,#ff00c4,#ff00bd,#ff00b7,#ff00b1,#ff00ac,#ff00a7,#ff00a2,#ff009d,#ff0098,#ff0094,#ff0090,#ff008c)"></i><i style="left:84.2px;top:286px;width:487px;height:3.3px;background:linear-gradient(90deg,#0041ff,#003fff,#003dff,#003bff,#0039ff,#0037ff,#0035ff,#03f,#0031ff,#002fff,#002dff,#002bff,#0029ff,#0327ff,#0825ff,#0d23ff,#1321ff,#1a1fff,#201dff,#271cff,#2e1aff,#3518ff,#3c16ff,#4414ff,#4c12ff,#5310ff,#5b0eff,#630cff,#6c0aff,#7409ff,#7d07ff,#8505ff,#8e03ff,#9702ff,#a001ff,#a900ff,#b200ff,#bc00ff,#c500ff,#cf00ff,#d900ff,#e300ff,#ed00ff,#f700ff,#ff00fd,#ff00f3,#ff00ea,#ff00e1,#ff00d9,#ff00d1,#ff00ca,#ff00c3,#ff00bd,#ff00b7,#ff00b1,#ff00ac,#ff00a6,#ff00a2,#ff009d,#ff0098,#ff0094,#ff0090)"></i><i style="left:86.2px;top:289px;width:482px;height:3.3px;background:linear-gradient(90deg,#003fff,#003dff,#003bff,#0039ff,#0037ff,#0035ff,#03f,#0031ff,#002fff,#002dff,#002bff,#0029ff,#0028ff,#0326ff,#0824ff,#0d22ff,#1320ff,#191eff,#201cff,#261aff,#2d18ff,#3416ff,#3b15ff,#4213ff,#4a11ff,#510fff,#590dff,#610bff,#690aff,#7108ff,#7a06ff,#8204ff,#8b03ff,#9301ff,#9c00ff,#a500ff,#ae00ff,#b700ff,#c000ff,#ca00ff,#d300ff,#d0f,#e700ff,#f100ff,#fb00ff,#ff00f9,#ff00f0,#ff00e7,#ff00df,#ff00d7,#ff00d0,#ff00c9,#ff00c2,#ff00bc,#ff00b6,#ff00b0,#ff00ab,#ff00a6,#ff00a1,#ff009d,#ff0098,#ff0094)"></i><i style="left:87.2px;top:292px;width:478px;height:3.3px;background:linear-gradient(90deg,#003dff,#003bff,#0039ff,#0037ff,#0035ff,#03f,#0031ff,#002fff,#002dff,#002bff,#002aff,#0028ff,#0026ff,#0324ff,#0822ff,#0e20ff,#141eff,#1a1cff,#201aff,#2718ff,#2e17ff,#3515ff,#3c13ff,#4311ff,#4b0fff,#520dff,#5a0cff,#620aff,#6a08ff,#7206ff,#7a05ff,#8303ff,#8b02ff,#9400ff,#9d00ff,#a600ff,#af00ff,#b800ff,#c100ff,#ca00ff,#d400ff,#d0f,#e700ff,#f100ff,#fb00ff,#ff00f9,#ff00f0,#ff00e7,#ff00df,#ff00d7,#ff00d0,#ff00c9,#ff00c2,#ff00bc,#ff00b6,#ff00b0,#ff00ab,#ff00a6,#ff00a1,#ff009d,#ff0098)"></i><i style="left:89.2px;top:295px;width:473px;height:3.3px;background:linear-gradient(90deg,#003bff,#0039ff,#0037ff,#0035ff,#03f,#0031ff,#002fff,#002eff,#002cff,#002aff,#0028ff,#0026ff,#0024ff,#0322ff,#0820ff,#0e1fff,#141dff,#1a1bff,#2019ff,#2617ff,#2d15ff,#3414ff,#3b12ff,#4210ff,#490eff,#500cff,#580bff,#6009ff,#6707ff,#6f06ff,#7704ff,#8003ff,#8801ff,#9000ff,#90f,#a200ff,#a0f,#b300ff,#bc00ff,#c500ff,#cf00ff,#d800ff,#e100ff,#eb00ff,#f500ff,#fe00ff,#ff00f6,#ff00ed,#ff00e5,#f0d,#ff00d5,#ff00ce,#ff00c7,#ff00c1,#f0b,#ff00b5,#ff00b0,#ff00ab,#ff00a6,#ff00a1,#ff009d)"></i><i style="left:91.2px;top:298px;width:468px;height:3.3px;background:linear-gradient(90deg,#0038ff,#0037ff,#0035ff,#03f,#0031ff,#002fff,#002dff,#002cff,#002aff,#0028ff,#0026ff,#0024ff,#02f,#0520ff,#0a1fff,#0f1dff,#151bff,#1b19ff,#2117ff,#2815ff,#2e14ff,#3512ff,#3c10ff,#430eff,#4a0dff,#520bff,#5909ff,#6107ff,#6906ff,#7104ff,#7903ff,#8101ff,#8900ff,#9200ff,#9a00ff,#a300ff,#ab00ff,#b400ff,#bd00ff,#c600ff,#d000ff,#d900ff,#e200ff,#ec00ff,#f500ff,#f0f,#ff00f5,#ff00ec,#ff00e4,#ff00dc,#ff00d5,#ff00ce,#ff00c7,#ff00c1,#f0b,#ff00b5,#ff00b0,#ff00ab,#ff00a6,#ff00a1)"></i><i style="left:93.2px;top:301px;width:463px;height:3.3px;background:linear-gradient(90deg,#0036ff,#0035ff,#03f,#0031ff,#002fff,#002dff,#002bff,#002aff,#0028ff,#0026ff,#0024ff,#02f,#0120ff,#061fff,#0b1dff,#101bff,#1619ff,#1c17ff,#2216ff,#2914ff,#3012ff,#3610ff,#3d0eff,#440dff,#4c0bff,#5309ff,#5b08ff,#6206ff,#6a04ff,#7203ff,#7a01ff,#8200ff,#8a00ff,#9300ff,#9b00ff,#a400ff,#ad00ff,#b500ff,#be00ff,#c700ff,#d100ff,#da00ff,#e300ff,#ed00ff,#f600ff,#ff00fe,#ff00f4,#ff00ec,#ff00e3,#ff00dc,#ff00d4,#ff00cd,#ff00c7,#ff00c0,#ff00ba,#ff00b5,#ff00af,#f0a,#ff00a5)"></i><i style="left:94.2px;top:304px;width:459px;height:3.3px;background:linear-gradient(90deg,#0035ff,#03f,#0031ff,#002fff,#002eff,#002cff,#002aff,#0028ff,#0026ff,#0025ff,#0023ff,#0021ff,#011fff,#051dff,#0a1cff,#101aff,#1518ff,#1b16ff,#2115ff,#2813ff,#2e11ff,#350fff,#3b0eff,#420cff,#4a0aff,#5109ff,#5807ff,#6005ff,#6704ff,#6f02ff,#7701ff,#7f00ff,#8700ff,#8f00ff,#9700ff,#9f00ff,#a800ff,#b100ff,#b900ff,#c200ff,#cb00ff,#d400ff,#d0f,#e600ff,#f000ff,#f900ff,#ff00fb,#ff00f2,#ff00ea,#ff00e2,#ff00da,#ff00d3,#f0c,#ff00c6,#ff00c0,#ff00ba,#ff00b4,#ff00af,#f0a)"></i><i style="left:96.2px;top:307px;width:454px;height:3.3px;background:linear-gradient(90deg,#03f,#0031ff,#002fff,#002dff,#002cff,#002aff,#0028ff,#0026ff,#0025ff,#0023ff,#0021ff,#001fff,#021dff,#061cff,#0b1aff,#1118ff,#1716ff,#1c15ff,#2313ff,#2911ff,#2f0fff,#360eff,#3d0cff,#440aff,#4b09ff,#5207ff,#5906ff,#6104ff,#6803ff,#7001ff,#7800ff,#8000ff,#80f,#9000ff,#9800ff,#a100ff,#a900ff,#b200ff,#ba00ff,#c300ff,#c0f,#d500ff,#de00ff,#e700ff,#f100ff,#fa00ff,#ff00fa,#ff00f1,#ff00e9,#ff00e1,#ff00d9,#ff00d2,#f0c,#ff00c5,#ff00bf,#ff00b9,#ff00b4,#ff00af)"></i><i style="left:98.2px;top:310px;width:449px;height:3.3px;background:linear-gradient(90deg,#0031ff,#002fff,#002dff,#002cff,#002aff,#0028ff,#0026ff,#0025ff,#0023ff,#0021ff,#0020ff,#001eff,#021cff,#061aff,#0b19ff,#1117ff,#1615ff,#1c13ff,#2212ff,#2810ff,#2e0eff,#350dff,#3c0bff,#4209ff,#4908ff,#5006ff,#5705ff,#5f03ff,#6602ff,#6d01ff,#7500ff,#7d00ff,#8500ff,#8d00ff,#9500ff,#9d00ff,#a500ff,#ad00ff,#b600ff,#be00ff,#c700ff,#d000ff,#d900ff,#e200ff,#eb00ff,#f400ff,#fd00ff,#ff00f8,#ff00ef,#ff00e7,#ff00df,#ff00d8,#ff00d1,#ff00cb,#ff00c4,#ff00bf,#ff00b9,#ff00b4)"></i><i style="left:100.2px;top:313px;width:445px;height:3.3px;background:linear-gradient(90deg,#002fff,#002dff,#002cff,#002aff,#0028ff,#0026ff,#0025ff,#0023ff,#0021ff,#0020ff,#001eff,#001cff,#031aff,#0819ff,#0d17ff,#1215ff,#1813ff,#1d12ff,#2310ff,#2a0eff,#300dff,#370bff,#3d0aff,#4408ff,#4b06ff,#5205ff,#5903ff,#6002ff,#6801ff,#6f00ff,#70f,#7f00ff,#8600ff,#8e00ff,#9600ff,#9f00ff,#a700ff,#af00ff,#b800ff,#c000ff,#c900ff,#d200ff,#db00ff,#e400ff,#ed00ff,#f600ff,#f0f,#ff00f6,#ff00ed,#ff00e5,#ff00de,#ff00d7,#ff00d0,#ff00c9,#ff00c3,#ff00bd,#ff00b8)"></i><i style="left:102.2px;top:316px;width:440px;height:3.3px;background:linear-gradient(90deg,#002dff,#002cff,#002aff,#0028ff,#0026ff,#0025ff,#0023ff,#0021ff,#0020ff,#001eff,#001cff,#001aff,#0419ff,#0917ff,#0e15ff,#1314ff,#1912ff,#1f10ff,#250fff,#2b0dff,#310bff,#380aff,#3f08ff,#4507ff,#4c05ff,#5304ff,#5a02ff,#6201ff,#6900ff,#7100ff,#7800ff,#8000ff,#80f,#9000ff,#9800ff,#a000ff,#a800ff,#b000ff,#b900ff,#c100ff,#ca00ff,#d300ff,#dc00ff,#e500ff,#e0f,#f700ff,#ff00fe,#ff00f5,#ff00ec,#ff00e4,#f0d,#ff00d6,#ff00cf,#ff00c9,#ff00c3,#ff00bd)"></i><i style="left:103.2px;top:319px;width:436px;height:3.3px;background:linear-gradient(90deg,#002cff,#002aff,#0028ff,#0027ff,#0025ff,#0023ff,#02f,#0020ff,#001eff,#001dff,#001bff,#0019ff,#0418ff,#0816ff,#0d14ff,#1213ff,#1811ff,#1e0fff,#240eff,#2a0cff,#300bff,#3609ff,#3d07ff,#4306ff,#4a05ff,#5103ff,#5802ff,#5f01ff,#60f,#6e00ff,#7500ff,#7c00ff,#8400ff,#8c00ff,#9400ff,#9c00ff,#a400ff,#ac00ff,#b400ff,#bc00ff,#c500ff,#cd00ff,#d600ff,#df00ff,#e700ff,#f000ff,#f900ff,#ff00fc,#ff00f3,#ff00eb,#ff00e3,#ff00dc,#ff00d5,#ff00ce,#ff00c8,#ff00c2)"></i><i style="left:105.2px;top:322px;width:431px;height:3.3px;background:linear-gradient(90deg,#002aff,#0028ff,#0027ff,#0025ff,#0023ff,#02f,#0020ff,#001eff,#001dff,#001bff,#0019ff,#0118ff,#0516ff,#0914ff,#0e13ff,#1411ff,#1910ff,#1f0eff,#250cff,#2b0bff,#3109ff,#3808ff,#3e06ff,#4505ff,#4b03ff,#5202ff,#5901ff,#6000ff,#6800ff,#6f00ff,#7600ff,#7e00ff,#8500ff,#8d00ff,#9500ff,#9d00ff,#a500ff,#ad00ff,#b500ff,#be00ff,#c600ff,#cf00ff,#d700ff,#e000ff,#e900ff,#f200ff,#fb00ff,#ff00fa,#ff00f2,#ff00ea,#ff00e2,#ff00db,#ff00d4,#ff00ce,#ff00c7)"></i><i style="left:107.2px;top:325px;width:426px;height:3.3px;background:linear-gradient(90deg,#0029ff,#0027ff,#0025ff,#0024ff,#02f,#0020ff,#001fff,#001dff,#001bff,#001aff,#0018ff,#0116ff,#0515ff,#0913ff,#0e12ff,#1310ff,#190fff,#1e0dff,#240bff,#2a0aff,#3008ff,#3607ff,#3d05ff,#4304ff,#4a03ff,#5001ff,#5700ff,#5e00ff,#6500ff,#6c00ff,#7300ff,#7b00ff,#8200ff,#8a00ff,#9100ff,#90f,#a100ff,#a900ff,#b100ff,#b900ff,#c100ff,#c900ff,#d200ff,#da00ff,#e300ff,#eb00ff,#f400ff,#fd00ff,#ff00f8,#ff00f0,#ff00e8,#ff00e1,#ff00da,#ff00d3,#ff00cd)"></i><i style="left:109.2px;top:328px;width:421px;height:3.3px;background:linear-gradient(90deg,#0027ff,#0025ff,#0024ff,#02f,#0020ff,#001fff,#001dff,#001bff,#001aff,#0018ff,#0017ff,#0215ff,#0613ff,#0a12ff,#0f10ff,#150fff,#1a0dff,#200cff,#250aff,#2b09ff,#3107ff,#3806ff,#3e04ff,#4403ff,#4b02ff,#5200ff,#5900ff,#5f00ff,#60f,#6e00ff,#7500ff,#7c00ff,#8400ff,#8b00ff,#9300ff,#9a00ff,#a200ff,#a0f,#b200ff,#ba00ff,#c200ff,#cb00ff,#d300ff,#db00ff,#e400ff,#ed00ff,#f500ff,#fe00ff,#ff00f7,#ff00ef,#ff00e7,#ff00e0,#ff00d9,#ff00d2)"></i><i style="left:111.2px;top:331px;width:416px;height:3.3px;background:linear-gradient(90deg,#0025ff,#0024ff,#02f,#0020ff,#001fff,#001dff,#001cff,#001aff,#0018ff,#0017ff,#0015ff,#0214ff,#0712ff,#0b10ff,#100fff,#160dff,#1b0cff,#210aff,#2709ff,#2d07ff,#3306ff,#3904ff,#3f03ff,#4602ff,#4c01ff,#5300ff,#5a00ff,#6100ff,#6800ff,#6f00ff,#7600ff,#7d00ff,#8500ff,#8c00ff,#9400ff,#9c00ff,#a300ff,#ab00ff,#b300ff,#b0f,#c400ff,#c0f,#d400ff,#d0f,#e500ff,#e0f,#f700ff,#f0f,#ff00f6,#f0e,#ff00e6,#ff00df,#ff00d8)"></i><i style="left:112.2px;top:334px;width:412px;height:3.3px;background:linear-gradient(90deg,#0024ff,#02f,#0021ff,#001fff,#001eff,#001cff,#001aff,#0019ff,#0017ff,#0016ff,#0014ff,#0213ff,#0611ff,#0b10ff,#100eff,#150cff,#1a0bff,#200aff,#2508ff,#2b07ff,#3105ff,#3704ff,#3d03ff,#4401ff,#4a00ff,#5100ff,#5700ff,#5e00ff,#6500ff,#6c00ff,#7300ff,#7a00ff,#8100ff,#8900ff,#9000ff,#9800ff,#9f00ff,#a700ff,#af00ff,#b600ff,#be00ff,#c600ff,#cf00ff,#d700ff,#df00ff,#e800ff,#f000ff,#f900ff,#ff00fd,#ff00f4,#ff00ed,#ff00e5,#ff00de)"></i><i style="left:114.2px;top:337px;width:407px;height:3.3px;background:linear-gradient(90deg,#02f,#0021ff,#001fff,#001eff,#001cff,#001bff,#0019ff,#0017ff,#0016ff,#0014ff,#0013ff,#0311ff,#0710ff,#0c0eff,#110dff,#160bff,#1b0aff,#2108ff,#2707ff,#2d05ff,#3204ff,#3903ff,#3f02ff,#4500ff,#4c00ff,#5200ff,#5900ff,#5f00ff,#60f,#6d00ff,#7400ff,#7b00ff,#8300ff,#8a00ff,#9100ff,#90f,#a100ff,#a800ff,#b000ff,#b800ff,#c000ff,#c800ff,#d000ff,#d800ff,#e000ff,#e900ff,#f100ff,#fa00ff,#ff00fb,#ff00f3,#ff00eb,#ff00e4)"></i><i style="left:116.2px;top:340px;width:402px;height:3.3px;background:linear-gradient(90deg,#0021ff,#001fff,#001eff,#001cff,#001bff,#0019ff,#0018ff,#0016ff,#0015ff,#0013ff,#0012ff,#0310ff,#070fff,#0c0dff,#110cff,#160aff,#1b09ff,#2007ff,#2606ff,#2c05ff,#3103ff,#3702ff,#3d01ff,#40f,#4a00ff,#5000ff,#5700ff,#5d00ff,#6400ff,#6b00ff,#7200ff,#7800ff,#8000ff,#8700ff,#8e00ff,#9500ff,#9d00ff,#a400ff,#ac00ff,#b300ff,#b0f,#c300ff,#cb00ff,#d300ff,#db00ff,#e300ff,#eb00ff,#f300ff,#fc00ff,#ff00fa,#ff00f2,#ff00ea)"></i><i style="left:118.2px;top:343px;width:397px;height:3.3px;background:linear-gradient(90deg,#0020ff,#001eff,#001cff,#001bff,#0019ff,#0018ff,#0016ff,#0015ff,#0013ff,#0012ff,#0010ff,#040fff,#080dff,#0d0cff,#120aff,#1709ff,#1c08ff,#2206ff,#2705ff,#2d04ff,#3302ff,#3901ff,#3f00ff,#4500ff,#4b00ff,#5200ff,#5800ff,#5f00ff,#6500ff,#6c00ff,#7300ff,#7a00ff,#8100ff,#80f,#8f00ff,#9700ff,#9e00ff,#a500ff,#ad00ff,#b500ff,#bc00ff,#c400ff,#c0f,#d400ff,#dc00ff,#e400ff,#ec00ff,#f500ff,#fd00ff,#ff00f8,#ff00f1)"></i><i style="left:120.2px;top:346px;width:392px;height:3.3px;background:linear-gradient(90deg,#001eff,#001dff,#001bff,#001aff,#0018ff,#0017ff,#0015ff,#0013ff,#0012ff,#0010ff,#010fff,#050eff,#090cff,#0e0bff,#1309ff,#1808ff,#1d06ff,#2305ff,#2804ff,#2e03ff,#3401ff,#3a00ff,#4000ff,#4600ff,#4c00ff,#5300ff,#5900ff,#6000ff,#6700ff,#6d00ff,#7400ff,#7b00ff,#8200ff,#8900ff,#9100ff,#9800ff,#9f00ff,#a700ff,#ae00ff,#b600ff,#be00ff,#c600ff,#cd00ff,#d500ff,#de00ff,#e600ff,#e0f,#f600ff,#f0f,#ff00f7)"></i><i style="left:122.2px;top:349px;width:388px;height:3.3px;background:linear-gradient(90deg,#001dff,#001bff,#001aff,#0018ff,#0017ff,#0015ff,#0014ff,#0012ff,#01f,#000fff,#010eff,#050dff,#090bff,#0e0aff,#1308ff,#1807ff,#1d06ff,#2204ff,#2803ff,#2d02ff,#3301ff,#3900ff,#3f00ff,#4500ff,#4b00ff,#5100ff,#5800ff,#5e00ff,#6500ff,#6b00ff,#7200ff,#7900ff,#8000ff,#8700ff,#8e00ff,#9500ff,#9c00ff,#a300ff,#ab00ff,#b200ff,#ba00ff,#c100ff,#c900ff,#d100ff,#d900ff,#e100ff,#e900ff,#f100ff,#f900ff,#ff00fd)"></i><i style="left:124.2px;top:352px;width:383px;height:3.3px;background:linear-gradient(90deg,#001bff,#001aff,#0018ff,#0017ff,#0015ff,#0014ff,#0013ff,#01f,#0010ff,#000eff,#020dff,#060bff,#0b0aff,#0f09ff,#1407ff,#1906ff,#1e05ff,#2403ff,#2902ff,#2f01ff,#3400ff,#3a00ff,#4000ff,#4600ff,#4c00ff,#5300ff,#5900ff,#5f00ff,#60f,#6d00ff,#7300ff,#7a00ff,#8100ff,#80f,#8f00ff,#9600ff,#9d00ff,#a500ff,#ac00ff,#b400ff,#b0f,#c300ff,#ca00ff,#d200ff,#da00ff,#e200ff,#ea00ff,#f200ff,#fa00ff)"></i><i style="left:126.2px;top:355px;width:378px;height:3.3px;background:linear-gradient(90deg,#001aff,#0019ff,#0017ff,#0016ff,#0014ff,#0013ff,#01f,#0010ff,#000fff,#000dff,#020cff,#060aff,#0a09ff,#0f08ff,#1406ff,#1905ff,#1e04ff,#2303ff,#2802ff,#2e01ff,#30f,#3900ff,#3f00ff,#4500ff,#4b00ff,#5100ff,#5700ff,#5d00ff,#6400ff,#6a00ff,#7100ff,#70f,#7e00ff,#8500ff,#8c00ff,#9200ff,#90f,#a100ff,#a800ff,#af00ff,#b600ff,#be00ff,#c500ff,#cd00ff,#d400ff,#dc00ff,#e400ff,#ec00ff,#f400ff)"></i><i style="left:127.2px;top:358px;width:374px;height:3.3px;background:linear-gradient(90deg,#0019ff,#0018ff,#0016ff,#0015ff,#0013ff,#0012ff,#0010ff,#000fff,#000eff,#000cff,#030bff,#0709ff,#0b08ff,#1007ff,#1406ff,#1904ff,#1e03ff,#2402ff,#2901ff,#2f00ff,#3400ff,#3a00ff,#4000ff,#4600ff,#4c00ff,#5200ff,#5800ff,#5e00ff,#6500ff,#6b00ff,#7200ff,#7800ff,#7f00ff,#8600ff,#8d00ff,#9400ff,#9b00ff,#a200ff,#a900ff,#b000ff,#b800ff,#bf00ff,#c700ff,#ce00ff,#d600ff,#de00ff,#e500ff,#ed00ff)"></i><i style="left:129.2px;top:361px;width:369px;height:3.3px;background:linear-gradient(90deg,#0018ff,#0016ff,#0015ff,#0014ff,#0012ff,#01f,#000fff,#000eff,#000dff,#000bff,#030aff,#0709ff,#0b07ff,#0f06ff,#1405ff,#1904ff,#1e02ff,#2301ff,#2800ff,#2e00ff,#30f,#3900ff,#3e00ff,#40f,#4a00ff,#5000ff,#5600ff,#5c00ff,#6200ff,#6900ff,#6f00ff,#7500ff,#7c00ff,#8300ff,#8900ff,#9000ff,#9700ff,#9e00ff,#a500ff,#ac00ff,#b300ff,#ba00ff,#c100ff,#c900ff,#d000ff,#d800ff,#df00ff,#e700ff)"></i><i style="left:131.2px;top:364px;width:364px;height:3.3px;background:linear-gradient(90deg,#0017ff,#0015ff,#0014ff,#0012ff,#01f,#0010ff,#000eff,#000dff,#000bff,#000aff,#0409ff,#0808ff,#0c06ff,#1005ff,#1504ff,#1a03ff,#1f02ff,#2401ff,#2900ff,#2f00ff,#3400ff,#3a00ff,#4000ff,#4500ff,#4b00ff,#5100ff,#5700ff,#5d00ff,#6400ff,#6a00ff,#7000ff,#70f,#7d00ff,#8400ff,#8b00ff,#9100ff,#9800ff,#9f00ff,#a600ff,#ad00ff,#b400ff,#bc00ff,#c300ff,#ca00ff,#d200ff,#d900ff,#e100ff)"></i><i style="left:133.2px;top:367px;width:359px;height:3.3px;background:linear-gradient(90deg,#0015ff,#0014ff,#0013ff,#01f,#0010ff,#000eff,#000dff,#000cff,#000aff,#0109ff,#0508ff,#0906ff,#0d05ff,#1104ff,#1603ff,#1b02ff,#2001ff,#2500ff,#2b00ff,#3000ff,#3600ff,#3b00ff,#4100ff,#4700ff,#4d00ff,#5300ff,#5900ff,#5f00ff,#6500ff,#6b00ff,#7200ff,#7800ff,#7f00ff,#8500ff,#8c00ff,#9300ff,#9a00ff,#a100ff,#a800ff,#af00ff,#b600ff,#bd00ff,#c500ff,#c0f,#d300ff,#db00ff)"></i><i style="left:135.2px;top:370px;width:354px;height:3.3px;background:linear-gradient(90deg,#0014ff,#0013ff,#01f,#0010ff,#000fff,#000dff,#000cff,#000bff,#000aff,#0108ff,#0507ff,#0906ff,#0d05ff,#1103ff,#1602ff,#1b01ff,#2000ff,#2500ff,#2a00ff,#2f00ff,#3400ff,#3a00ff,#3f00ff,#4500ff,#4b00ff,#5100ff,#5600ff,#5c00ff,#6300ff,#6900ff,#6f00ff,#7500ff,#7c00ff,#8200ff,#8900ff,#8f00ff,#9600ff,#9d00ff,#a300ff,#a0f,#b100ff,#b800ff,#bf00ff,#c700ff,#ce00ff,#d500ff)"></i><i style="left:137.2px;top:373px;width:349px;height:3.3px;background:linear-gradient(90deg,#0013ff,#0012ff,#0010ff,#000fff,#000eff,#000cff,#000bff,#000aff,#0008ff,#0207ff,#0606ff,#0a05ff,#0e04ff,#1202ff,#1701ff,#1c00ff,#2100ff,#2600ff,#2b00ff,#3000ff,#3600ff,#3b00ff,#4100ff,#4600ff,#4c00ff,#5200ff,#5800ff,#5e00ff,#6400ff,#6a00ff,#7000ff,#70f,#7d00ff,#8400ff,#8a00ff,#9100ff,#9700ff,#9e00ff,#a500ff,#ac00ff,#b300ff,#ba00ff,#c100ff,#c800ff,#cf00ff)"></i><i style="left:139.2px;top:376px;width:344px;height:3.3px;background:linear-gradient(90deg,#0012ff,#01f,#000fff,#000eff,#000dff,#000bff,#000aff,#0009ff,#0007ff,#0306ff,#0605ff,#0a04ff,#0f03ff,#1302ff,#1801ff,#1d00ff,#20f,#2700ff,#2c00ff,#3100ff,#3700ff,#3c00ff,#4200ff,#4800ff,#4d00ff,#5300ff,#5900ff,#5f00ff,#6500ff,#6c00ff,#7200ff,#7800ff,#7f00ff,#8500ff,#8c00ff,#9200ff,#90f,#a000ff,#a700ff,#ad00ff,#b400ff,#bc00ff,#c300ff,#ca00ff)"></i><i style="left:141.2px;top:379px;width:339px;height:3.3px;background:linear-gradient(90deg,#01f,#000fff,#000eff,#000dff,#000cff,#000aff,#0009ff,#0008ff,#0007ff,#0305ff,#0604ff,#0a03ff,#0f02ff,#1301ff,#1800ff,#1c00ff,#2100ff,#2600ff,#2b00ff,#3000ff,#3600ff,#3b00ff,#4000ff,#4600ff,#4c00ff,#5100ff,#5700ff,#5d00ff,#6300ff,#6900ff,#6f00ff,#7500ff,#7b00ff,#8200ff,#80f,#8e00ff,#9500ff,#9c00ff,#a200ff,#a900ff,#b000ff,#b700ff,#bd00ff,#c400ff)"></i><i style="left:143.2px;top:382px;width:334px;height:3.3px;background:linear-gradient(90deg,#0010ff,#000eff,#000dff,#000cff,#000bff,#0009ff,#0008ff,#0007ff,#0006ff,#0405ff,#0703ff,#0b02ff,#1001ff,#1400ff,#1900ff,#1d00ff,#20f,#2700ff,#2c00ff,#3200ff,#3700ff,#3c00ff,#4200ff,#4700ff,#4d00ff,#5300ff,#5800ff,#5e00ff,#6400ff,#6a00ff,#7000ff,#70f,#7d00ff,#8300ff,#8a00ff,#9000ff,#9700ff,#9d00ff,#a400ff,#ab00ff,#b100ff,#b800ff,#bf00ff)"></i><i style="left:145.2px;top:385px;width:330px;height:3.3px;background:linear-gradient(90deg,#000fff,#000dff,#000cff,#000bff,#000aff,#0008ff,#0007ff,#0006ff,#0105ff,#0404ff,#0703ff,#0b02ff,#1001ff,#1400ff,#1800ff,#1d00ff,#20f,#2700ff,#2c00ff,#3100ff,#3600ff,#3b00ff,#4100ff,#4600ff,#4b00ff,#5100ff,#5700ff,#5c00ff,#6200ff,#6800ff,#6e00ff,#7400ff,#7a00ff,#8000ff,#8700ff,#8d00ff,#9300ff,#9a00ff,#a000ff,#a700ff,#ad00ff,#b400ff,#b0f)"></i><i style="left:148.2px;top:388px;width:324px;height:3.3px;background:linear-gradient(90deg,#000eff,#000cff,#000bff,#000aff,#0009ff,#0007ff,#0006ff,#0005ff,#0204ff,#0503ff,#0902ff,#0d01ff,#10f,#1500ff,#1a00ff,#1f00ff,#2300ff,#2800ff,#2d00ff,#3200ff,#3700ff,#3d00ff,#4200ff,#4800ff,#4d00ff,#5300ff,#5800ff,#5e00ff,#6400ff,#6a00ff,#7000ff,#7600ff,#7c00ff,#8200ff,#80f,#8f00ff,#9500ff,#9b00ff,#a200ff,#a800ff,#af00ff,#b600ff)"></i><i style="left:150.2px;top:391px;width:319px;height:3.3px;background:linear-gradient(90deg,#000dff,#000bff,#000aff,#0009ff,#0008ff,#0006ff,#0005ff,#0004ff,#0203ff,#0602ff,#0a01ff,#0e00ff,#1200ff,#1600ff,#1b00ff,#2000ff,#2400ff,#2900ff,#2e00ff,#3400ff,#3900ff,#3e00ff,#4300ff,#4900ff,#4e00ff,#5400ff,#5a00ff,#6000ff,#6500ff,#6b00ff,#7100ff,#70f,#7d00ff,#8400ff,#8a00ff,#9000ff,#9700ff,#9d00ff,#a400ff,#a0f,#b100ff)"></i><i style="left:152.2px;top:394px;width:314px;height:3.3px;background:linear-gradient(90deg,#000cff,#000aff,#0009ff,#0008ff,#0007ff,#0006ff,#0005ff,#0004ff,#0202ff,#0601ff,#0a01ff,#0e00ff,#1200ff,#1600ff,#1a00ff,#1f00ff,#2400ff,#2900ff,#2d00ff,#3200ff,#3700ff,#3d00ff,#4200ff,#4700ff,#4d00ff,#5200ff,#5800ff,#5d00ff,#6300ff,#6900ff,#6e00ff,#7400ff,#7a00ff,#8000ff,#8600ff,#8c00ff,#9300ff,#90f,#9f00ff,#a600ff,#ac00ff)"></i><i style="left:154.2px;top:397px;width:309px;height:3.3px;background:linear-gradient(90deg,#000bff,#0009ff,#0008ff,#0007ff,#0006ff,#0005ff,#0004ff,#0003ff,#0302ff,#0701ff,#0a00ff,#0e00ff,#1300ff,#1700ff,#1c00ff,#2000ff,#2500ff,#2a00ff,#2f00ff,#3400ff,#3900ff,#3e00ff,#4300ff,#4800ff,#4e00ff,#5300ff,#5900ff,#5f00ff,#6400ff,#6a00ff,#7000ff,#7600ff,#7c00ff,#8200ff,#80f,#8e00ff,#9400ff,#9b00ff,#a100ff,#a700ff)"></i><i style="left:156.2px;top:400px;width:304px;height:3.3px;background:linear-gradient(90deg,#000aff,#0009ff,#0007ff,#0006ff,#0005ff,#0004ff,#0003ff,#0102ff,#0401ff,#0700ff,#0b00ff,#0f00ff,#1400ff,#1800ff,#1d00ff,#2100ff,#2600ff,#2b00ff,#3000ff,#3500ff,#3a00ff,#3f00ff,#40f,#4a00ff,#4f00ff,#50f,#5a00ff,#6000ff,#60f,#6c00ff,#7100ff,#70f,#7d00ff,#8300ff,#8a00ff,#9000ff,#9600ff,#9c00ff,#a300ff)"></i><i style="left:158.2px;top:403px;width:299px;height:3.3px;background:linear-gradient(90deg,#0009ff,#0008ff,#0007ff,#0005ff,#0004ff,#0003ff,#0002ff,#0101ff,#0400ff,#0700ff,#0b00ff,#0f00ff,#1300ff,#1800ff,#1c00ff,#2100ff,#2500ff,#2a00ff,#2f00ff,#3400ff,#3900ff,#3e00ff,#4300ff,#4800ff,#4d00ff,#5300ff,#5800ff,#5e00ff,#6300ff,#6900ff,#6e00ff,#7400ff,#7a00ff,#8000ff,#8600ff,#8c00ff,#9200ff,#9800ff,#9e00ff)"></i><i style="left:160.2px;top:406px;width:294px;height:3.3px;background:linear-gradient(90deg,#0008ff,#0007ff,#0006ff,#0005ff,#0004ff,#0003ff,#0002ff,#0101ff,#0500ff,#0800ff,#0c00ff,#1000ff,#1400ff,#1900ff,#1d00ff,#20f,#2600ff,#2b00ff,#3000ff,#3500ff,#3a00ff,#3f00ff,#40f,#4900ff,#4f00ff,#5400ff,#5a00ff,#5f00ff,#6500ff,#6a00ff,#7000ff,#7600ff,#7c00ff,#8200ff,#80f,#8e00ff,#9400ff,#9a00ff)"></i><i style="left:163.2px;top:409px;width:288px;height:3.3px;background:linear-gradient(90deg,#0007ff,#0006ff,#0005ff,#0004ff,#0003ff,#0002ff,#0001ff,#0200ff,#0600ff,#0a00ff,#0d00ff,#1200ff,#1600ff,#1a00ff,#1f00ff,#2300ff,#2800ff,#2d00ff,#3100ff,#3600ff,#3b00ff,#4100ff,#4600ff,#4b00ff,#5000ff,#5600ff,#5b00ff,#6100ff,#60f,#6c00ff,#7200ff,#7800ff,#7d00ff,#8300ff,#8900ff,#8f00ff,#9500ff)"></i><i style="left:165.2px;top:412px;width:283px;height:3.3px;background:linear-gradient(90deg,#0006ff,#0005ff,#0004ff,#0003ff,#0002ff,#0001ff,#00f,#0300ff,#0600ff,#0900ff,#0d00ff,#10f,#1500ff,#1a00ff,#1e00ff,#20f,#2700ff,#2c00ff,#3000ff,#3500ff,#3a00ff,#3f00ff,#40f,#4900ff,#4e00ff,#5300ff,#5900ff,#5e00ff,#6400ff,#6900ff,#6f00ff,#7400ff,#7a00ff,#8000ff,#8500ff,#8b00ff,#9100ff)"></i><i style="left:167.2px;top:415px;width:278px;height:3.3px;background:linear-gradient(90deg,#0005ff,#0004ff,#0003ff,#0002ff,#0001ff,#0001ff,#00f,#0300ff,#0700ff,#0a00ff,#0e00ff,#1200ff,#1600ff,#1b00ff,#1f00ff,#2400ff,#2800ff,#2d00ff,#3200ff,#3600ff,#3b00ff,#4000ff,#4500ff,#4a00ff,#5000ff,#50f,#5a00ff,#6000ff,#6500ff,#6b00ff,#7000ff,#7600ff,#7c00ff,#8100ff,#8700ff,#8d00ff)"></i><i style="left:169.2px;top:418px;width:273px;height:3.3px;background:linear-gradient(90deg,#0005ff,#0004ff,#0003ff,#0002ff,#0001ff,#00f,#0100ff,#0300ff,#0700ff,#0a00ff,#0e00ff,#1200ff,#1600ff,#1a00ff,#1e00ff,#2300ff,#2700ff,#2c00ff,#3000ff,#3500ff,#3a00ff,#3f00ff,#40f,#4900ff,#4e00ff,#5300ff,#5800ff,#5d00ff,#6200ff,#6800ff,#6d00ff,#7300ff,#7800ff,#7e00ff,#8300ff,#8900ff)"></i><i style="left:172.2px;top:421px;width:268px;height:3.3px;background:linear-gradient(90deg,#0004ff,#0003ff,#0002ff,#0001ff,#00f,#00f,#0100ff,#0500ff,#0800ff,#0c00ff,#0f00ff,#1300ff,#1700ff,#1c00ff,#2000ff,#2400ff,#2900ff,#2d00ff,#3200ff,#3700ff,#3c00ff,#4100ff,#4600ff,#4b00ff,#5000ff,#50f,#5a00ff,#5f00ff,#6500ff,#6a00ff,#6f00ff,#7500ff,#7b00ff,#8000ff,#8600ff)"></i><i style="left:174.2px;top:424px;width:263px;height:3.3px;background:linear-gradient(90deg,#0003ff,#0002ff,#0001ff,#00f,#00f,#00f,#0200ff,#0500ff,#0900ff,#0c00ff,#1000ff,#1400ff,#1900ff,#1d00ff,#2100ff,#2600ff,#2a00ff,#2f00ff,#30f,#3800ff,#3d00ff,#4200ff,#4700ff,#4c00ff,#5100ff,#5600ff,#5c00ff,#6100ff,#60f,#6c00ff,#7100ff,#70f,#7c00ff,#8200ff)"></i><i style="left:176.2px;top:427px;width:258px;height:3.3px;background:linear-gradient(90deg,#0002ff,#0001ff,#0001ff,#00f,#00f,#00f,#0200ff,#0500ff,#0900ff,#0c00ff,#1000ff,#1400ff,#1800ff,#1c00ff,#2000ff,#2500ff,#2900ff,#2e00ff,#3200ff,#3700ff,#3b00ff,#4000ff,#4500ff,#4a00ff,#4f00ff,#5400ff,#5900ff,#5e00ff,#6300ff,#6900ff,#6e00ff,#7300ff,#7900ff,#7e00ff)"></i><i style="left:179.2px;top:430px;width:252px;height:3.3px;background:linear-gradient(90deg,#0002ff,#0001ff,#00f,#00f,#00f,#00f,#0300ff,#0600ff,#0a00ff,#0e00ff,#10f,#1500ff,#1900ff,#1e00ff,#20f,#2600ff,#2b00ff,#2f00ff,#3400ff,#3800ff,#3d00ff,#4200ff,#4700ff,#4c00ff,#5100ff,#5600ff,#5b00ff,#6000ff,#6500ff,#6a00ff,#7000ff,#7500ff,#7b00ff)"></i><i style="left:181.2px;top:433px;width:247px;height:3.3px;background:linear-gradient(90deg,#0001ff,#00f,#00f,#00f,#00f,#0100ff,#0400ff,#0700ff,#0b00ff,#0e00ff,#1200ff,#1600ff,#1a00ff,#1f00ff,#2300ff,#2700ff,#2c00ff,#3000ff,#3500ff,#3a00ff,#3e00ff,#4300ff,#4800ff,#4d00ff,#5200ff,#5700ff,#5c00ff,#6100ff,#6700ff,#6c00ff,#7100ff,#70f)"></i><i style="left:183.2px;top:436px;width:242px;height:3.3px;background:linear-gradient(90deg,#00f,#00f,#00f,#00f,#00f,#0100ff,#0400ff,#0700ff,#0b00ff,#0e00ff,#1200ff,#1600ff,#1a00ff,#1e00ff,#20f,#2600ff,#2b00ff,#2f00ff,#3400ff,#3800ff,#3d00ff,#4100ff,#4600ff,#4b00ff,#5000ff,#50f,#5a00ff,#5f00ff,#6400ff,#6900ff,#6e00ff,#7300ff)"></i><i style="left:186.2px;top:439px;width:236px;height:3.3px;background:linear-gradient(90deg,#00f,#00f,#00f,#00f,#00f,#0200ff,#0500ff,#0800ff,#0c00ff,#0f00ff,#1300ff,#1700ff,#1b00ff,#1f00ff,#2300ff,#2800ff,#2c00ff,#3100ff,#3500ff,#3a00ff,#3e00ff,#4300ff,#4800ff,#4c00ff,#5100ff,#5600ff,#5b00ff,#6000ff,#6500ff,#6b00ff,#7000ff)"></i><i style="left:188.2px;top:442px;width:231px;height:3.3px;background:linear-gradient(90deg,#00f,#00f,#00f,#00f,#00f,#0300ff,#0600ff,#0900ff,#0d00ff,#1000ff,#1400ff,#1800ff,#1c00ff,#2000ff,#2500ff,#2900ff,#2d00ff,#3200ff,#3600ff,#3b00ff,#4000ff,#40f,#4900ff,#4e00ff,#5300ff,#5800ff,#5d00ff,#6200ff,#6700ff,#6c00ff)"></i><i style="left:191.2px;top:445px;width:225px;height:3.3px;background:linear-gradient(90deg,#00f,#00f,#00f,#00f,#00f,#0300ff,#0600ff,#0900ff,#0d00ff,#1000ff,#1400ff,#1800ff,#1c00ff,#2000ff,#2400ff,#2800ff,#2c00ff,#3100ff,#3500ff,#3900ff,#3e00ff,#4300ff,#4700ff,#4c00ff,#5100ff,#50f,#5a00ff,#5f00ff,#6400ff,#6900ff)"></i><i style="left:193.2px;top:448px;width:220px;height:3.3px;background:linear-gradient(90deg,#00f,#00f,#00f,#00f,#0100ff,#0400ff,#0700ff,#0a00ff,#0e00ff,#10f,#1500ff,#1900ff,#1d00ff,#2100ff,#2500ff,#2900ff,#2e00ff,#3200ff,#3600ff,#3b00ff,#3f00ff,#40f,#4900ff,#4d00ff,#5200ff,#5700ff,#5c00ff,#6100ff,#60f)"></i><i style="left:196.2px;top:451px;width:214px;height:3.3px;background:linear-gradient(90deg,#00f,#00f,#00f,#00f,#0200ff,#0500ff,#0800ff,#0b00ff,#0f00ff,#1300ff,#1600ff,#1a00ff,#1e00ff,#20f,#2600ff,#2b00ff,#2f00ff,#30f,#3800ff,#3c00ff,#4100ff,#4600ff,#4a00ff,#4f00ff,#5400ff,#5900ff,#5e00ff,#6300ff)"></i><i style="left:198.2px;top:454px;width:209px;height:3.3px;background:linear-gradient(90deg,#00f,#00f,#00f,#00f,#0200ff,#0500ff,#0800ff,#0b00ff,#0f00ff,#1200ff,#1600ff,#1a00ff,#1e00ff,#2100ff,#2500ff,#2a00ff,#2e00ff,#3200ff,#3600ff,#3b00ff,#3f00ff,#40f,#4800ff,#4d00ff,#5100ff,#5600ff,#5b00ff,#6000ff)"></i><i style="left:201.2px;top:457px;width:204px;height:3.3px;background:linear-gradient(90deg,#00f,#00f,#00f,#00f,#0300ff,#0600ff,#0900ff,#0c00ff,#1000ff,#1400ff,#1700ff,#1b00ff,#1f00ff,#2300ff,#2700ff,#2b00ff,#3000ff,#3400ff,#3800ff,#3d00ff,#4100ff,#4600ff,#4a00ff,#4f00ff,#5400ff,#5800ff,#5d00ff)"></i><i style="left:204.2px;top:460px;width:198px;height:3.3px;background:linear-gradient(90deg,#00f,#00f,#00f,#0100ff,#0400ff,#0700ff,#0a00ff,#0e00ff,#10f,#1500ff,#1900ff,#1c00ff,#2000ff,#2400ff,#2900ff,#2d00ff,#3100ff,#3500ff,#3a00ff,#3e00ff,#4300ff,#4700ff,#4c00ff,#5100ff,#50f,#5a00ff)"></i><i style="left:206.2px;top:463px;width:193px;height:3.3px;background:linear-gradient(90deg,#00f,#00f,#00f,#0100ff,#0400ff,#0700ff,#0a00ff,#0d00ff,#10f,#1400ff,#1800ff,#1c00ff,#2000ff,#2400ff,#2700ff,#2c00ff,#3000ff,#3400ff,#3800ff,#3c00ff,#4100ff,#4500ff,#4900ff,#4e00ff,#5200ff,#5700ff)"></i><i style="left:209.2px;top:466px;width:187px;height:3.3px;background:linear-gradient(90deg,#00f,#00f,#00f,#0200ff,#0500ff,#0800ff,#0b00ff,#0f00ff,#1200ff,#1600ff,#1900ff,#1d00ff,#2100ff,#2500ff,#2900ff,#2d00ff,#3100ff,#3500ff,#3a00ff,#3e00ff,#4200ff,#4700ff,#4b00ff,#5000ff,#5400ff)"></i><i style="left:212.2px;top:469px;width:181px;height:3.3px;background:linear-gradient(90deg,#00f,#00f,#00f,#0300ff,#0600ff,#0900ff,#0c00ff,#1000ff,#1300ff,#1700ff,#1b00ff,#1e00ff,#20f,#2600ff,#2a00ff,#2e00ff,#30f,#3700ff,#3b00ff,#3f00ff,#40f,#4800ff,#4d00ff,#5100ff)"></i><i style="left:215.2px;top:472px;width:175px;height:3.3px;background:linear-gradient(90deg,#00f,#00f,#0100ff,#0400ff,#0700ff,#0a00ff,#0d00ff,#10f,#1400ff,#1800ff,#1c00ff,#2000ff,#2400ff,#2800ff,#2c00ff,#3000ff,#3400ff,#3800ff,#3d00ff,#4100ff,#4600ff,#4a00ff,#4f00ff)"></i><i style="left:218.2px;top:475px;width:169px;height:3.3px;background:linear-gradient(90deg,#00f,#00f,#0200ff,#0400ff,#0700ff,#0a00ff,#0e00ff,#10f,#1400ff,#1800ff,#1b00ff,#1f00ff,#2300ff,#2700ff,#2b00ff,#2f00ff,#30f,#3700ff,#3b00ff,#3f00ff,#4300ff,#4700ff,#4c00ff)"></i><i style="left:221.2px;top:478px;width:163px;height:3.3px;background:linear-gradient(90deg,#00f,#00f,#0200ff,#0500ff,#0800ff,#0b00ff,#0f00ff,#1200ff,#1500ff,#1900ff,#1d00ff,#2000ff,#2400ff,#2800ff,#2c00ff,#3000ff,#3400ff,#3800ff,#3c00ff,#4100ff,#4500ff,#4900ff)"></i><i style="left:224.2px;top:481px;width:157px;height:3.3px;background:linear-gradient(90deg,#00f,#0100ff,#0300ff,#0600ff,#0900ff,#0c00ff,#1000ff,#1300ff,#1700ff,#1a00ff,#1e00ff,#20f,#2600ff,#2a00ff,#2d00ff,#3200ff,#3600ff,#3a00ff,#3e00ff,#4200ff,#4700ff)"></i><i style="left:227.2px;top:484px;width:151px;height:3.3px;background:linear-gradient(90deg,#00f,#0100ff,#0400ff,#0700ff,#0a00ff,#0d00ff,#10f,#1400ff,#1800ff,#1c00ff,#1f00ff,#2300ff,#2700ff,#2b00ff,#2f00ff,#30f,#3700ff,#3b00ff,#4000ff,#40f)"></i><i style="left:231.2px;top:487px;width:144px;height:3.3px;background:linear-gradient(90deg,#00f,#0200ff,#0500ff,#0800ff,#0b00ff,#0f00ff,#1200ff,#1600ff,#1900ff,#1d00ff,#2100ff,#2500ff,#2900ff,#2d00ff,#3100ff,#3500ff,#3900ff,#3d00ff,#4100ff)"></i><i style="left:234.2px;top:490px;width:139px;height:3.3px;background:linear-gradient(90deg,#0100ff,#0300ff,#0600ff,#0900ff,#0c00ff,#0f00ff,#1200ff,#1600ff,#1900ff,#1d00ff,#2000ff,#2400ff,#2800ff,#2c00ff,#2f00ff,#30f,#3700ff,#3b00ff,#3f00ff)"></i><i style="left:237.2px;top:493px;width:133px;height:3.3px;background:linear-gradient(90deg,#0100ff,#0400ff,#0700ff,#0a00ff,#0d00ff,#1000ff,#1300ff,#1700ff,#1a00ff,#1e00ff,#20f,#2500ff,#2900ff,#2d00ff,#3100ff,#3500ff,#3900ff,#3d00ff)"></i><i style="left:241.2px;top:496px;width:126px;height:3.3px;background:linear-gradient(90deg,#0200ff,#0500ff,#0800ff,#0b00ff,#0e00ff,#1200ff,#1500ff,#1800ff,#1c00ff,#2000ff,#2300ff,#2700ff,#2b00ff,#2f00ff,#30f,#3700ff,#3b00ff)"></i><i style="left:244.2px;top:499px;width:120px;height:3.3px;background:linear-gradient(90deg,#0300ff,#0600ff,#0900ff,#0c00ff,#0f00ff,#1300ff,#1600ff,#1a00ff,#1d00ff,#2100ff,#2500ff,#2800ff,#2c00ff,#3000ff,#3400ff,#3800ff)"></i><i style="left:248.2px;top:502px;width:113px;height:3.3px;background:linear-gradient(90deg,#0400ff,#0700ff,#0a00ff,#0d00ff,#1000ff,#1300ff,#1600ff,#1900ff,#1d00ff,#2000ff,#2400ff,#2700ff,#2b00ff,#2f00ff,#3200ff,#3600ff)"></i><i style="left:251.2px;top:505px;width:107px;height:3.3px;background:linear-gradient(90deg,#0500ff,#0800ff,#0b00ff,#0e00ff,#10f,#1400ff,#1700ff,#1b00ff,#1e00ff,#20f,#2500ff,#2900ff,#2c00ff,#3000ff,#3400ff)"></i><i style="left:255.2px;top:508px;width:100px;height:3.3px;background:linear-gradient(90deg,#0600ff,#0900ff,#0c00ff,#0f00ff,#1200ff,#1500ff,#1900ff,#1c00ff,#1f00ff,#2300ff,#2700ff,#2a00ff,#2e00ff,#3200ff)"></i><i style="left:258.2px;top:511px;width:94px;height:3.3px;background:linear-gradient(90deg,#0700ff,#0a00ff,#0d00ff,#1000ff,#1300ff,#1600ff,#1a00ff,#1d00ff,#2100ff,#2400ff,#2800ff,#2c00ff,#2f00ff)"></i><i style="left:262.2px;top:514px;width:87px;height:3.3px;background:linear-gradient(90deg,#0800ff,#0b00ff,#0e00ff,#10f,#1400ff,#1800ff,#1b00ff,#1f00ff,#20f,#2600ff,#2a00ff,#2d00ff)"></i><i style="left:266.2px;top:517px;width:80px;height:3.3px;background:linear-gradient(90deg,#0900ff,#0c00ff,#0f00ff,#1300ff,#1600ff,#1900ff,#1d00ff,#2000ff,#2400ff,#2800ff,#2b00ff)"></i><i style="left:269.2px;top:520px;width:74px;height:3.3px;background:linear-gradient(90deg,#0a00ff,#0d00ff,#1000ff,#1300ff,#1600ff,#1900ff,#1c00ff,#1f00ff,#2300ff,#2600ff,#2900ff)"></i><i style="left:273.2px;top:523px;width:67px;height:3.3px;background:linear-gradient(90deg,#0b00ff,#0e00ff,#10f,#1400ff,#1700ff,#1a00ff,#1d00ff,#2100ff,#2400ff,#2700ff)"></i><i style="left:277.2px;top:526px;width:61px;height:3.3px;background:linear-gradient(90deg,#0c00ff,#0f00ff,#1200ff,#1500ff,#1800ff,#1c00ff,#1f00ff,#20f,#2600ff)"></i><i style="left:280.2px;top:529px;width:55px;height:3.3px;background:linear-gradient(90deg,#0d00ff,#1000ff,#1300ff,#1600ff,#1a00ff,#1d00ff,#2000ff,#2400ff)"></i><i style="left:284.2px;top:532px;width:48px;height:3.3px;background:linear-gradient(90deg,#0e00ff,#10f,#1400ff,#1800ff,#1b00ff,#1f00ff,#20f)"></i><i style="left:287.2px;top:535px;width:42px;height:3.3px;background:linear-gradient(90deg,#0f00ff,#1200ff,#1400ff,#1700ff,#1a00ff,#1d00ff,#2000ff)"></i><i style="left:291.2px;top:538px;width:35px;height:3.3px;background:linear-gradient(90deg,#1000ff,#1300ff,#1600ff,#1800ff,#1b00ff,#1e00ff)"></i><i style="left:294.2px;top:541px;width:29px;height:3.3px;background:linear-gradient(90deg,#10f,#1400ff,#1700ff,#1a00ff,#1d00ff)"></i><i style="left:298.2px;top:544px;width:22px;height:3.3px;background:linear-gradient(90deg,#1200ff,#1500ff,#1800ff,#1b00ff)"></i><i style="left:302.2px;top:547px;width:15px;height:3.3px;background:linear-gradient(90deg,#1300ff,#1600ff,#1900ff)"></i><svg style="left:0;top:0" width="733.3" height="564"><path fill-rule="evenodd" fill="rgba(0,0,0,.4)" d="M-5-5H738.3V569H-5zM606.13 69.83 119.29 20.73 213.34 416.16z"/></svg></div></div>
<div style="left:1170.4px;top:736px;width:2px;height:6px;background:#b0b0b0"></div>
<span class="t" style="left:1166.95px;top:745.86px;font-size:16px;color:#ddd;transform-origin:50% 0;transform:scaleX(1.05);">0</span>
<div style="left:1164.6px;top:734px;width:6.3px;height:2px;background:#b0b0b0"></div>
<span class="t" style="left:1155.09px;top:729.36px;font-size:16px;color:#ddd;transform-origin:100% 0;transform:scaleX(1.06);">0</span>
<div style="left:1231.6px;top:736px;width:2px;height:6px;background:#b0b0b0"></div>
<span class="t" style="left:1217.03px;top:745.86px;font-size:16px;color:#ddd;transform-origin:50% 0;transform:scaleX(1.05);">0,05</span>
<div style="left:1164.6px;top:686.9px;width:6.3px;height:2px;background:#b0b0b0"></div>
<span class="t" style="left:1132.86px;top:682.26px;font-size:16px;color:#ddd;transform-origin:100% 0;transform:scaleX(1.06);">0,05</span>
<div style="left:1292.8px;top:736px;width:2px;height:6px;background:#b0b0b0"></div>
<span class="t" style="left:1282.68px;top:745.86px;font-size:16px;color:#ddd;transform-origin:50% 0;transform:scaleX(1.05);">0,1</span>
<div style="left:1164.6px;top:639.8px;width:6.3px;height:2px;background:#b0b0b0"></div>
<span class="t" style="left:1141.75px;top:635.16px;font-size:16px;color:#ddd;transform-origin:100% 0;transform:scaleX(1.06);">0,1</span>
<div style="left:1354px;top:736px;width:2px;height:6px;background:#b0b0b0"></div>
<span class="t" style="left:1339.43px;top:745.86px;font-size:16px;color:#ddd;transform-origin:50% 0;transform:scaleX(1.05);">0,15</span>
<div style="left:1164.6px;top:592.7px;width:6.3px;height:2px;background:#b0b0b0"></div>
<span class="t" style="left:1132.86px;top:588.06px;font-size:16px;color:#ddd;transform-origin:100% 0;transform:scaleX(1.06);">0,15</span>
<div style="left:1415.2px;top:736px;width:2px;height:6px;background:#b0b0b0"></div>
<span class="t" style="left:1405.08px;top:745.86px;font-size:16px;color:#ddd;transform-origin:50% 0;transform:scaleX(1.05);">0,2</span>
<div style="left:1164.6px;top:545.6px;width:6.3px;height:2px;background:#b0b0b0"></div>
<span class="t" style="left:1141.75px;top:540.96px;font-size:16px;color:#ddd;transform-origin:100% 0;transform:scaleX(1.06);">0,2</span>
<div style="left:1476.4px;top:736px;width:2px;height:6px;background:#b0b0b0"></div>
<span class="t" style="left:1461.83px;top:745.86px;font-size:16px;color:#ddd;transform-origin:50% 0;transform:scaleX(1.05);">0,25</span>
<div style="left:1164.6px;top:498.5px;width:6.3px;height:2px;background:#b0b0b0"></div>
<span class="t" style="left:1132.86px;top:493.86px;font-size:16px;color:#ddd;transform-origin:100% 0;transform:scaleX(1.06);">0,25</span>
<div style="left:1537.6px;top:736px;width:2px;height:6px;background:#b0b0b0"></div>
<span class="t" style="left:1527.48px;top:745.86px;font-size:16px;color:#ddd;transform-origin:50% 0;transform:scaleX(1.05);">0,3</span>
<div style="left:1164.6px;top:451.4px;width:6.3px;height:2px;background:#b0b0b0"></div>
<span class="t" style="left:1141.75px;top:446.76px;font-size:16px;color:#ddd;transform-origin:100% 0;transform:scaleX(1.06);">0,3</span>
<div style="left:1598.8px;top:736px;width:2px;height:6px;background:#b0b0b0"></div>
<span class="t" style="left:1584.23px;top:745.86px;font-size:16px;color:#ddd;transform-origin:50% 0;transform:scaleX(1.05);">0,35</span>
<div style="left:1164.6px;top:404.3px;width:6.3px;height:2px;background:#b0b0b0"></div>
<span class="t" style="left:1132.86px;top:399.66px;font-size:16px;color:#ddd;transform-origin:100% 0;transform:scaleX(1.06);">0,35</span>
<div style="left:1660px;top:736px;width:2px;height:6px;background:#b0b0b0"></div>
<span class="t" style="left:1649.88px;top:745.86px;font-size:16px;color:#ddd;transform-origin:50% 0;transform:scaleX(1.05);">0,4</span>
<div style="left:1164.6px;top:357.2px;width:6.3px;height:2px;background:#b0b0b0"></div>
<span class="t" style="left:1141.75px;top:352.56px;font-size:16px;color:#ddd;transform-origin:100% 0;transform:scaleX(1.06);">0,4</span>
<div style="left:1721.2px;top:736px;width:2px;height:6px;background:#b0b0b0"></div>
<span class="t" style="left:1706.63px;top:745.86px;font-size:16px;color:#ddd;transform-origin:50% 0;transform:scaleX(1.05);">0,45</span>
<div style="left:1164.6px;top:310.1px;width:6.3px;height:2px;background:#b0b0b0"></div>
<span class="t" style="left:1132.86px;top:305.46px;font-size:16px;color:#ddd;transform-origin:100% 0;transform:scaleX(1.06);">0,45</span>
<div style="left:1782.4px;top:736px;width:2px;height:6px;background:#b0b0b0"></div>
<span class="t" style="left:1772.28px;top:745.86px;font-size:16px;color:#ddd;transform-origin:50% 0;transform:scaleX(1.05);">0,5</span>
<div style="left:1164.6px;top:263px;width:6.3px;height:2px;background:#b0b0b0"></div>
<span class="t" style="left:1141.75px;top:258.36px;font-size:16px;color:#ddd;transform-origin:100% 0;transform:scaleX(1.06);">0,5</span>
<div style="left:1843.6px;top:736px;width:2px;height:6px;background:#b0b0b0"></div>
<span class="t" style="left:1829.03px;top:745.86px;font-size:16px;color:#ddd;transform-origin:50% 0;transform:scaleX(1.05);">0,55</span>
<div style="left:1164.6px;top:215.9px;width:6.3px;height:2px;background:#b0b0b0"></div>
<span class="t" style="left:1132.86px;top:211.26px;font-size:16px;color:#ddd;transform-origin:100% 0;transform:scaleX(1.06);">0,55</span>
<svg style="left:1172.8px;top:170.1px" width="733.3" height="564" viewBox="1172.8 170.1 733.3 564"><g fill="none" stroke="#fff" stroke-width="1.6"><rect x="1284.8" y="181.9" width="15.2" height="15.2"/><rect x="1414.7" y="193.7" width="15.2" height="15.2"/><rect x="1771.6" y="229.7" width="15.2" height="15.2"/><rect x="1385.8" y="208.4" width="15.2" height="15.2"/><rect x="1340.9" y="218" width="15.2" height="15.2"/><rect x="1447.9" y="207.9" width="15.2" height="15.2"/><rect x="1483.9" y="212.5" width="15.2" height="15.2"/><rect x="1543" y="220.9" width="15.2" height="15.2"/><rect x="1381.6" y="234.8" width="15.2" height="15.2"/><rect x="1475.5" y="253.6" width="15.2" height="15.2"/><rect x="1454.2" y="261.2" width="15.2" height="15.2"/><rect x="1650.8" y="249.9" width="15.2" height="15.2"/><rect x="1563.2" y="269.2" width="15.2" height="15.2"/><rect x="1350.2" y="278.4" width="15.2" height="15.2"/><rect x="1311.2" y="298.9" width="15.2" height="15.2"/><rect x="1374.1" y="335" width="15.2" height="15.2"/><rect x="1400.5" y="340.9" width="15.2" height="15.2"/><rect x="1328.4" y="342.9" width="15.2" height="15.2"/><rect x="1527.1" y="328.7" width="15.2" height="15.2"/><rect x="1443.7" y="368.1" width="15.2" height="15.2"/><rect x="1377" y="405.4" width="15.2" height="15.2"/><rect x="1561.5" y="416.7" width="15.2" height="15.2"/><rect x="1382" y="471.3" width="15.2" height="15.2"/><rect x="1378.7" y="577.8" width="15.2" height="15.2"/></g><rect x="1405" y="284.6" width="15.4" height="15.4" fill="none" stroke="#000" stroke-width="1.6"/><g stroke="#111" stroke-width="1.5"><circle cx="1274.8" cy="187.5" r="4.7" fill="#00ff00"/><circle cx="1424.9" cy="201.7" r="4.7" fill="#ffff00"/><circle cx="1774.6" cy="237.8" r="4.7" fill="#ff0000"/><circle cx="1392.6" cy="216" r="4.7" fill="#a4b44c"/><circle cx="1339.3" cy="223.1" r="4.7" fill="#5c8c54"/><circle cx="1461.3" cy="215.5" r="4.7" fill="#dcb848"/><circle cx="1498.6" cy="219.7" r="4.7" fill="#d4a448"/><circle cx="1558.6" cy="228.5" r="4.7" fill="#c88444"/><circle cx="1386.3" cy="240.7" r="4.7" fill="#4c5c34"/><circle cx="1492.8" cy="259.1" r="4.7" fill="#6c4c40"/><circle cx="1465.5" cy="268.8" r="4.7" fill="#b89484"/><circle cx="1666.4" cy="255.8" r="4.7" fill="#a04448"/><circle cx="1581.2" cy="273.4" r="4.7" fill="#b05c64"/><circle cx="1350.6" cy="286" r="4.7" fill="#84b4a4"/><circle cx="1302.8" cy="309.5" r="4.7" fill="#00ffff"/><circle cx="1375" cy="342.2" r="4.7" fill="#5c7ca4"/><circle cx="1406.4" cy="348.5" r="4.7" fill="#8484b4"/><circle cx="1321.7" cy="355.2" r="4.7" fill="#2c8cac"/><circle cx="1543.9" cy="334.2" r="4.7" fill="#b05c9c"/><circle cx="1453.4" cy="377" r="4.7" fill="#5c3c6c"/><circle cx="1376.2" cy="420.1" r="4.7" fill="#4c5ca4"/><circle cx="1578.3" cy="417.2" r="4.7" fill="#ff00ff"/><circle cx="1380" cy="489.8" r="4.7" fill="#3c3c9c"/><circle cx="1373.6" cy="606.9" r="4.7" fill="#0000ff"/><circle cx="1415.2" cy="291.8" r="4.8" fill="#9a9a9a"/><circle cx="1412.4" cy="292" r="4.8" fill="#9a9a9a"/><circle cx="1428.2" cy="287.8" r="4.8" fill="#000"/></g></svg>
<div style="left:1669.3px;top:534px;width:233px;height:155.3px;background:#3c3c3c"></div>
<div style="left:1671.9px;top:536.7px;width:227.8px;height:149.6px;background:#242424;border:1.3px solid #8e8e8e"></div>
<div style="left:1673.2px;top:538px;width:225.2px;height:147px;overflow:hidden"><div class="cg" style="left:0;top:0;width:225.2px;height:147px;clip-path:polygon(-372.14px -307.9px,-339.95px -287.97px,-307.74px -267.92px,-275.53px -247.76px,-243.33px -227.52px,-211.15px -207.21px,-178.98px -186.84px,-146.81px -166.41px,-114.68px -145.95px,-82.57px -125.45px,-50.51px -104.94px,-18.48px -84.4px,13.49px -63.85px,45.4px -43.31px,77.24px -22.78px,108.98px -2.28px,140.63px 18.19px,172.17px 38.61px,203.58px 58.99px,234.87px 79.29px,266px 99.52px,296.97px 119.65px,327.76px 139.68px,358.36px 159.6px,388.74px 179.38px,418.9px 199.01px,448.81px 218.47px,478.47px 237.76px,507.87px 256.88px,536.99px 275.8px,565.8px 294.51px,594.29px 313.01px,622.41px 331.27px,625.2px 547px,-400px 547px)"><i style="left:0px;top:0px;width:225.2px;height:4.3px;background:linear-gradient(90deg,#bdff00,#c2ff00,#c7ff00,#cf0,#d2ff00,#d7ff00,#df0,#e2ff00,#e8ff00,#ef0,#f4ff00,#faff00,#fffe00,#fff900,#fff300,#ffed00)"></i><i style="left:0px;top:4px;width:225.2px;height:4.3px;background:linear-gradient(90deg,#beff00,#c3ff00,#c8ff00,#ceff00,#d3ff00,#d9ff00,#deff00,#e4ff00,#e9ff00,#efff00,#f5ff00,#fbff00,#fffd00,#fff700,#fff200,#ffec00)"></i><i style="left:0px;top:8px;width:225.2px;height:4.3px;background:linear-gradient(90deg,#bfff00,#c4ff00,#c9ff00,#cfff00,#d4ff00,#daff00,#dfff00,#e5ff00,#ebff00,#f1ff00,#f7ff00,#fcff00,#fffc00,#fff600,#fff000,#ffeb00)"></i><i style="left:0px;top:12px;width:225.2px;height:4.3px;background:linear-gradient(90deg,#c0ff00,#c5ff00,#cbff00,#d0ff00,#d6ff00,#dbff00,#e1ff00,#e6ff00,#ecff00,#f2ff00,#f8ff00,#feff00,#fffa00,#fff400,#ffef00,#ffe900)"></i><i style="left:0px;top:16px;width:225.2px;height:4.3px;background:linear-gradient(90deg,#c1ff01,#c6ff00,#cf0,#d1ff00,#d7ff00,#dcff00,#e2ff00,#e8ff00,#ef0,#f3ff00,#f9ff00,#ff0,#fff900,#fff300,#ffed00,#ffe800)"></i><i style="left:0px;top:20px;width:225.2px;height:4.3px;background:linear-gradient(90deg,#c2ff01,#c8ff00,#cdff00,#d3ff00,#d8ff00,#deff00,#e3ff00,#e9ff00,#efff00,#f5ff00,#fbff00,#fffd00,#fff700,#fff100,#ffec00,#ffe700)"></i><i style="left:0px;top:24px;width:225.2px;height:4.3px;background:linear-gradient(90deg,#c3ff01,#c9ff01,#ceff00,#d4ff00,#d9ff00,#dfff00,#e5ff00,#ebff00,#f0ff00,#f6ff00,#fcff00,#fffc00,#fff600,#fff000,#ffeb00,#ffe500)"></i><i style="left:0px;top:28px;width:225.2px;height:4.3px;background:linear-gradient(90deg,#c5ff02,#caff01,#d0ff00,#d5ff00,#dbff00,#e0ff00,#e6ff00,#ecff00,#f2ff00,#f8ff00,#feff00,#fffa00,#fff400,#ffef00,#ffe900,#ffe400)"></i><i style="left:0px;top:32px;width:225.2px;height:4.3px;background:linear-gradient(90deg,#c6ff02,#cbff01,#d1ff01,#d6ff00,#dcff00,#e2ff00,#e7ff00,#edff00,#f3ff00,#f9ff00,#ff0,#fff900,#fff300,#ffed00,#ffe800,#ffe300)"></i><i style="left:0px;top:36px;width:225.2px;height:4.3px;background:linear-gradient(90deg,#c7ff02,#ccff02,#d2ff01,#d8ff00,#df0,#e3ff00,#e9ff00,#efff00,#f5ff00,#fbff00,#fffd00,#fff700,#fff100,#ffec00,#ffe600,#ffe100)"></i><i style="left:0px;top:40px;width:225.2px;height:4.3px;background:linear-gradient(90deg,#c8ff03,#ceff02,#d3ff01,#d9ff01,#dfff00,#e4ff00,#eaff00,#f0ff00,#f6ff00,#fcff00,#fffc00,#fff600,#fff000,#ffea00,#ffe500,#ffe000)"></i><i style="left:0px;top:44px;width:225.2px;height:4.3px;background:linear-gradient(90deg,#c9ff03,#cfff02,#d5ff02,#daff01,#e0ff00,#e6ff00,#ecff00,#f2ff00,#f8ff00,#feff00,#fffa00,#fff400,#ffef00,#ffe900,#ffe400,#ffdf00)"></i><i style="left:0px;top:48px;width:225.2px;height:4.3px;background:linear-gradient(90deg,#cbff03,#d0ff03,#d6ff02,#dcff01,#e1ff00,#e7ff00,#edff00,#f3ff00,#f9ff00,#ff0,#fff900,#fff300,#ffed00,#ffe800,#ffe200,#fd0)"></i><i style="left:0px;top:52px;width:225.2px;height:4.3px;background:linear-gradient(90deg,#ccff04,#d1ff03,#d7ff02,#ddff01,#e3ff01,#e9ff00,#ef0,#f5ff00,#fbff00,#fffd00,#fff700,#fff100,#ffec00,#ffe600,#ffe100,#ffdc00)"></i><i style="left:0px;top:56px;width:225.2px;height:4.3px;background:linear-gradient(90deg,#cdff04,#d3ff03,#d8ff03,#deff02,#e4ff01,#eaff00,#f0ff00,#f6ff00,#fcff00,#fffc00,#fff600,#fff000,#ffea00,#ffe500,#ffe000,#ffdb00)"></i><i style="left:0px;top:60px;width:225.2px;height:4.3px;background:linear-gradient(90deg,#ceff05,#d4ff04,#daff03,#e0ff02,#e5ff01,#ebff01,#f1ff00,#f8ff00,#feff00,#fffa00,#fff400,#fe0,#ffe900,#ffe300,#ffde00,#ffd900)"></i><i style="left:0px;top:64px;width:225.2px;height:4.3px;background:linear-gradient(90deg,#d0ff05,#d5ff04,#dbff03,#e1ff03,#e7ff02,#edff01,#f3ff00,#f9ff00,#ff0,#fff900,#fff300,#ffed00,#ffe700,#ffe200,#fd0,#ffd800)"></i><i style="left:0px;top:68px;width:225.2px;height:4.3px;background:linear-gradient(90deg,#d1ff06,#d7ff05,#dcff04,#e2ff03,#e8ff02,#eeff01,#f4ff01,#fbff00,#fffd00,#fff700,#fff100,#ffec00,#ffe600,#ffe100,#ffdc00,#ffd700)"></i><i style="left:0px;top:72px;width:225.2px;height:4.3px;background:linear-gradient(90deg,#d2ff06,#d8ff05,#deff04,#e4ff03,#eaff03,#f0ff02,#f6ff01,#fcff00,#fffc00,#fff600,#fff000,#ffea00,#ffe500,#ffdf00,#ffda00,#ffd500)"></i><i style="left:0px;top:76px;width:225.2px;height:4.3px;background:linear-gradient(90deg,#d3ff06,#d9ff06,#dfff05,#e5ff04,#ebff03,#f1ff02,#f7ff01,#feff01,#fffa00,#fff400,#fe0,#ffe900,#ffe300,#ffde00,#ffd900,#ffd400)"></i><i style="left:0px;top:80px;width:225.2px;height:4.3px;background:linear-gradient(90deg,#d5ff07,#dbff06,#e0ff05,#e6ff04,#edff03,#f3ff03,#f9ff02,#ffff01,#fff900,#fff300,#ffed00,#ffe700,#ffe200,#fd0,#ffd800,#ffd300)"></i><i style="left:0px;top:84px;width:225.2px;height:4.3px;background:linear-gradient(90deg,#d6ff07,#dcff06,#e2ff06,#e8ff05,#eeff04,#f4ff03,#faff02,#fffd01,#fff701,#fff100,#ffeb00,#ffe600,#ffe000,#ffdb00,#ffd600,#ffd100)"></i><i style="left:0px;top:88px;width:225.2px;height:4.3px;background:linear-gradient(90deg,#d7ff08,#ddff07,#e3ff06,#e9ff05,#efff04,#f6ff03,#fcff03,#fffc02,#fff601,#fff000,#ffea00,#ffe400,#ffdf00,#ffda00,#ffd500,#ffd000)"></i><i style="left:0px;top:92px;width:225.2px;height:4.3px;background:linear-gradient(90deg,#d9ff08,#dfff07,#e5ff07,#ebff06,#f1ff05,#f7ff04,#feff03,#fffa02,#fff401,#fe0,#ffe900,#ffe300,#ffde00,#ffd900,#ffd400,#ffcf00)"></i><i style="left:0px;top:96px;width:225.2px;height:4.3px;background:linear-gradient(90deg,#daff09,#e0ff08,#e6ff07,#ecff06,#f2ff05,#f9ff04,#ffff03,#fff902,#fff302,#ffed01,#ffe700,#ffe200,#ffdc00,#ffd700,#ffd200,#ffce00)"></i><i style="left:0px;top:100px;width:225.2px;height:4.3px;background:linear-gradient(90deg,#dbff09,#e1ff08,#e8ff07,#eeff07,#f4ff06,#faff05,#fffd04,#fff703,#fff102,#ffeb01,#ffe600,#ffe000,#ffdb00,#ffd600,#ffd100,#fc0)"></i><i style="left:0px;top:104px;width:225.2px;height:4.3px;background:linear-gradient(90deg,#ddff0a,#e3ff09,#e9ff08,#efff07,#f5ff06,#fcff05,#fffc04,#fff603,#fff002,#ffea01,#ffe401,#ffdf00,#ffda00,#ffd500,#ffd000,#ffcb00)"></i><i style="left:0px;top:108px;width:225.2px;height:4.3px;background:linear-gradient(90deg,#deff0a,#e4ff09,#eaff08,#f1ff07,#f7ff07,#fdff06,#fffa05,#fff404,#ffee03,#ffe802,#ffe301,#fd0,#ffd800,#ffd300,#ffce00,#ffca00)"></i><i style="left:0px;top:112px;width:225.2px;height:4.3px;background:linear-gradient(90deg,#e0ff0b,#e6ff0a,#ecff09,#f2ff08,#f9ff07,#ffff06,#fff905,#fff304,#ffed03,#ffe702,#ffe101,#ffdc01,#ffd700,#ffd200,#ffcd00,#ffc800)"></i><i style="left:0px;top:116px;width:225.2px;height:4.3px;background:linear-gradient(90deg,#e1ff0b,#e7ff0a,#edff09,#f4ff08,#faff08,#fffd07,#fff705,#fff104,#ffeb03,#ffe503,#ffe002,#ffdb01,#ffd600,#ffd100,#fc0,#ffc700)"></i><i style="left:0px;top:120px;width:225.2px;height:4.3px;background:linear-gradient(90deg,#e2ff0c,#e9ff0b,#efff0a,#f5ff09,#fcff08,#fffc07,#fff606,#ffef05,#ffea04,#ffe403,#ffdf02,#ffd901,#ffd401,#ffcf00,#ffcb00,#ffc600)"></i><i style="left:0px;top:124px;width:225.2px;height:4.3px;background:linear-gradient(90deg,#e4ff0c,#eaff0b,#f0ff0a,#f7ff0a,#fdff09,#fffa07,#fff406,#ffee05,#ffe804,#ffe303,#ffdd02,#ffd802,#ffd301,#ffce00,#ffc900,#ffc500)"></i><i style="left:0px;top:128px;width:225.2px;height:4.3px;background:linear-gradient(90deg,#e5ff0d,#ecff0c,#f2ff0b,#f8ff0a,#ffff09,#fff908,#fff207,#ffec06,#ffe705,#ffe104,#ffdc03,#ffd702,#ffd201,#ffcd01,#ffc800,#ffc300)"></i><i style="left:0px;top:132px;width:225.2px;height:4.3px;background:linear-gradient(90deg,#e7ff0e,#edff0d,#f4ff0c,#faff0b,#fffd0a,#fff708,#fff107,#ffeb06,#ffe505,#ffe004,#ffda03,#ffd502,#ffd002,#ffcb01,#ffc700,#ffc200)"></i><i style="left:0px;top:136px;width:225.2px;height:4.3px;background:linear-gradient(90deg,#e8ff0e,#efff0d,#f5ff0c,#fcff0b,#fffc0a,#fff509,#ffef08,#ffe906,#ffe405,#ffde04,#ffd904,#ffd403,#ffcf02,#ffca01,#ffc500,#ffc100)"></i><i style="left:0px;top:140px;width:225.2px;height:4.3px;background:linear-gradient(90deg,#eaff0f,#f0ff0e,#f7ff0d,#fdff0c,#fffa0a,#fff409,#ffee08,#ffe807,#ffe206,#ffdd05,#ffd804,#ffd203,#ffce02,#ffc901,#ffc401,#ffc000)"></i><i style="left:0px;top:144px;width:225.2px;height:3.3px;background:linear-gradient(90deg,#ebff0f,#f2ff0e,#f8ff0d,#ffff0c,#fff90b,#fff30a,#ffed08,#ffe707,#ffe106,#ffdc05,#ffd604,#ffd103,#ffcc03,#ffc802,#ffc301,#ffbf00)"></i><svg style="left:0;top:0" width="225.2" height="147"><path fill-rule="evenodd" fill="rgba(0,0,0,.4)" d="M-5-5H230.2V152H-5zM1203.29 708.25 -665.87 -379.55 -1183.83 1472.65z"/></svg></div></div>
<svg style="left:1770px;top:598px" width="42" height="29" viewBox="1770 598 42 29"><rect x="1778.1" y="603.3" width="15.2" height="15.2" fill="none" stroke="#fff" stroke-width="1.6"/><circle cx="1800.9" cy="615.3" r="4.7" fill="#fe0" stroke="#111" stroke-width="1.5"/></svg>
<div style="left:1607px;top:698px;width:296px;height:30.5px;background:#343434"></div>
<span class="t" style="left:1613.5px;top:703.35px;font-size:22.5px;color:#f4f4f4;transform:scaleX(0.872);">RGB</span>
<span class="t" style="left:1664.2px;top:703.35px;font-size:22.5px;color:#f4f4f4;transform:scaleX(1.045);">Triplet:</span>
<span class="t" style="left:1743.3px;top:703.35px;font-size:22.5px;color:#f4f4f4;transform:scaleX(1.012);">255, 255, 0</span>
<div style="left:369.5px;top:792px;width:1545.5px;height:260.5px;background:#1c1c1c"></div>
<div style="left:371px;top:793px;width:1543px;height:259px;overflow:hidden"><div style="left:-371px;top:-793px;width:1920px;height:1146px">
<div style="left:371px;top:793px;width:1545px;height:28.7px;background:linear-gradient(#3e3e3e 0,#383838 46%,#1a1a1a 50%,#222 100%)"></div>
<div style="left:371px;top:821.7px;width:1545px;height:26.96px;background:#474747"></div>
<span class="t" style="left:388px;top:827.96px;font-size:15.4px;color:#f2f2f2;font-weight:700;transform:scaleX(1.347);">x: CIE31</span>
<div style="left:371px;top:848.46px;width:1545px;height:26.96px;background:#818181"></div>
<span class="t" style="left:388px;top:854.72px;font-size:15.4px;color:#f2f2f2;font-weight:700;transform:scaleX(1.347);">y: CIE31</span>
<div style="left:371px;top:875.22px;width:1545px;height:26.96px;background:#474747"></div>
<span class="t" style="left:388px;top:881.48px;font-size:15.4px;color:#f2f2f2;font-weight:700;transform:scaleX(1.266);">Y</span>
<div style="left:371px;top:901.98px;width:1545px;height:26.96px;background:#818181"></div>
<span class="t" style="left:388px;top:908.24px;font-size:15.4px;color:#f2f2f2;font-weight:700;transform:scaleX(1.406);">Target x:CIE31</span>
<div style="left:371px;top:928.74px;width:1545px;height:26.96px;background:#474747"></div>
<span class="t" style="left:388px;top:935px;font-size:15.4px;color:#f2f2f2;font-weight:700;transform:scaleX(1.406);">Target y:CIE31</span>
<div style="left:371px;top:955.5px;width:1545px;height:26.96px;background:#818181"></div>
<span class="t" style="left:388px;top:961.76px;font-size:15.4px;color:#f2f2f2;font-weight:700;transform:scaleX(1.451);">Target Y</span>
<div style="left:371px;top:982.26px;width:1545px;height:26.96px;background:#474747"></div>
<span class="t" style="left:388px;top:988.52px;font-size:15.4px;color:#f2f2f2;font-weight:700;transform:scaleX(1.439);">ΔE 2000</span>
<div style="left:371px;top:1009.02px;width:1545px;height:26.96px;background:#818181"></div>
<span class="t" style="left:388px;top:1015.28px;font-size:15.4px;color:#f2f2f2;font-weight:700;transform:scaleX(1.387);">ΔE ITP</span>
<span class="t" style="left:586.93px;top:799.56px;font-size:15.4px;color:#f2f2f2;transform:scaleX(1.383);transform-origin:50% 0;">White</span>
<span class="t" style="left:561.8px;top:827.96px;font-size:15.4px;color:#f2f2f2;transform:scaleX(1.385);">0,3129</span>
<span class="t" style="left:561.8px;top:854.72px;font-size:15.4px;color:#f2f2f2;transform:scaleX(1.385);">0,3285</span>
<span class="t" style="left:561.8px;top:881.48px;font-size:15.4px;color:#f2f2f2;transform:scaleX(1.385);">382,0898</span>
<span class="t" style="left:561.8px;top:908.24px;font-size:15.4px;color:#f2f2f2;transform:scaleX(1.385);">0,3127</span>
<span class="t" style="left:561.8px;top:935px;font-size:15.4px;color:#f2f2f2;transform:scaleX(1.385);">0,3290</span>
<span class="t" style="left:561.8px;top:961.76px;font-size:15.4px;color:#f2f2f2;transform:scaleX(1.385);">382,0898</span>
<span class="t" style="left:561.8px;top:988.52px;font-size:15.4px;color:#f2f2f2;transform:scaleX(1.385);">0,5317</span>
<span class="t" style="left:561.8px;top:1015.28px;font-size:15.4px;color:#f2f2f2;transform:scaleX(1.385);">0,3184</span>
<span class="t" style="left:680.62px;top:799.56px;font-size:15.4px;color:#f2f2f2;transform:scaleX(1.277);transform-origin:50% 0;">Gray 80</span>
<span class="t" style="left:663.1px;top:827.96px;font-size:15.4px;color:#f2f2f2;transform:scaleX(1.385);">0,3128</span>
<span class="t" style="left:663.1px;top:854.72px;font-size:15.4px;color:#f2f2f2;transform:scaleX(1.385);">0,3285</span>
<span class="t" style="left:663.1px;top:881.48px;font-size:15.4px;color:#f2f2f2;transform:scaleX(1.385);">298,0787</span>
<span class="t" style="left:663.1px;top:908.24px;font-size:15.4px;color:#f2f2f2;transform:scaleX(1.385);">0,3127</span>
<span class="t" style="left:663.1px;top:935px;font-size:15.4px;color:#f2f2f2;transform:scaleX(1.385);">0,3290</span>
<span class="t" style="left:663.1px;top:961.76px;font-size:15.4px;color:#f2f2f2;transform:scaleX(1.385);">298,2745</span>
<span class="t" style="left:663.1px;top:988.52px;font-size:15.4px;color:#f2f2f2;transform:scaleX(1.385);">0,4481</span>
<span class="t" style="left:663.1px;top:1015.28px;font-size:15.4px;color:#f2f2f2;transform:scaleX(1.385);">0,2852</span>
<span class="t" style="left:781.83px;top:799.56px;font-size:15.4px;color:#f2f2f2;transform:scaleX(1.269);transform-origin:50% 0;">Gray 65</span>
<span class="t" style="left:764.2px;top:827.96px;font-size:15.4px;color:#f2f2f2;transform:scaleX(1.385);">0,3129</span>
<span class="t" style="left:764.2px;top:854.72px;font-size:15.4px;color:#f2f2f2;transform:scaleX(1.385);">0,3291</span>
<span class="t" style="left:764.2px;top:881.48px;font-size:15.4px;color:#f2f2f2;transform:scaleX(1.385);">236,9524</span>
<span class="t" style="left:764.2px;top:908.24px;font-size:15.4px;color:#f2f2f2;transform:scaleX(1.385);">0,3127</span>
<span class="t" style="left:764.2px;top:935px;font-size:15.4px;color:#f2f2f2;transform:scaleX(1.385);">0,3290</span>
<span class="t" style="left:764.2px;top:961.76px;font-size:15.4px;color:#f2f2f2;transform:scaleX(1.385);">237,0394</span>
<span class="t" style="left:764.2px;top:988.52px;font-size:15.4px;color:#f2f2f2;transform:scaleX(1.385);">0,1195</span>
<span class="t" style="left:764.2px;top:1015.28px;font-size:15.4px;color:#f2f2f2;transform:scaleX(1.385);">0,1459</span>
<span class="t" style="left:883.12px;top:799.56px;font-size:15.4px;color:#f2f2f2;transform:scaleX(1.284);transform-origin:50% 0;">Gray 50</span>
<span class="t" style="left:865.4px;top:827.96px;font-size:15.4px;color:#f2f2f2;transform:scaleX(1.385);">0,3129</span>
<span class="t" style="left:865.4px;top:854.72px;font-size:15.4px;color:#f2f2f2;transform:scaleX(1.385);">0,3288</span>
<span class="t" style="left:865.4px;top:881.48px;font-size:15.4px;color:#f2f2f2;transform:scaleX(1.385);">178,8111</span>
<span class="t" style="left:865.4px;top:908.24px;font-size:15.4px;color:#f2f2f2;transform:scaleX(1.385);">0,3127</span>
<span class="t" style="left:865.4px;top:935px;font-size:15.4px;color:#f2f2f2;transform:scaleX(1.385);">0,3290</span>
<span class="t" style="left:865.4px;top:961.76px;font-size:15.4px;color:#f2f2f2;transform:scaleX(1.385);">179,1847</span>
<span class="t" style="left:865.4px;top:988.52px;font-size:15.4px;color:#f2f2f2;transform:scaleX(1.385);">0,2709</span>
<span class="t" style="left:865.4px;top:1015.28px;font-size:15.4px;color:#f2f2f2;transform:scaleX(1.385);">0,2573</span>
<span class="t" style="left:984.23px;top:799.56px;font-size:15.4px;color:#f2f2f2;transform:scaleX(1.277);transform-origin:50% 0;">Gray 35</span>
<span class="t" style="left:967px;top:827.96px;font-size:15.4px;color:#f2f2f2;transform:scaleX(1.385);">0,3122</span>
<span class="t" style="left:967px;top:854.72px;font-size:15.4px;color:#f2f2f2;transform:scaleX(1.385);">0,3291</span>
<span class="t" style="left:967px;top:881.48px;font-size:15.4px;color:#f2f2f2;transform:scaleX(1.385);">120,2945</span>
<span class="t" style="left:967px;top:908.24px;font-size:15.4px;color:#f2f2f2;transform:scaleX(1.385);">0,3127</span>
<span class="t" style="left:967px;top:935px;font-size:15.4px;color:#f2f2f2;transform:scaleX(1.385);">0,3290</span>
<span class="t" style="left:967px;top:961.76px;font-size:15.4px;color:#f2f2f2;transform:scaleX(1.385);">121,1288</span>
<span class="t" style="left:967px;top:988.52px;font-size:15.4px;color:#f2f2f2;transform:scaleX(1.385);">0,3653</span>
<span class="t" style="left:967px;top:1015.28px;font-size:15.4px;color:#f2f2f2;transform:scaleX(1.385);">0,6320</span>
<span class="t" style="left:1081.78px;top:799.56px;font-size:15.4px;color:#f2f2f2;transform:scaleX(1.251);transform-origin:50% 0;">Black</span>
<span class="t" style="left:1068.1px;top:827.96px;font-size:15.4px;color:#f2f2f2;transform:scaleX(1.385);">0,3333</span>
<span class="t" style="left:1068.1px;top:854.72px;font-size:15.4px;color:#f2f2f2;transform:scaleX(1.385);">0,3333</span>
<span class="t" style="left:1068.1px;top:881.48px;font-size:15.4px;color:#f2f2f2;transform:scaleX(1.385);">0,0000</span>
<span class="t" style="left:1068.1px;top:908.24px;font-size:15.4px;color:#f2f2f2;transform:scaleX(1.385);">0,3127</span>
<span class="t" style="left:1068.1px;top:935px;font-size:15.4px;color:#f2f2f2;transform:scaleX(1.385);">0,3290</span>
<span class="t" style="left:1068.1px;top:961.76px;font-size:15.4px;color:#f2f2f2;transform:scaleX(1.385);">0,0000</span>
<span class="t" style="left:1068.1px;top:988.52px;font-size:15.4px;color:#f2f2f2;transform:scaleX(1.385);">0,0000</span>
<span class="t" style="left:1068.1px;top:1015.28px;font-size:15.4px;color:#f2f2f2;transform:scaleX(1.385);">0,0057</span>
<span class="t" style="left:1153.94px;top:799.56px;font-size:15.4px;color:#f2f2f2;transform:scaleX(1.274);transform-origin:50% 0;">Dark Skin</span>
<span class="t" style="left:1144.9px;top:827.96px;font-size:15.4px;color:#f2f2f2;transform:scaleX(1.385);">0,4262</span>
<span class="t" style="left:1144.9px;top:854.72px;font-size:15.4px;color:#f2f2f2;transform:scaleX(1.385);">0,3629</span>
<span class="t" style="left:1144.9px;top:881.48px;font-size:15.4px;color:#f2f2f2;transform:scaleX(1.385);">31,3329</span>
<span class="t" style="left:1144.9px;top:908.24px;font-size:15.4px;color:#f2f2f2;transform:scaleX(1.385);">0,4156</span>
<span class="t" style="left:1144.9px;top:935px;font-size:15.4px;color:#f2f2f2;transform:scaleX(1.385);">0,3633</span>
<span class="t" style="left:1144.9px;top:961.76px;font-size:15.4px;color:#f2f2f2;transform:scaleX(1.385);">30,3068</span>
<span class="t" style="left:1144.9px;top:988.52px;font-size:15.4px;color:#f2f2f2;transform:scaleX(1.385);">1,5834</span>
<span class="t" style="left:1144.9px;top:1015.28px;font-size:15.4px;color:#f2f2f2;transform:scaleX(1.385);">6,4451</span>
<span class="t" style="left:1252.7px;top:799.56px;font-size:15.4px;color:#f2f2f2;transform:scaleX(1.268);transform-origin:50% 0;">Light Skin</span>
<span class="t" style="left:1241.6px;top:827.96px;font-size:15.4px;color:#f2f2f2;transform:scaleX(1.385);">0,3913</span>
<span class="t" style="left:1241.6px;top:854.72px;font-size:15.4px;color:#f2f2f2;transform:scaleX(1.385);">0,3557</span>
<span class="t" style="left:1241.6px;top:881.48px;font-size:15.4px;color:#f2f2f2;transform:scaleX(1.385);">124,1315</span>
<span class="t" style="left:1241.6px;top:908.24px;font-size:15.4px;color:#f2f2f2;transform:scaleX(1.385);">0,3853</span>
<span class="t" style="left:1241.6px;top:935px;font-size:15.4px;color:#f2f2f2;transform:scaleX(1.385);">0,3556</span>
<span class="t" style="left:1241.6px;top:961.76px;font-size:15.4px;color:#f2f2f2;transform:scaleX(1.385);">121,3480</span>
<span class="t" style="left:1241.6px;top:988.52px;font-size:15.4px;color:#f2f2f2;transform:scaleX(1.385);">1,3521</span>
<span class="t" style="left:1241.6px;top:1015.28px;font-size:15.4px;color:#f2f2f2;transform:scaleX(1.385);">4,1118</span>
<span class="t" style="left:1351.33px;top:799.56px;font-size:15.4px;color:#f2f2f2;transform:scaleX(1.244);transform-origin:50% 0;">Blue Sky</span>
<span class="t" style="left:1343.1px;top:827.96px;font-size:15.4px;color:#f2f2f2;transform:scaleX(1.385);">0,2360</span>
<span class="t" style="left:1343.1px;top:854.72px;font-size:15.4px;color:#f2f2f2;transform:scaleX(1.385);">0,2599</span>
<span class="t" style="left:1343.1px;top:881.48px;font-size:15.4px;color:#f2f2f2;transform:scaleX(1.385);">61,9963</span>
<span class="t" style="left:1343.1px;top:908.24px;font-size:15.4px;color:#f2f2f2;transform:scaleX(1.385);">0,2430</span>
<span class="t" style="left:1343.1px;top:935px;font-size:15.4px;color:#f2f2f2;transform:scaleX(1.385);">0,2606</span>
<span class="t" style="left:1343.1px;top:961.76px;font-size:15.4px;color:#f2f2f2;transform:scaleX(1.385);">62,9701</span>
<span class="t" style="left:1343.1px;top:988.52px;font-size:15.4px;color:#f2f2f2;transform:scaleX(1.385);">2,3236</span>
<span class="t" style="left:1343.1px;top:1015.28px;font-size:15.4px;color:#f2f2f2;transform:scaleX(1.385);">5,4858</span>
<span class="t" style="left:1445.46px;top:799.56px;font-size:15.4px;color:#f2f2f2;transform:scaleX(1.256);transform-origin:50% 0;">Foliage</span>
<span class="t" style="left:1431.7px;top:827.96px;font-size:15.4px;color:#f2f2f2;transform:scaleX(1.385);">0,3379</span>
<span class="t" style="left:1431.7px;top:854.72px;font-size:15.4px;color:#f2f2f2;transform:scaleX(1.385);">0,4469</span>
<span class="t" style="left:1431.7px;top:881.48px;font-size:15.4px;color:#f2f2f2;transform:scaleX(1.385);">42,0484</span>
<span class="t" style="left:1431.7px;top:908.24px;font-size:15.4px;color:#f2f2f2;transform:scaleX(1.385);">0,3402</span>
<span class="t" style="left:1431.7px;top:935px;font-size:15.4px;color:#f2f2f2;transform:scaleX(1.385);">0,4416</span>
<span class="t" style="left:1431.7px;top:961.76px;font-size:15.4px;color:#f2f2f2;transform:scaleX(1.385);">41,8630</span>
<span class="t" style="left:1431.7px;top:988.52px;font-size:15.4px;color:#f2f2f2;transform:scaleX(1.385);">0,8071</span>
<span class="t" style="left:1431.7px;top:1015.28px;font-size:15.4px;color:#f2f2f2;transform:scaleX(1.385);">2,4096</span>
<span class="t" style="left:1533.87px;top:799.56px;font-size:15.4px;color:#f2f2f2;transform:scaleX(1.314);transform-origin:50% 0;">Blue Flower</span>
<span class="t" style="left:1521.1px;top:827.96px;font-size:15.4px;color:#f2f2f2;transform:scaleX(1.385);">0,2609</span>
<span class="t" style="left:1521.1px;top:854.72px;font-size:15.4px;color:#f2f2f2;transform:scaleX(1.385);">0,2469</span>
<span class="t" style="left:1521.1px;top:881.48px;font-size:15.4px;color:#f2f2f2;transform:scaleX(1.385);">78,3488</span>
<span class="t" style="left:1521.1px;top:908.24px;font-size:15.4px;color:#f2f2f2;transform:scaleX(1.385);">0,2633</span>
<span class="t" style="left:1521.1px;top:935px;font-size:15.4px;color:#f2f2f2;transform:scaleX(1.385);">0,2473</span>
<span class="t" style="left:1521.1px;top:961.76px;font-size:15.4px;color:#f2f2f2;transform:scaleX(1.385);">78,8924</span>
<span class="t" style="left:1521.1px;top:988.52px;font-size:15.4px;color:#f2f2f2;transform:scaleX(1.385);">0,7654</span>
<span class="t" style="left:1521.1px;top:1015.28px;font-size:15.4px;color:#f2f2f2;transform:scaleX(1.385);">1,9257</span>
<span class="t" style="left:1653.51px;top:799.56px;font-size:15.4px;color:#f2f2f2;transform:scaleX(1.292);transform-origin:50% 0;">Bluish Green</span>
<span class="t" style="left:1640.5px;top:827.96px;font-size:15.4px;color:#f2f2f2;transform:scaleX(1.385);">0,2485</span>
<span class="t" style="left:1640.5px;top:854.72px;font-size:15.4px;color:#f2f2f2;transform:scaleX(1.385);">0,3592</span>
<span class="t" style="left:1640.5px;top:881.48px;font-size:15.4px;color:#f2f2f2;transform:scaleX(1.385);">147,1078</span>
<span class="t" style="left:1640.5px;top:908.24px;font-size:15.4px;color:#f2f2f2;transform:scaleX(1.385);">0,2581</span>
<span class="t" style="left:1640.5px;top:935px;font-size:15.4px;color:#f2f2f2;transform:scaleX(1.385);">0,3585</span>
<span class="t" style="left:1640.5px;top:961.76px;font-size:15.4px;color:#f2f2f2;transform:scaleX(1.385);">150,4699</span>
<span class="t" style="left:1640.5px;top:988.52px;font-size:15.4px;color:#f2f2f2;transform:scaleX(1.385);">1,8299</span>
<span class="t" style="left:1640.5px;top:1015.28px;font-size:15.4px;color:#f2f2f2;transform:scaleX(1.385);">6,3686</span>
<span class="t" style="left:1786.93px;top:799.56px;font-size:15.4px;color:#f2f2f2;transform:scaleX(1.274);transform-origin:50% 0;">Orange</span>
<span class="t" style="left:1767.7px;top:827.96px;font-size:15.4px;color:#f2f2f2;transform:scaleX(1.385);">0,5361</span>
<span class="t" style="left:1767.7px;top:854.72px;font-size:15.4px;color:#f2f2f2;transform:scaleX(1.385);">0,4044</span>
<span class="t" style="left:1767.7px;top:881.48px;font-size:15.4px;color:#f2f2f2;transform:scaleX(1.385);">105,7511</span>
<span class="t" style="left:1767.7px;top:908.24px;font-size:15.4px;color:#f2f2f2;transform:scaleX(1.385);">0,5279</span>
<span class="t" style="left:1767.7px;top:935px;font-size:15.4px;color:#f2f2f2;transform:scaleX(1.385);">0,4070</span>
<span class="t" style="left:1767.7px;top:961.76px;font-size:15.4px;color:#f2f2f2;transform:scaleX(1.385);">99,9452</span>
<span class="t" style="left:1767.7px;top:988.52px;font-size:15.4px;color:#f2f2f2;transform:scaleX(1.385);">1,8025</span>
<span class="t" style="left:1767.7px;top:1015.28px;font-size:15.4px;color:#f2f2f2;transform:scaleX(1.385);">7,5684</span>
<span class="t" style="left:1878.66px;top:799.56px;font-size:15.4px;color:#f2f2f2;transform:scaleX(1.235);transform-origin:50% 0;">Purplish Blue</span>
<span class="t" style="left:1869.2px;top:827.96px;font-size:15.4px;color:#f2f2f2;transform:scaleX(1.385);">0,1960</span>
<span class="t" style="left:1869.2px;top:854.72px;font-size:15.4px;color:#f2f2f2;transform:scaleX(1.385);">0,1735</span>
<span class="t" style="left:1869.2px;top:881.48px;font-size:15.4px;color:#f2f2f2;transform:scaleX(1.385);">35,2934</span>
<span class="t" style="left:1869.2px;top:908.24px;font-size:15.4px;color:#f2f2f2;transform:scaleX(1.385);">0,2060</span>
<span class="t" style="left:1869.2px;top:935px;font-size:15.4px;color:#f2f2f2;transform:scaleX(1.385);">0,1790</span>
<span class="t" style="left:1869.2px;top:961.76px;font-size:15.4px;color:#f2f2f2;transform:scaleX(1.385);">37,2744</span>
<span class="t" style="left:1869.2px;top:988.52px;font-size:15.4px;color:#f2f2f2;transform:scaleX(1.385);">2,1040</span>
<span class="t" style="left:1869.2px;top:1015.28px;font-size:15.4px;color:#f2f2f2;transform:scaleX(1.385);">9,8352</span>
<div style="left:371px;top:1035.8px;width:1545px;height:16.4px;background:#5a5a5a"></div>
<div style="left:395.5px;top:1037px;width:680px;height:14.5px;background:#434343;border-radius:7.5px"></div>
<div style="left:372.5px;top:1037px;width:19px;height:14.5px;background:#8a8a8a;border-radius:3px"></div>
<svg style="left:377px;top:1039px" width="10" height="11" viewBox="0 0 10 11"><path d="M8 1L2 5.5 8 10z" fill="#333"/></svg>
<div style="left:1898px;top:1037px;width:15px;height:14.5px;background:#8a8a8a;border-radius:3px"></div>
<svg style="left:1901px;top:1039px" width="10" height="11" viewBox="0 0 10 11"><path d="M2 1l6 4.5L2 10z" fill="#333"/></svg>
</div></div>
<div style="left:0;top:1070px;width:1555.5px;height:76px;overflow:hidden">
<div style="left:-21.7px;top:6.2px;width:56px;height:55px;background:linear-gradient(#969696,#878787 40%,#5e5e5e);border-radius:6px;box-shadow:inset 0 1px 0 #a6a6a6,0 0 0 1.2px #262626"></div>
<div style="left:-16.1px;top:11.6px;width:44.8px;height:27.6px;background:#b4b4b4;border-radius:4.5px;box-shadow:inset 1.5px 1.5px 1.5px rgba(0,0,0,.35)"></div>
<span class="t" style="left:-12.77px;top:47.9px;font-size:10.4px;color:#262626;font-weight:700;transform-origin:50% 0;transform:scaleX(1.13);">Gray 50</span>
<div style="left:36.8px;top:6.2px;width:56px;height:55px;background:linear-gradient(#969696,#878787 40%,#5e5e5e);border-radius:6px;box-shadow:inset 0 1px 0 #a6a6a6,0 0 0 1.2px #262626"></div>
<div style="left:42.4px;top:11.6px;width:44.8px;height:27.6px;background:#999;border-radius:4.5px;box-shadow:inset 1.5px 1.5px 1.5px rgba(0,0,0,.35)"></div>
<span class="t" style="left:45.73px;top:47.9px;font-size:10.4px;color:#262626;font-weight:700;transform-origin:50% 0;transform:scaleX(1.13);">Gray 35</span>
<div style="left:95.3px;top:6.2px;width:56px;height:55px;background:linear-gradient(#969696,#878787 40%,#5e5e5e);border-radius:6px;box-shadow:inset 0 1px 0 #a6a6a6,0 0 0 1.2px #262626"></div>
<div style="left:100.9px;top:11.6px;width:44.8px;height:27.6px;background:#000;border-radius:4.5px;box-shadow:inset 1.5px 1.5px 1.5px rgba(0,0,0,.35)"></div>
<span class="t" style="left:109.43px;top:47.9px;font-size:10.4px;color:#262626;font-weight:700;transform-origin:50% 0;transform:scaleX(1.13);">Black</span>
<div style="left:153.8px;top:6.2px;width:56px;height:55px;background:linear-gradient(#969696,#878787 40%,#5e5e5e);border-radius:6px;box-shadow:inset 0 1px 0 #a6a6a6,0 0 0 1.2px #262626"></div>
<div style="left:159.4px;top:11.6px;width:44.8px;height:27.6px;background:#6f5044;border-radius:4.5px;box-shadow:inset 1.5px 1.5px 1.5px rgba(0,0,0,.35)"></div>
<span class="t" style="left:157.83px;top:47.9px;font-size:10.4px;color:#262626;font-weight:700;transform-origin:50% 0;transform:scaleX(1.06);">Dark Skin</span>
<div style="left:212.3px;top:6.2px;width:56px;height:55px;background:linear-gradient(#969696,#878787 40%,#5e5e5e);border-radius:6px;box-shadow:inset 0 1px 0 #a6a6a6,0 0 0 1.2px #262626"></div>
<div style="left:217.9px;top:11.6px;width:44.8px;height:27.6px;background:#c09884;border-radius:4.5px;box-shadow:inset 1.5px 1.5px 1.5px rgba(0,0,0,.35)"></div>
<span class="t" style="left:215.19px;top:47.9px;font-size:10.4px;color:#262626;font-weight:700;transform-origin:50% 0;transform:scaleX(1.06);">Light Skin</span>
<div style="left:270.8px;top:6.2px;width:56px;height:55px;background:linear-gradient(#969696,#878787 40%,#5e5e5e);border-radius:6px;box-shadow:inset 0 1px 0 #a6a6a6,0 0 0 1.2px #262626"></div>
<div style="left:276.4px;top:11.6px;width:44.8px;height:27.6px;background:#5f7ca0;border-radius:4.5px;box-shadow:inset 1.5px 1.5px 1.5px rgba(0,0,0,.35)"></div>
<span class="t" style="left:276.85px;top:47.9px;font-size:10.4px;color:#262626;font-weight:700;transform-origin:50% 0;transform:scaleX(1.13);">Blue Sky</span>
<div style="left:329.3px;top:6.2px;width:56px;height:55px;background:linear-gradient(#969696,#878787 40%,#5e5e5e);border-radius:6px;box-shadow:inset 0 1px 0 #a6a6a6,0 0 0 1.2px #262626"></div>
<div style="left:334.9px;top:11.6px;width:44.8px;height:27.6px;background:#5a6b44;border-radius:4.5px;box-shadow:inset 1.5px 1.5px 1.5px rgba(0,0,0,.35)"></div>
<span class="t" style="left:339.11px;top:47.9px;font-size:10.4px;color:#262626;font-weight:700;transform-origin:50% 0;transform:scaleX(1.13);">Foliage</span>
<div style="left:387.8px;top:6.2px;width:56px;height:55px;background:linear-gradient(#969696,#878787 40%,#5e5e5e);border-radius:6px;box-shadow:inset 0 1px 0 #a6a6a6,0 0 0 1.2px #262626"></div>
<div style="left:393.4px;top:11.6px;width:44.8px;height:14px;background:#8480b0;border-radius:4.5px;box-shadow:inset 1.5px 1.5px 1.5px rgba(0,0,0,.35)"></div>
<span class="t" style="left:396.87px;top:34.5px;font-size:10.4px;color:#262626;font-weight:700;transform:scaleX(1.13);">Blue</span>
<span class="t" style="left:396.87px;top:47.9px;font-size:10.4px;color:#262626;font-weight:700;transform:scaleX(1.13);">Flower</span>
<div style="left:446.3px;top:6.2px;width:56px;height:55px;background:linear-gradient(#969696,#878787 40%,#5e5e5e);border-radius:6px;box-shadow:inset 0 1px 0 #a6a6a6,0 0 0 1.2px #262626"></div>
<div style="left:451.9px;top:11.6px;width:44.8px;height:14px;background:#76c0aa;border-radius:4.5px;box-shadow:inset 1.5px 1.5px 1.5px rgba(0,0,0,.35)"></div>
<span class="t" style="left:456.35px;top:34.5px;font-size:10.4px;color:#262626;font-weight:700;transform:scaleX(1.13);">Bluish</span>
<span class="t" style="left:456.35px;top:47.9px;font-size:10.4px;color:#262626;font-weight:700;transform:scaleX(1.13);">Green</span>
<div style="left:504.8px;top:6.2px;width:56px;height:55px;background:linear-gradient(#969696,#878787 40%,#5e5e5e);border-radius:6px;box-shadow:inset 0 1px 0 #a6a6a6,0 0 0 1.2px #262626"></div>
<div style="left:510.4px;top:11.6px;width:44.8px;height:27.6px;background:#d4803c;border-radius:4.5px;box-shadow:inset 1.5px 1.5px 1.5px rgba(0,0,0,.35)"></div>
<span class="t" style="left:514.6px;top:47.9px;font-size:10.4px;color:#262626;font-weight:700;transform-origin:50% 0;transform:scaleX(1.13);">Orange</span>
<div style="left:563.3px;top:6.2px;width:56px;height:55px;background:linear-gradient(#969696,#878787 40%,#5e5e5e);border-radius:6px;box-shadow:inset 0 1px 0 #a6a6a6,0 0 0 1.2px #262626"></div>
<div style="left:568.9px;top:11.6px;width:44.8px;height:14px;background:#4a58a8;border-radius:4.5px;box-shadow:inset 1.5px 1.5px 1.5px rgba(0,0,0,.35)"></div>
<span class="t" style="left:567.81px;top:34.5px;font-size:10.4px;color:#262626;font-weight:700;transform:scaleX(1.13);">Purplish</span>
<span class="t" style="left:567.81px;top:47.9px;font-size:10.4px;color:#262626;font-weight:700;transform:scaleX(1.13);">Blue</span>
<div style="left:621.8px;top:6.2px;width:56px;height:55px;background:linear-gradient(#969696,#878787 40%,#5e5e5e);border-radius:6px;box-shadow:inset 0 1px 0 #a6a6a6,0 0 0 1.2px #262626"></div>
<div style="left:627.4px;top:11.6px;width:44.8px;height:14px;background:#d0606c;border-radius:4.5px;box-shadow:inset 1.5px 1.5px 1.5px rgba(0,0,0,.35)"></div>
<span class="t" style="left:623.7px;top:34.5px;font-size:10.4px;color:#262626;font-weight:700;transform:scaleX(1.13);">Moderate</span>
<span class="t" style="left:623.7px;top:47.9px;font-size:10.4px;color:#262626;font-weight:700;transform:scaleX(1.13);">Red</span>
<div style="left:680.3px;top:6.2px;width:56px;height:55px;background:linear-gradient(#969696,#878787 40%,#5e5e5e);border-radius:6px;box-shadow:inset 0 1px 0 #a6a6a6,0 0 0 1.2px #262626"></div>
<div style="left:685.9px;top:11.6px;width:44.8px;height:27.6px;background:#5a3e6c;border-radius:4.5px;box-shadow:inset 1.5px 1.5px 1.5px rgba(0,0,0,.35)"></div>
<span class="t" style="left:692.13px;top:47.9px;font-size:10.4px;color:#262626;font-weight:700;transform-origin:50% 0;transform:scaleX(1.13);">Purple</span>
<div style="left:738.8px;top:6.2px;width:56px;height:55px;background:linear-gradient(#969696,#878787 40%,#5e5e5e);border-radius:6px;box-shadow:inset 0 1px 0 #a6a6a6,0 0 0 1.2px #262626"></div>
<div style="left:744.4px;top:11.6px;width:44.8px;height:14px;background:#a8c050;border-radius:4.5px;box-shadow:inset 1.5px 1.5px 1.5px rgba(0,0,0,.35)"></div>
<span class="t" style="left:748.53px;top:34.5px;font-size:10.4px;color:#262626;font-weight:700;transform:scaleX(1.13);">Yellow</span>
<span class="t" style="left:748.53px;top:47.9px;font-size:10.4px;color:#262626;font-weight:700;transform:scaleX(1.13);">Green</span>
<div style="left:797.3px;top:6.2px;width:56px;height:55px;background:linear-gradient(#969696,#878787 40%,#5e5e5e);border-radius:6px;box-shadow:inset 0 1px 0 #a6a6a6,0 0 0 1.2px #262626"></div>
<div style="left:802.9px;top:11.6px;width:44.8px;height:14px;background:#e4a848;border-radius:4.5px;box-shadow:inset 1.5px 1.5px 1.5px rgba(0,0,0,.35)"></div>
<span class="t" style="left:804.74px;top:34.5px;font-size:10.4px;color:#262626;font-weight:700;transform:scaleX(1.13);">Orange</span>
<span class="t" style="left:804.74px;top:47.9px;font-size:10.4px;color:#262626;font-weight:700;transform:scaleX(1.13);">Yellow</span>
<div style="left:855.8px;top:6.2px;width:56px;height:55px;background:linear-gradient(#969696,#878787 40%,#5e5e5e);border-radius:6px;box-shadow:inset 0 1px 0 #a6a6a6,0 0 0 1.2px #262626"></div>
<div style="left:861.4px;top:11.6px;width:44.8px;height:27.6px;background:#383c98;border-radius:4.5px;box-shadow:inset 1.5px 1.5px 1.5px rgba(0,0,0,.35)"></div>
<span class="t" style="left:872.53px;top:47.9px;font-size:10.4px;color:#262626;font-weight:700;transform-origin:50% 0;transform:scaleX(1.13);">Blue</span>
<div style="left:914.3px;top:6.2px;width:56px;height:55px;background:linear-gradient(#969696,#878787 40%,#5e5e5e);border-radius:6px;box-shadow:inset 0 1px 0 #a6a6a6,0 0 0 1.2px #262626"></div>
<div style="left:919.9px;top:11.6px;width:44.8px;height:27.6px;background:#5a9850;border-radius:4.5px;box-shadow:inset 1.5px 1.5px 1.5px rgba(0,0,0,.35)"></div>
<span class="t" style="left:927.28px;top:47.9px;font-size:10.4px;color:#262626;font-weight:700;transform-origin:50% 0;transform:scaleX(1.13);">Green</span>
<div style="left:972.8px;top:6.2px;width:56px;height:55px;background:linear-gradient(#969696,#878787 40%,#5e5e5e);border-radius:6px;box-shadow:inset 0 1px 0 #a6a6a6,0 0 0 1.2px #262626"></div>
<div style="left:978.4px;top:11.6px;width:44.8px;height:27.6px;background:#a83c40;border-radius:4.5px;box-shadow:inset 1.5px 1.5px 1.5px rgba(0,0,0,.35)"></div>
<span class="t" style="left:990.98px;top:47.9px;font-size:10.4px;color:#262626;font-weight:700;transform-origin:50% 0;transform:scaleX(1.13);">Red</span>
<div style="left:1031.3px;top:6.2px;width:56px;height:55px;background:linear-gradient(#969696,#878787 40%,#5e5e5e);border-radius:6px;box-shadow:inset 0 1px 0 #a6a6a6,0 0 0 1.2px #262626"></div>
<div style="left:1036.9px;top:11.6px;width:44.8px;height:27.6px;background:#ecc84c;border-radius:4.5px;box-shadow:inset 1.5px 1.5px 1.5px rgba(0,0,0,.35)"></div>
<span class="t" style="left:1043.13px;top:47.9px;font-size:10.4px;color:#262626;font-weight:700;transform-origin:50% 0;transform:scaleX(1.13);">Yellow</span>
<div style="left:1089.8px;top:6.2px;width:56px;height:55px;background:linear-gradient(#969696,#878787 40%,#5e5e5e);border-radius:6px;box-shadow:inset 0 1px 0 #a6a6a6,0 0 0 1.2px #262626"></div>
<div style="left:1095.4px;top:11.6px;width:44.8px;height:27.6px;background:#b85a9c;border-radius:4.5px;box-shadow:inset 1.5px 1.5px 1.5px rgba(0,0,0,.35)"></div>
<span class="t" style="left:1096.72px;top:47.9px;font-size:10.4px;color:#262626;font-weight:700;transform-origin:50% 0;transform:scaleX(1.13);">Magenta</span>
<div style="left:1148.3px;top:6.2px;width:56px;height:55px;background:linear-gradient(#969696,#878787 40%,#5e5e5e);border-radius:6px;box-shadow:inset 0 1px 0 #a6a6a6,0 0 0 1.2px #262626"></div>
<div style="left:1153.9px;top:11.6px;width:44.8px;height:27.6px;background:#2a8cb0;border-radius:4.5px;box-shadow:inset 1.5px 1.5px 1.5px rgba(0,0,0,.35)"></div>
<span class="t" style="left:1163.59px;top:47.9px;font-size:10.4px;color:#262626;font-weight:700;transform-origin:50% 0;transform:scaleX(1.13);">Cyan</span>
<div style="left:1206.8px;top:6.2px;width:56px;height:55px;background:linear-gradient(#969696,#878787 40%,#5e5e5e);border-radius:6px;box-shadow:inset 0 1px 0 #a6a6a6,0 0 0 1.2px #262626"></div>
<div style="left:1212.4px;top:11.6px;width:44.8px;height:27.6px;background:#f00;border-radius:4.5px;box-shadow:inset 1.5px 1.5px 1.5px rgba(0,0,0,.35)"></div>
<span class="t" style="left:1210.25px;top:47.9px;font-size:10.4px;color:#262626;font-weight:700;transform-origin:50% 0;transform:scaleX(1.13);">100% Red</span>
<div style="left:1265.3px;top:6.2px;width:56px;height:55px;background:linear-gradient(#969696,#878787 40%,#5e5e5e);border-radius:6px;box-shadow:inset 0 1px 0 #a6a6a6,0 0 0 1.2px #262626"></div>
<div style="left:1270.9px;top:11.6px;width:44.8px;height:14px;background:#0f0;border-radius:4.5px;box-shadow:inset 1.5px 1.5px 1.5px rgba(0,0,0,.35)"></div>
<span class="t" style="left:1276.33px;top:34.5px;font-size:10.4px;color:#262626;font-weight:700;transform:scaleX(1.13);">100%</span>
<span class="t" style="left:1276.33px;top:47.9px;font-size:10.4px;color:#262626;font-weight:700;transform:scaleX(1.13);">Green</span>
<div style="left:1323.8px;top:6.2px;width:56px;height:55px;background:linear-gradient(#969696,#878787 40%,#5e5e5e);border-radius:6px;box-shadow:inset 0 1px 0 #a6a6a6,0 0 0 1.2px #262626"></div>
<div style="left:1329.4px;top:11.6px;width:44.8px;height:14px;background:#00f;border-radius:4.5px;box-shadow:inset 1.5px 1.5px 1.5px rgba(0,0,0,.35)"></div>
<span class="t" style="left:1336.78px;top:34.5px;font-size:10.4px;color:#262626;font-weight:700;transform:scaleX(1.13);">100%</span>
<span class="t" style="left:1336.78px;top:47.9px;font-size:10.4px;color:#262626;font-weight:700;transform:scaleX(1.13);">Blue</span>
<div style="left:1382.3px;top:6.2px;width:56px;height:55px;background:linear-gradient(#969696,#878787 40%,#5e5e5e);border-radius:6px;box-shadow:inset 0 1px 0 #a6a6a6,0 0 0 1.2px #262626"></div>
<div style="left:1387.9px;top:11.6px;width:44.8px;height:14px;background:#0ff;border-radius:4.5px;box-shadow:inset 1.5px 1.5px 1.5px rgba(0,0,0,.35)"></div>
<span class="t" style="left:1395.28px;top:34.5px;font-size:10.4px;color:#262626;font-weight:700;transform:scaleX(1.13);">100%</span>
<span class="t" style="left:1395.28px;top:47.9px;font-size:10.4px;color:#262626;font-weight:700;transform:scaleX(1.13);">Cyan</span>
<div style="left:1440.8px;top:6.2px;width:56px;height:55px;background:linear-gradient(#969696,#878787 40%,#5e5e5e);border-radius:6px;box-shadow:inset 0 1px 0 #a6a6a6,0 0 0 1.2px #262626"></div>
<div style="left:1446.4px;top:11.6px;width:44.8px;height:14px;background:#f0f;border-radius:4.5px;box-shadow:inset 1.5px 1.5px 1.5px rgba(0,0,0,.35)"></div>
<span class="t" style="left:1444.98px;top:34.5px;font-size:10.4px;color:#262626;font-weight:700;transform:scaleX(1.13);">100%</span>
<span class="t" style="left:1444.98px;top:47.9px;font-size:10.4px;color:#262626;font-weight:700;transform:scaleX(1.13);">Magenta</span>
<div style="left:1499.3px;top:6.2px;width:56px;height:55px;background:linear-gradient(#1b1b1b,#2a2a2a 60%,#3a3a3a);border-radius:6px;box-shadow:0 0 0 1.2px #262626"></div>
<div style="left:1504.9px;top:11.6px;width:44.8px;height:14px;background:#ff0;border-radius:4.5px;box-shadow:inset 1.5px 1.5px 1.5px rgba(90,90,0,.5)"></div>
<span class="t" style="left:1509.03px;top:34.5px;font-size:10.4px;color:#fff;font-weight:700;transform:scaleX(1.13);">100%</span>
<span class="t" style="left:1509.03px;top:47.9px;font-size:10.4px;color:#fff;font-weight:700;transform:scaleX(1.13);">Yellow</span>
</div>
<div style="left:0px;top:1132.3px;width:1555.5px;height:13.7px;background:linear-gradient(#505050,#404040);border-top:1px solid #5c5c5c"></div>
<div style="left:188px;top:1134px;width:1350px;height:11px;background:#383838;border-radius:6px"></div>
<div style="left:1.5px;top:1134px;width:13px;height:12px;background:#8a8a8a;border-radius:3px"></div>
<svg style="left:4px;top:1135px" width="8" height="10" viewBox="0 0 8 10"><path d="M6.5 1L1.5 5l5 4z" fill="#333"/></svg>
<div style="left:1543px;top:1134px;width:12.5px;height:12px;background:#8a8a8a;border-radius:3px"></div>
<svg style="left:1545.5px;top:1135px" width="8" height="10" viewBox="0 0 8 10"><path d="M1.5 1l5 4-5 4z" fill="#333"/></svg>
<div style="left:1556.7px;top:1076.2px;width:54px;height:20.6px;background:linear-gradient(#9c9c9c,#8a8a8a 45%,#6c6c6c);border-radius:6px 6px 0 0;box-shadow:inset 0 1px 0 #ababab,inset 1px 0 0 #a0a0a0,inset -1px 0 0 #5e5e5e"></div>
<div style="left:1575px;top:1078px;width:17px;height:17px;border-radius:50%;background:linear-gradient(#767676,#909090)"></div>
<svg style="left:1577px;top:1082px" width="13" height="8" viewBox="0 0 13 8"><path d="M1.6 6.4h9.8L6.5 1.4z" fill="#333"/></svg>
<div style="left:1556.7px;top:1097.8px;width:54px;height:48.2px;background:linear-gradient(#8a8a8a,#767676 45%,#5c5c5c);box-shadow:inset 0 1px 0 #ababab,inset 1px 0 0 #a0a0a0,inset -1px 0 0 #5e5e5e"></div>
<div style="left:1566.2px;top:1103.8px;width:34.4px;height:34.4px;border:2.6px solid #1e1e1e;border-radius:6px;background:linear-gradient(#a4a4a4,#8e8e8e 49%,#6c6c6c 51%,#7e7e7e)"></div>
<div style="left:1575.9px;top:1113.9px;width:15.5px;height:15px;background:linear-gradient(#1c1c1c 48%,#000 52%)"></div>
<div style="left:1612px;top:1076.2px;width:51.3px;height:33.4px;background:linear-gradient(#9c9c9c,#8a8a8a 45%,#6c6c6c);border-radius:6px 0 0 0;box-shadow:inset 0 1px 0 #ababab,inset 1px 0 0 #a0a0a0,inset -1px 0 0 #5e5e5e"></div>
<div style="left:1626.2px;top:1082.2px;width:22.6px;height:22.6px;border-radius:50%;background:linear-gradient(#6c6c6c,#929292)"></div>
<div style="left:1663.3px;top:1076.2px;width:50.9px;height:33.4px;background:linear-gradient(#9c9c9c,#8a8a8a 45%,#6c6c6c);box-shadow:inset 0 1px 0 #ababab,inset 1px 0 0 #a0a0a0,inset -1px 0 0 #5e5e5e"></div>
<div style="left:1677.9px;top:1082.2px;width:22.6px;height:22.6px;border-radius:50%;background:linear-gradient(#6c6c6c,#929292)"></div>
<div style="left:1714.2px;top:1076.2px;width:50.9px;height:33.4px;background:linear-gradient(#9c9c9c,#8a8a8a 45%,#6c6c6c);box-shadow:inset 0 1px 0 #ababab,inset 1px 0 0 #a0a0a0,inset -1px 0 0 #5e5e5e"></div>
<div style="left:1728.7px;top:1082.2px;width:22.6px;height:22.6px;border-radius:50%;background:linear-gradient(#6c6c6c,#929292)"></div>
<div style="left:1765.1px;top:1076.2px;width:50.4px;height:33.4px;background:linear-gradient(#9c9c9c,#8a8a8a 45%,#6c6c6c);box-shadow:inset 0 1px 0 #ababab,inset 1px 0 0 #a0a0a0,inset -1px 0 0 #5e5e5e"></div>
<div style="left:1779.3px;top:1082.2px;width:22.6px;height:22.6px;border-radius:50%;background:linear-gradient(#6c6c6c,#929292)"></div>
<div style="left:1815.5px;top:1076.2px;width:51px;height:33.4px;background:linear-gradient(#3e3e3e,#2e2e2e);box-shadow:none"></div>
<div style="left:1830px;top:1082.2px;width:22.6px;height:22.6px;border-radius:50%;background:linear-gradient(#252525,#333)"></div>
<div style="left:1866.5px;top:1076.2px;width:51.5px;height:33.4px;background:linear-gradient(#9c9c9c,#8a8a8a 45%,#6c6c6c);border-radius:0 6px 0 0;box-shadow:inset 0 1px 0 #ababab,inset 1px 0 0 #a0a0a0,inset -1px 0 0 #5e5e5e"></div>
<div style="left:1881.4px;top:1082.2px;width:22.6px;height:22.6px;border-radius:50%;background:linear-gradient(#8a8a8a,#a2a2a2)"></div>
<svg style="left:1612px;top:1077px" width="308" height="33" viewBox="1612 1077 308 33" fill="#2e2e2e">
<rect x="1633.1" y="1088.8" width="9.2" height="8.8"/><path d="M1685.9 1088.6v10.6l9.4-5.3z"/>
<g fill="none" stroke="#2e2e2e" stroke-width="1.7"><path d="M1736.4 1088.2h-2.4v10.6h2.4M1743.6 1088.2h2.4v10.6h-2.4"/><path d="M1736.9 1093.4h6.2" stroke-dasharray="1.3 0.9"/>
<path d="M1790.6 1093.3c-1.3-2-2.7-2.8-4-2.8a2.8 2.8 0 0 0 0 5.6c1.3 0 2.7-.8 4-2.8c1.3-2 2.7-2.8 4-2.8a2.8 2.8 0 0 1 0 5.6c-1.3 0-2.7-.8-4-2.8z"/></g>
<g fill="none" stroke="#181818" stroke-width="2.3"><path d="M1835.6 1091.8a6 6 0 0 1 10.4-1.9M1847 1095.2a6 6 0 0 1-10.4 1.9"/></g><path d="M1848 1086.6v5.2h-5.2zM1834.6 1100.4v-5.2h5.2z" fill="#181818"/></svg>
<div style="left:1612px;top:1111.6px;width:153px;height:34.4px;background:linear-gradient(#9c9c9c,#8a8a8a 45%,#6c6c6c);border-radius:6px 0 0 0;box-shadow:inset 0 1px 0 #ababab,inset 1px 0 0 #a0a0a0,inset -1px 0 0 #5e5e5e"></div>
<div style="left:1765px;top:1111.6px;width:153px;height:34.4px;background:linear-gradient(#9c9c9c,#8a8a8a 45%,#6c6c6c);border-radius:0 6px 0 0;box-shadow:inset 0 1px 0 #ababab,inset 1px 0 0 #a0a0a0,inset -1px 0 0 #5e5e5e"></div>
<div style="left:1918px;top:1076px;width:2px;height:70px;background:#262626"></div>
<div style="left:1635.5px;top:1116.9px;width:22.6px;height:22.6px;border-radius:50%;background:linear-gradient(#6c6c6c,#929292)"></div>
<div style="left:1875.3px;top:1116.9px;width:22.6px;height:22.6px;border-radius:50%;background:linear-gradient(#6c6c6c,#929292)"></div>
<svg style="left:1636px;top:1118px" width="262" height="22" viewBox="1636 1118 262 22" fill="none" stroke="#2e2e2e" stroke-width="1.7">
<path d="M1646.4 1123l-4.6 5.3 4.6 5.3M1651.6 1123l-4.6 5.3 4.6 5.3M1886.9 1123l4.6 5.3-4.6 5.3M1881.7 1123l4.6 5.3-4.6 5.3"/></svg>
<span class="t" style="left:1677px;top:1117.04px;font-size:23.7px;color:#333;transform:scaleX(1.067);text-shadow:0 0 .7px #333;">Back</span>
<span class="t" style="left:1796.6px;top:1117.04px;font-size:23.7px;color:#333;transform:scaleX(1.195);text-shadow:0 0 .7px #333;">Next</span>
<div style="left:1914.5px;top:62px;width:5.5px;height:1084px;background:linear-gradient(90deg,rgba(0,0,0,0),rgba(0,0,0,.35) 40%,rgba(0,0,0,.85))"></div>
<div style="left:0px;top:98.5px;width:1.2px;height:1048px;background:#484848"></div>
</body></html>
